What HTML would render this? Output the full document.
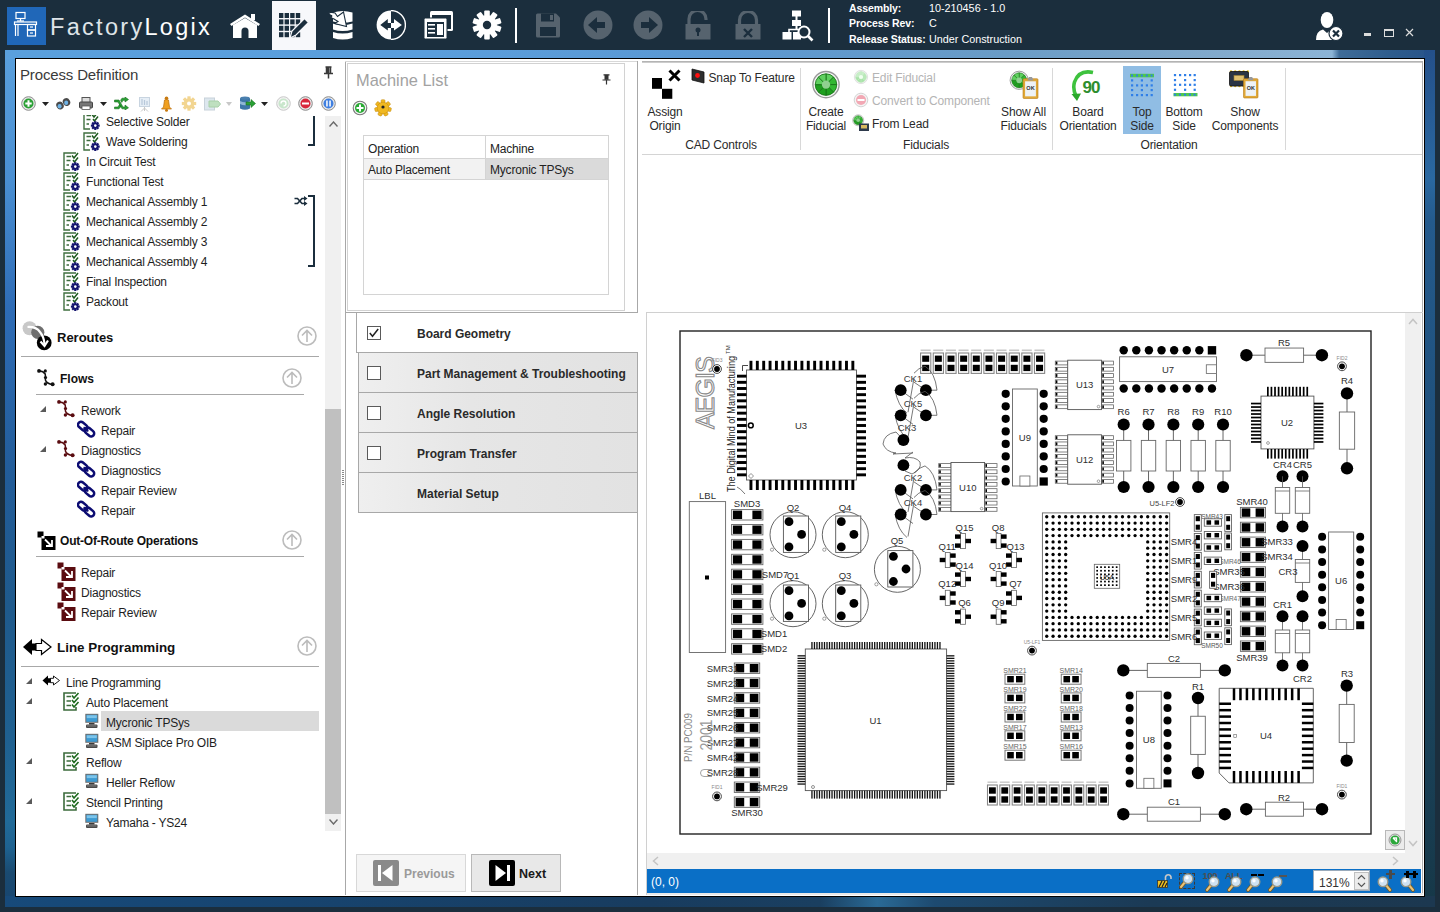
<!DOCTYPE html><html><head><meta charset="utf-8"><style>
*{box-sizing:border-box;margin:0;padding:0}
html,body{width:1440px;height:912px;overflow:hidden;background:#1b2e3d;font-family:"Liberation Sans",sans-serif;color:#1e1e1e}
.a{position:absolute}
.t{position:absolute;white-space:nowrap;font-size:11.5px;line-height:14px}
.b{font-weight:bold}
</style></head><body>
<div class="a" style="left:0;top:0;width:1440px;height:50px;background:#1b2e3d"></div>
<div class="a" style="left:5px;top:50px;width:1430px;height:857px;background:linear-gradient(180deg,#2a5f96 0%,#23558a 40%,#1c4a78 70%,#183f66 100%)"></div>
<div class="a" style="left:5px;top:50px;width:11px;height:857px;background:linear-gradient(180deg,#5aa0dd 0%,#4a8fd2 15%,#2e6cb6 30%,#225c98 50%,#1f5a8c 65%,#1f6090 80%,#216a98 90%,#1e6290 93%,#1a4a70 96%,#174570 100%)"></div>
<div class="a" style="left:5px;top:50px;width:1430px;height:9px;background:linear-gradient(90deg,#5aa0dd 0%,#5a9edc 30%,#5b98d2 50%,#6a9cc6 70%,#82aacc 85%,#8cb4d6 92.8%,#3f6c98 93.3%,#2e5c8c 97%,#27538a 100%)"></div>
<div class="a" style="left:1424px;top:50px;width:11px;height:857px;background:linear-gradient(180deg,#24508a 0%,#2a68a0 15%,#245a8c 20%,#1e4e78 50%,#1b4660 70%,#183c50 90%,#163848 100%)"></div>
<div class="a" style="left:5px;top:896px;width:1430px;height:11px;background:linear-gradient(90deg,#174a7a 0%,#17446f 20%,#183c5f 45%,#1a3f60 57%,#2a6a96 61%,#1d4a70 65%,#1b3a55 80%,#1c3850 100%)"></div>
<div class="a" style="left:15px;top:58px;width:1410px;height:839px;border:1px solid #000;background:#fff"></div>
<div class="a" style="left:7px;top:7px;width:39px;height:38px;background:#2067b8"></div>
<svg class="a" style="left:7px;top:7px" width="39" height="38" viewBox="0 0 39 38" fill="none" stroke="#fff" stroke-width="1.2">
    <rect x="9" y="5.5" width="9" height="6"/><line x1="13.5" y1="11.5" x2="13.5" y2="14"/><line x1="10" y1="14" x2="17" y2="14"/>
    <rect x="7.5" y="15" width="22" height="2.5"/><line x1="8.5" y1="17.5" x2="8.5" y2="29"/><line x1="11" y1="17.5" x2="11" y2="29"/>
    <rect x="20.5" y="17.5" width="8" height="5.5"/><rect x="20.5" y="23" width="8" height="6"/>
    <line x1="23" y1="20" x2="26" y2="20"/><line x1="23" y1="26" x2="26" y2="26"/></svg>
<div class="t" style="left:50px;top:12.5px;font-size:23.5px;line-height:28px;color:#dfe4e8;letter-spacing:2.3px">Factory<span style="color:#fff">Logix</span></div>
<div class="a" style="left:272px;top:1px;width:44px;height:49px;background:#f7f8fb"></div>
<svg class="a" style="left:229px;top:13px" width="32" height="26" viewBox="0 0 32 26">
    <path d="M1 11 L16 1.5 L31 11 L29.5 13 L16 4.5 L2.5 13Z" fill="#ffffff"/><rect x="22" y="1" width="4" height="6" fill="#ffffff"/>
    <path d="M4 12 L16 5 L28 12 V25 H19.5 V18 A3.5 3.5 0 0 0 12.5 18 V25 H4Z" fill="#ffffff"/></svg>
<svg class="a" style="left:278px;top:12px" width="31" height="27" viewBox="0 0 31 27"><rect x="1.0" y="1.0" width="4.4" height="5" fill="#1b2e3d"/><rect x="6.6" y="1.0" width="4.4" height="5" fill="#1b2e3d"/><rect x="12.2" y="1.0" width="4.4" height="5" fill="#1b2e3d"/><rect x="17.799999999999997" y="1.0" width="4.4" height="5" fill="#1b2e3d"/><rect x="1.0" y="7.4" width="4.4" height="5" fill="#1b2e3d"/><rect x="6.6" y="7.4" width="4.4" height="5" fill="#1b2e3d"/><rect x="12.2" y="7.4" width="4.4" height="5" fill="#1b2e3d"/><rect x="17.799999999999997" y="7.4" width="4.4" height="5" fill="#1b2e3d"/><rect x="1.0" y="13.8" width="4.4" height="5" fill="#1b2e3d"/><rect x="6.6" y="13.8" width="4.4" height="5" fill="#1b2e3d"/><rect x="12.2" y="13.8" width="4.4" height="5" fill="#1b2e3d"/><rect x="17.799999999999997" y="13.8" width="4.4" height="5" fill="#1b2e3d"/><rect x="1.0" y="20.200000000000003" width="4.4" height="5" fill="#1b2e3d"/><rect x="6.6" y="20.200000000000003" width="4.4" height="5" fill="#1b2e3d"/><rect x="12.2" y="20.200000000000003" width="4.4" height="5" fill="#1b2e3d"/><rect x="17.799999999999997" y="20.200000000000003" width="4.4" height="5" fill="#1b2e3d"/>
    <path d="M12 26 L14 19 L26.5 6.5 L30.5 10.5 L18 23 Z" fill="#1b2e3d" stroke="#f7f8fb" stroke-width="1.2"/></svg>
<svg class="a" style="left:328px;top:10px" width="26" height="31" viewBox="0 0 26 31">
    <path d="M5 22 Q14.5 25 24.5 22 V28 Q14.5 31 5 28Z" fill="#ffffff"/>
    <path d="M5 13.5 Q14.5 16.5 24.5 13.5 V19.5 Q14.5 22.5 5 19.5Z" fill="#ffffff"/>
    <path d="M5 2.5 Q14.5 -0.5 24.5 2.5 V11.5 Q14.5 14 5 11.5Z" fill="#ffffff"/>
    <path d="M0.8 2.8 Q4 1.8 7 3 L9.5 6.5 L15.5 2 L18.5 16.5 L6.5 13.5 L10 11.5 L6 9 Q3 8 2.5 7 Q4.5 6.5 3.5 5.5 Q1 5 0.8 2.8Z" fill="#ffffff" stroke="#1b2e3d" stroke-width="1.1" stroke-linejoin="miter"/></svg>
<svg class="a" style="left:376px;top:10px" width="30" height="30" viewBox="0 0 30 30">
    <path d="M15 0.6 A14.4 14.4 0 0 0 15 29.4Z" fill="#ffffff"/>
    <path d="M15 0.6 A14.4 14.4 0 0 1 15 29.4" fill="none" stroke="#ffffff" stroke-width="1.4"/>
    <path d="M4.3 15 L11.8 9 V13 H15 V18 H11.8 V20.6Z" fill="#1b2e3d"/>
    <path d="M25.9 15 L18 9 V13 H15 V18 H18 V20.6Z" fill="#ffffff"/></svg>
<svg class="a" style="left:424px;top:10px" width="30" height="30" viewBox="0 0 30 30">
    <rect x="6" y="1" width="23" height="20" rx="1.5" fill="#ffffff"/><rect x="8" y="5" width="19" height="14" fill="#1b2e3d"/>
    <rect x="0" y="8" width="23" height="21" rx="1.5" fill="#ffffff" stroke="#1b2e3d" stroke-width="1"/><rect x="3" y="12" width="17" height="15" fill="#1b2e3d"/>
    <rect x="4" y="14" width="7" height="1.6" fill="#ffffff"/><rect x="4" y="18" width="7" height="1.6" fill="#ffffff"/><rect x="4" y="22" width="7" height="1.6" fill="#ffffff"/><rect x="13" y="14" width="6" height="11" fill="#ffffff"/></svg>
<svg class="a" style="left:472px;top:10px" width="30" height="30" viewBox="-15 -15 30 30">
    <g fill="#ffffff"><rect x="-2.8" y="-14.5" width="5.6" height="6" rx="1" transform="rotate(0)"/><rect x="-2.8" y="-14.5" width="5.6" height="6" rx="1" transform="rotate(36)"/><rect x="-2.8" y="-14.5" width="5.6" height="6" rx="1" transform="rotate(72)"/><rect x="-2.8" y="-14.5" width="5.6" height="6" rx="1" transform="rotate(108)"/><rect x="-2.8" y="-14.5" width="5.6" height="6" rx="1" transform="rotate(144)"/><rect x="-2.8" y="-14.5" width="5.6" height="6" rx="1" transform="rotate(180)"/><rect x="-2.8" y="-14.5" width="5.6" height="6" rx="1" transform="rotate(216)"/><rect x="-2.8" y="-14.5" width="5.6" height="6" rx="1" transform="rotate(252)"/><rect x="-2.8" y="-14.5" width="5.6" height="6" rx="1" transform="rotate(288)"/><rect x="-2.8" y="-14.5" width="5.6" height="6" rx="1" transform="rotate(324)"/>
    <circle r="10"/></g><circle r="4.2" fill="#1b2e3d"/></svg>
<div class="a" style="left:515px;top:8px;width:1.5px;height:35px;background:#fff"></div>
<svg class="a" style="left:535px;top:13px" width="26" height="25" viewBox="0 0 26 25">
    <path d="M1 2 Q1 0.5 2.5 0.5 H21 L25 4.5 V23 Q25 24.5 23.5 24.5 H2.5 Q1 24.5 1 23Z" fill="#56636e"/>
    <rect x="6" y="0.5" width="13" height="8" fill="#1b2e3d"/><rect x="15" y="2" width="3" height="5" fill="#56636e"/>
    <rect x="5" y="14" width="16" height="9" fill="#1b2e3d"/></svg>
<svg class="a" style="left:583px;top:10px" width="30" height="30" viewBox="0 0 30 30">
    <circle cx="15" cy="15" r="14.5" fill="#56636e"/><path d="M5 15 L14 7 V12 H22 V18 H14 V23Z" fill="#1b2e3d"/></svg>
<svg class="a" style="left:633px;top:10px" width="30" height="30" viewBox="0 0 30 30">
    <circle cx="15" cy="15" r="14.5" fill="#56636e"/><path d="M25 15 L16 7 V12 H8 V18 H16 V23Z" fill="#1b2e3d"/></svg>
<svg class="a" style="left:685px;top:11px" width="26" height="29" viewBox="0 0 26 29">
    <path d="M4 13 V8 A8.5 8.5 0 0 1 21 8 V9" fill="none" stroke="#56636e" stroke-width="3.2"/>
    <rect x="0.5" y="13" width="25" height="15.5" fill="#56636e"/><circle cx="13" cy="19" r="2.5" fill="#1b2e3d"/><rect x="12" y="20" width="2" height="5" fill="#1b2e3d"/></svg>
<svg class="a" style="left:735px;top:11px" width="26" height="29" viewBox="0 0 26 29">
    <path d="M4.5 13 V9 A8.5 8.5 0 0 1 21.5 9 V13" fill="none" stroke="#56636e" stroke-width="3.2"/>
    <rect x="0.5" y="13" width="25" height="15.5" fill="#56636e"/><path d="M9 18 L17 26 M17 18 L9 26" stroke="#1b2e3d" stroke-width="2.4"/></svg>
<svg class="a" style="left:782px;top:10px" width="32" height="32" viewBox="0 0 32 32">
    <rect x="10" y="0.5" width="9" height="6" fill="#ffffff"/><rect x="13.5" y="6" width="2" height="4" fill="#ffffff"/>
    <rect x="10" y="10" width="9" height="6" fill="#ffffff"/><rect x="13.5" y="16" width="2" height="3" fill="#ffffff"/>
    <path d="M7 22 V19.5 H20 V22" fill="none" stroke="#ffffff" stroke-width="1.6"/>
    <rect x="0.5" y="22" width="9" height="7.5" fill="#ffffff"/><rect x="11" y="22" width="8" height="7.5" fill="#ffffff"/>
    <circle cx="22" cy="22" r="5.5" fill="#1b2e3d" stroke="#ffffff" stroke-width="2"/><path d="M26 26 L30.5 30.5" stroke="#ffffff" stroke-width="2.6"/></svg>
<div class="a" style="left:828px;top:8px;width:1.5px;height:35px;background:#fff"></div>
<div class="t b" style="left:849px;top:1.0px;font-size:10.5px;color:#fff;line-height:14px;letter-spacing:-0.1px">Assembly:</div>
<div class="t" style="left:929px;top:1.0px;font-size:10.8px;color:#fff;line-height:14px">10-210456 - 1.0</div>
<div class="t b" style="left:849px;top:16.3px;font-size:10.5px;color:#fff;line-height:14px;letter-spacing:-0.1px">Process Rev:</div>
<div class="t" style="left:929px;top:16.3px;font-size:10.8px;color:#fff;line-height:14px">C</div>
<div class="t b" style="left:849px;top:31.6px;font-size:10.5px;color:#fff;line-height:14px;letter-spacing:-0.1px">Release Status:</div>
<div class="t" style="left:929px;top:31.6px;font-size:10.8px;color:#fff;line-height:14px">Under Construction</div>
<svg class="a" style="left:1315px;top:12px" width="30" height="30" viewBox="0 0 30 30">
    <ellipse cx="12" cy="8" rx="6.3" ry="8" fill="#ffffff"/>
    <path d="M1 28 Q1 19 8 17.5 L12 21 L16 17.5 Q22 19 23 24 V28Z" fill="#ffffff"/>
    <circle cx="21" cy="21.5" r="7" fill="#ffffff" stroke="#1b2e3d" stroke-width="1.2"/>
    <path d="M18 18.5 L24 24.5 M24 18.5 L18 24.5" stroke="#1b2e3d" stroke-width="2.2"/></svg>
<div class="a" style="left:1364px;top:33px;width:7px;height:2.5px;background:#dcdcdc"></div>
<div class="a" style="left:1384px;top:29px;width:9.5px;height:7.5px;border:1.2px solid #dcdcdc;border-top-width:2px"></div>
<svg class="a" style="left:1405px;top:28px" width="9" height="9" viewBox="0 0 9 9"><path d="M1 1 L8 8 M8 1 L1 8" stroke="#dcdcdc" stroke-width="1.2"/></svg>
<div class="t" style="left:20px;top:66px;font-size:15px;line-height:18px;color:#3a3a3a;letter-spacing:-0.15px">Process Definition</div>
<svg class="a" style="left:323px;top:66px" width="11" height="13" viewBox="0 0 11 13"><path d="M2.5 1 H8.5 M3.5 1 V7 M7.5 1 V7 M1 7.5 H10 M5.5 7.5 V12.5" stroke="#3a3a3a" stroke-width="1.5" fill="none"/><rect x="3.5" y="1" width="3" height="6" fill="#3a3a3a"/></svg>
<svg class="a" style="left:21px;top:96px" width="15" height="15" viewBox="0 0 15 15"><circle cx="7.5" cy="7.5" r="6.8" fill="#e8e8e8" stroke="#8a8a8a" stroke-width="1"/><circle cx="7.5" cy="7.5" r="5" fill="#2aa035"/><path d="M7.5 4.3 V10.7 M4.3 7.5 H10.7" stroke="#fff" stroke-width="2"/></svg>
<svg class="a" style="left:42px;top:102px" width="7" height="4" viewBox="0 0 7 4"><path d="M0 0 H7 L3.5 4Z" fill="#222"/></svg>
<svg class="a" style="left:56px;top:97px" width="15" height="13" viewBox="0 0 15 13"><g fill="#4a4a4a"><ellipse cx="4" cy="8.5" rx="3.6" ry="4" transform="rotate(-30 4 8.5)"/><ellipse cx="10.5" cy="5" rx="3.6" ry="4" transform="rotate(-30 10.5 5)"/></g><g fill="#6fb3e6"><ellipse cx="3.6" cy="9.3" rx="2" ry="2.2"/><ellipse cx="10.2" cy="5.8" rx="2" ry="2.2"/></g></svg>
<svg class="a" style="left:79px;top:97px" width="14" height="13" viewBox="0 0 14 13"><rect x="3" y="0.5" width="8" height="5" fill="#ddd" stroke="#555"/><rect x="0.5" y="5" width="13" height="6" rx="1" fill="#777" stroke="#444"/><rect x="3" y="9" width="8" height="3.5" fill="#fff" stroke="#555" stroke-width="0.8"/></svg>
<svg class="a" style="left:100px;top:102px" width="7" height="4" viewBox="0 0 7 4"><path d="M0 0 H7 L3.5 4Z" fill="#222"/></svg>
<svg class="a" style="left:114px;top:97px" width="15" height="13" viewBox="0 0 15 13"><path d="M0.5 3 H5 L9 10 H11 V8 L14.5 10.8 L11 13 V11.8 H8 L4 5 H0.5Z M0.5 10 H4 L5.5 7.5 L6.8 9.7 L5 11.8 H0.5Z M8 1.2 H11 V0 L14.5 2.5 L11 5 V3.3 H9 L7.8 5.4 L6.6 3.2Z" fill="#2aa035" stroke="#17701e" stroke-width="0.6"/></svg>
<svg class="a" style="left:139px;top:97px" width="11" height="15" viewBox="0 0 11 15"><rect x="0.5" y="0.5" width="10" height="9" fill="#e6eef6" stroke="#c8d4e0"/><path d="M3 2 V8 M5.5 3 V8 M8 4 V8" stroke="#b8c8da" stroke-width="1.2"/><path d="M5.5 10 V14 M2 14.5 L5.5 11 L9 14.5" stroke="#c8c8c8" fill="none"/></svg>
<svg class="a" style="left:161px;top:96px" width="11" height="16" viewBox="0 0 11 16"><circle cx="5.5" cy="2.2" r="1.8" fill="#c87a10"/><path d="M3.5 4 Q5.5 3 7.5 4 L8.5 11 L10.5 13 H0.5 L2.5 11Z" fill="#f0a020" stroke="#b86c0a" stroke-width="0.7"/><circle cx="5.5" cy="14.3" r="1.5" fill="#c87a10"/></svg>
<svg class="a" style="left:181px;top:96px" width="16" height="15" viewBox="-8 -7.5 16 15"><g fill="#f2d591"><rect x="-1.6" y="-7.2" width="3.2" height="3.5" transform="rotate(0)"/><rect x="-1.6" y="-7.2" width="3.2" height="3.5" transform="rotate(45)"/><rect x="-1.6" y="-7.2" width="3.2" height="3.5" transform="rotate(90)"/><rect x="-1.6" y="-7.2" width="3.2" height="3.5" transform="rotate(135)"/><rect x="-1.6" y="-7.2" width="3.2" height="3.5" transform="rotate(180)"/><rect x="-1.6" y="-7.2" width="3.2" height="3.5" transform="rotate(225)"/><rect x="-1.6" y="-7.2" width="3.2" height="3.5" transform="rotate(270)"/><rect x="-1.6" y="-7.2" width="3.2" height="3.5" transform="rotate(315)"/><circle r="5.3"/></g><circle r="2" fill="#fff"/></svg>
<svg class="a" style="left:204px;top:96px" width="17" height="15" viewBox="0 0 17 15"><rect x="0.5" y="2" width="10" height="12" fill="#dde7ee" stroke="#c8d2da"/><path d="M5 5 H14 L16.5 8 L14 11 H5Z" fill="#bfe0c0" stroke="#a8d0a8"/></svg>
<svg class="a" style="left:226px;top:102px" width="6" height="4" viewBox="0 0 6 4"><path d="M0 0 H6 L3 4Z" fill="#c8c8c8"/></svg>
<svg class="a" style="left:239px;top:96px" width="17" height="15" viewBox="0 0 17 15"><ellipse cx="6" cy="2.5" rx="5" ry="2" fill="#4a7fae"/><path d="M1 2.5 V12.5 Q6 15 11 12.5 V2.5 Q6 5 1 2.5Z" fill="#3d76a8"/><path d="M1 5 Q6 7.5 11 5 V8 Q6 10.5 1 8Z" fill="#8fb6d6"/><path d="M7 6 H12 V3.5 L16.5 7.5 L12 11.5 V9 H7Z" fill="#2aa035" stroke="#17701e" stroke-width="0.6"/></svg>
<svg class="a" style="left:261px;top:102px" width="7" height="4" viewBox="0 0 7 4"><path d="M0 0 H7 L3.5 4Z" fill="#222"/></svg>
<svg class="a" style="left:276px;top:96px" width="15" height="15" viewBox="0 0 15 15"><circle cx="7.5" cy="7.5" r="6.8" fill="#f2f2f2" stroke="#c8c8c8" stroke-width="1"/><circle cx="7.5" cy="7.5" r="5" fill="#c9e6cc"/><path d="M5 7.5 A2.5 2.5 0 1 1 7.5 10" stroke="#fff" stroke-width="1.3" fill="none"/></svg>
<svg class="a" style="left:298px;top:96px" width="15" height="15" viewBox="0 0 15 15"><circle cx="7.5" cy="7.5" r="6.8" fill="#e8e8e8" stroke="#8a8a8a" stroke-width="1"/><circle cx="7.5" cy="7.5" r="5" fill="#d8283c"/><rect x="4" y="6.5" width="7" height="2" fill="#fff"/></svg>
<svg class="a" style="left:321px;top:96px" width="15" height="15" viewBox="0 0 15 15"><circle cx="7.5" cy="7.5" r="6.8" fill="#e8e8e8" stroke="#8a8a8a" stroke-width="1"/><circle cx="7.5" cy="7.5" r="5" fill="#3f7fe0"/><rect x="5.2" y="4.5" width="1.5" height="6" fill="#fff"/><rect x="8.3" y="4.5" width="1.5" height="6" fill="#fff"/></svg>
<div class="a" style="left:83px;top:115px;width:18px;height:15px;overflow:hidden"><div style="position:relative;top:-4px"><svg class="a" style="left:0px;top:0px" width="17" height="19" viewBox="0 0 17 19">
<path d="M13 1 H1 V18 H7" fill="none" stroke="#3f6f3f" stroke-width="1.4"/>
<path d="M3.5 4.5 H8 M3.5 8.5 H7.5 M3.5 13 H6" stroke="#3b6b3b" stroke-width="1.3"/>
<path d="M9 3.5 L11 6 L15 1 M10 8 L11.5 10 L15 5.5" fill="none" stroke="#1e5a1e" stroke-width="1.5"/>
<g transform="translate(12.3 14.6)" fill="#14146e"><rect x="-1.1" y="-4.4" width="2.2" height="2.8" transform="rotate(0)"/><rect x="-1.1" y="-4.4" width="2.2" height="2.8" transform="rotate(45)"/><rect x="-1.1" y="-4.4" width="2.2" height="2.8" transform="rotate(90)"/><rect x="-1.1" y="-4.4" width="2.2" height="2.8" transform="rotate(135)"/><rect x="-1.1" y="-4.4" width="2.2" height="2.8" transform="rotate(180)"/><rect x="-1.1" y="-4.4" width="2.2" height="2.8" transform="rotate(225)"/><rect x="-1.1" y="-4.4" width="2.2" height="2.8" transform="rotate(270)"/><rect x="-1.1" y="-4.4" width="2.2" height="2.8" transform="rotate(315)"/><circle r="3.1"/></g>
<circle cx="12.3" cy="14.6" r="1.3" fill="#fff"/></svg></div></div>
<div class="t" style="left:106px;top:115.4px;font-size:12px;letter-spacing:-0.2px;">Selective Solder</div>
<svg class="a" style="left:83px;top:132px" width="17" height="19" viewBox="0 0 17 19">
<path d="M13 1 H1 V18 H7" fill="none" stroke="#3f6f3f" stroke-width="1.4"/>
<path d="M3.5 4.5 H8 M3.5 8.5 H7.5 M3.5 13 H6" stroke="#3b6b3b" stroke-width="1.3"/>
<path d="M9 3.5 L11 6 L15 1 M10 8 L11.5 10 L15 5.5" fill="none" stroke="#1e5a1e" stroke-width="1.5"/>
<g transform="translate(12.3 14.6)" fill="#14146e"><rect x="-1.1" y="-4.4" width="2.2" height="2.8" transform="rotate(0)"/><rect x="-1.1" y="-4.4" width="2.2" height="2.8" transform="rotate(45)"/><rect x="-1.1" y="-4.4" width="2.2" height="2.8" transform="rotate(90)"/><rect x="-1.1" y="-4.4" width="2.2" height="2.8" transform="rotate(135)"/><rect x="-1.1" y="-4.4" width="2.2" height="2.8" transform="rotate(180)"/><rect x="-1.1" y="-4.4" width="2.2" height="2.8" transform="rotate(225)"/><rect x="-1.1" y="-4.4" width="2.2" height="2.8" transform="rotate(270)"/><rect x="-1.1" y="-4.4" width="2.2" height="2.8" transform="rotate(315)"/><circle r="3.1"/></g>
<circle cx="12.3" cy="14.6" r="1.3" fill="#fff"/></svg>
<div class="t" style="left:106px;top:135.4px;font-size:12px;letter-spacing:-0.2px;">Wave Soldering</div>
<svg class="a" style="left:63px;top:152px" width="17" height="19" viewBox="0 0 17 19">
<path d="M13 1 H1 V18 H7" fill="none" stroke="#3f6f3f" stroke-width="1.4"/>
<path d="M3.5 4.5 H8 M3.5 8.5 H7.5 M3.5 13 H6" stroke="#3b6b3b" stroke-width="1.3"/>
<path d="M9 3.5 L11 6 L15 1 M10 8 L11.5 10 L15 5.5" fill="none" stroke="#1e5a1e" stroke-width="1.5"/>
<g transform="translate(12.3 14.6)" fill="#14146e"><rect x="-1.1" y="-4.4" width="2.2" height="2.8" transform="rotate(0)"/><rect x="-1.1" y="-4.4" width="2.2" height="2.8" transform="rotate(45)"/><rect x="-1.1" y="-4.4" width="2.2" height="2.8" transform="rotate(90)"/><rect x="-1.1" y="-4.4" width="2.2" height="2.8" transform="rotate(135)"/><rect x="-1.1" y="-4.4" width="2.2" height="2.8" transform="rotate(180)"/><rect x="-1.1" y="-4.4" width="2.2" height="2.8" transform="rotate(225)"/><rect x="-1.1" y="-4.4" width="2.2" height="2.8" transform="rotate(270)"/><rect x="-1.1" y="-4.4" width="2.2" height="2.8" transform="rotate(315)"/><circle r="3.1"/></g>
<circle cx="12.3" cy="14.6" r="1.3" fill="#fff"/></svg>
<div class="t" style="left:86px;top:155.4px;font-size:12px;letter-spacing:-0.2px;">In Circuit Test</div>
<svg class="a" style="left:63px;top:172px" width="17" height="19" viewBox="0 0 17 19">
<path d="M13 1 H1 V18 H7" fill="none" stroke="#3f6f3f" stroke-width="1.4"/>
<path d="M3.5 4.5 H8 M3.5 8.5 H7.5 M3.5 13 H6" stroke="#3b6b3b" stroke-width="1.3"/>
<path d="M9 3.5 L11 6 L15 1 M10 8 L11.5 10 L15 5.5" fill="none" stroke="#1e5a1e" stroke-width="1.5"/>
<g transform="translate(12.3 14.6)" fill="#14146e"><rect x="-1.1" y="-4.4" width="2.2" height="2.8" transform="rotate(0)"/><rect x="-1.1" y="-4.4" width="2.2" height="2.8" transform="rotate(45)"/><rect x="-1.1" y="-4.4" width="2.2" height="2.8" transform="rotate(90)"/><rect x="-1.1" y="-4.4" width="2.2" height="2.8" transform="rotate(135)"/><rect x="-1.1" y="-4.4" width="2.2" height="2.8" transform="rotate(180)"/><rect x="-1.1" y="-4.4" width="2.2" height="2.8" transform="rotate(225)"/><rect x="-1.1" y="-4.4" width="2.2" height="2.8" transform="rotate(270)"/><rect x="-1.1" y="-4.4" width="2.2" height="2.8" transform="rotate(315)"/><circle r="3.1"/></g>
<circle cx="12.3" cy="14.6" r="1.3" fill="#fff"/></svg>
<div class="t" style="left:86px;top:175.4px;font-size:12px;letter-spacing:-0.2px;">Functional Test</div>
<svg class="a" style="left:63px;top:192px" width="17" height="19" viewBox="0 0 17 19">
<path d="M13 1 H1 V18 H7" fill="none" stroke="#3f6f3f" stroke-width="1.4"/>
<path d="M3.5 4.5 H8 M3.5 8.5 H7.5 M3.5 13 H6" stroke="#3b6b3b" stroke-width="1.3"/>
<path d="M9 3.5 L11 6 L15 1 M10 8 L11.5 10 L15 5.5" fill="none" stroke="#1e5a1e" stroke-width="1.5"/>
<g transform="translate(12.3 14.6)" fill="#14146e"><rect x="-1.1" y="-4.4" width="2.2" height="2.8" transform="rotate(0)"/><rect x="-1.1" y="-4.4" width="2.2" height="2.8" transform="rotate(45)"/><rect x="-1.1" y="-4.4" width="2.2" height="2.8" transform="rotate(90)"/><rect x="-1.1" y="-4.4" width="2.2" height="2.8" transform="rotate(135)"/><rect x="-1.1" y="-4.4" width="2.2" height="2.8" transform="rotate(180)"/><rect x="-1.1" y="-4.4" width="2.2" height="2.8" transform="rotate(225)"/><rect x="-1.1" y="-4.4" width="2.2" height="2.8" transform="rotate(270)"/><rect x="-1.1" y="-4.4" width="2.2" height="2.8" transform="rotate(315)"/><circle r="3.1"/></g>
<circle cx="12.3" cy="14.6" r="1.3" fill="#fff"/></svg>
<div class="t" style="left:86px;top:195.4px;font-size:12px;letter-spacing:-0.2px;">Mechanical Assembly 1</div>
<svg class="a" style="left:63px;top:212px" width="17" height="19" viewBox="0 0 17 19">
<path d="M13 1 H1 V18 H7" fill="none" stroke="#3f6f3f" stroke-width="1.4"/>
<path d="M3.5 4.5 H8 M3.5 8.5 H7.5 M3.5 13 H6" stroke="#3b6b3b" stroke-width="1.3"/>
<path d="M9 3.5 L11 6 L15 1 M10 8 L11.5 10 L15 5.5" fill="none" stroke="#1e5a1e" stroke-width="1.5"/>
<g transform="translate(12.3 14.6)" fill="#14146e"><rect x="-1.1" y="-4.4" width="2.2" height="2.8" transform="rotate(0)"/><rect x="-1.1" y="-4.4" width="2.2" height="2.8" transform="rotate(45)"/><rect x="-1.1" y="-4.4" width="2.2" height="2.8" transform="rotate(90)"/><rect x="-1.1" y="-4.4" width="2.2" height="2.8" transform="rotate(135)"/><rect x="-1.1" y="-4.4" width="2.2" height="2.8" transform="rotate(180)"/><rect x="-1.1" y="-4.4" width="2.2" height="2.8" transform="rotate(225)"/><rect x="-1.1" y="-4.4" width="2.2" height="2.8" transform="rotate(270)"/><rect x="-1.1" y="-4.4" width="2.2" height="2.8" transform="rotate(315)"/><circle r="3.1"/></g>
<circle cx="12.3" cy="14.6" r="1.3" fill="#fff"/></svg>
<div class="t" style="left:86px;top:215.4px;font-size:12px;letter-spacing:-0.2px;">Mechanical Assembly 2</div>
<svg class="a" style="left:63px;top:232px" width="17" height="19" viewBox="0 0 17 19">
<path d="M13 1 H1 V18 H7" fill="none" stroke="#3f6f3f" stroke-width="1.4"/>
<path d="M3.5 4.5 H8 M3.5 8.5 H7.5 M3.5 13 H6" stroke="#3b6b3b" stroke-width="1.3"/>
<path d="M9 3.5 L11 6 L15 1 M10 8 L11.5 10 L15 5.5" fill="none" stroke="#1e5a1e" stroke-width="1.5"/>
<g transform="translate(12.3 14.6)" fill="#14146e"><rect x="-1.1" y="-4.4" width="2.2" height="2.8" transform="rotate(0)"/><rect x="-1.1" y="-4.4" width="2.2" height="2.8" transform="rotate(45)"/><rect x="-1.1" y="-4.4" width="2.2" height="2.8" transform="rotate(90)"/><rect x="-1.1" y="-4.4" width="2.2" height="2.8" transform="rotate(135)"/><rect x="-1.1" y="-4.4" width="2.2" height="2.8" transform="rotate(180)"/><rect x="-1.1" y="-4.4" width="2.2" height="2.8" transform="rotate(225)"/><rect x="-1.1" y="-4.4" width="2.2" height="2.8" transform="rotate(270)"/><rect x="-1.1" y="-4.4" width="2.2" height="2.8" transform="rotate(315)"/><circle r="3.1"/></g>
<circle cx="12.3" cy="14.6" r="1.3" fill="#fff"/></svg>
<div class="t" style="left:86px;top:235.4px;font-size:12px;letter-spacing:-0.2px;">Mechanical Assembly 3</div>
<svg class="a" style="left:63px;top:252px" width="17" height="19" viewBox="0 0 17 19">
<path d="M13 1 H1 V18 H7" fill="none" stroke="#3f6f3f" stroke-width="1.4"/>
<path d="M3.5 4.5 H8 M3.5 8.5 H7.5 M3.5 13 H6" stroke="#3b6b3b" stroke-width="1.3"/>
<path d="M9 3.5 L11 6 L15 1 M10 8 L11.5 10 L15 5.5" fill="none" stroke="#1e5a1e" stroke-width="1.5"/>
<g transform="translate(12.3 14.6)" fill="#14146e"><rect x="-1.1" y="-4.4" width="2.2" height="2.8" transform="rotate(0)"/><rect x="-1.1" y="-4.4" width="2.2" height="2.8" transform="rotate(45)"/><rect x="-1.1" y="-4.4" width="2.2" height="2.8" transform="rotate(90)"/><rect x="-1.1" y="-4.4" width="2.2" height="2.8" transform="rotate(135)"/><rect x="-1.1" y="-4.4" width="2.2" height="2.8" transform="rotate(180)"/><rect x="-1.1" y="-4.4" width="2.2" height="2.8" transform="rotate(225)"/><rect x="-1.1" y="-4.4" width="2.2" height="2.8" transform="rotate(270)"/><rect x="-1.1" y="-4.4" width="2.2" height="2.8" transform="rotate(315)"/><circle r="3.1"/></g>
<circle cx="12.3" cy="14.6" r="1.3" fill="#fff"/></svg>
<div class="t" style="left:86px;top:255.4px;font-size:12px;letter-spacing:-0.2px;">Mechanical Assembly 4</div>
<svg class="a" style="left:63px;top:272px" width="17" height="19" viewBox="0 0 17 19">
<path d="M13 1 H1 V18 H7" fill="none" stroke="#3f6f3f" stroke-width="1.4"/>
<path d="M3.5 4.5 H8 M3.5 8.5 H7.5 M3.5 13 H6" stroke="#3b6b3b" stroke-width="1.3"/>
<path d="M9 3.5 L11 6 L15 1 M10 8 L11.5 10 L15 5.5" fill="none" stroke="#1e5a1e" stroke-width="1.5"/>
<g transform="translate(12.3 14.6)" fill="#14146e"><rect x="-1.1" y="-4.4" width="2.2" height="2.8" transform="rotate(0)"/><rect x="-1.1" y="-4.4" width="2.2" height="2.8" transform="rotate(45)"/><rect x="-1.1" y="-4.4" width="2.2" height="2.8" transform="rotate(90)"/><rect x="-1.1" y="-4.4" width="2.2" height="2.8" transform="rotate(135)"/><rect x="-1.1" y="-4.4" width="2.2" height="2.8" transform="rotate(180)"/><rect x="-1.1" y="-4.4" width="2.2" height="2.8" transform="rotate(225)"/><rect x="-1.1" y="-4.4" width="2.2" height="2.8" transform="rotate(270)"/><rect x="-1.1" y="-4.4" width="2.2" height="2.8" transform="rotate(315)"/><circle r="3.1"/></g>
<circle cx="12.3" cy="14.6" r="1.3" fill="#fff"/></svg>
<div class="t" style="left:86px;top:275.4px;font-size:12px;letter-spacing:-0.2px;">Final Inspection</div>
<svg class="a" style="left:63px;top:292px" width="17" height="19" viewBox="0 0 17 19">
<path d="M13 1 H1 V18 H7" fill="none" stroke="#3f6f3f" stroke-width="1.4"/>
<path d="M3.5 4.5 H8 M3.5 8.5 H7.5 M3.5 13 H6" stroke="#3b6b3b" stroke-width="1.3"/>
<path d="M9 3.5 L11 6 L15 1 M10 8 L11.5 10 L15 5.5" fill="none" stroke="#1e5a1e" stroke-width="1.5"/>
<g transform="translate(12.3 14.6)" fill="#14146e"><rect x="-1.1" y="-4.4" width="2.2" height="2.8" transform="rotate(0)"/><rect x="-1.1" y="-4.4" width="2.2" height="2.8" transform="rotate(45)"/><rect x="-1.1" y="-4.4" width="2.2" height="2.8" transform="rotate(90)"/><rect x="-1.1" y="-4.4" width="2.2" height="2.8" transform="rotate(135)"/><rect x="-1.1" y="-4.4" width="2.2" height="2.8" transform="rotate(180)"/><rect x="-1.1" y="-4.4" width="2.2" height="2.8" transform="rotate(225)"/><rect x="-1.1" y="-4.4" width="2.2" height="2.8" transform="rotate(270)"/><rect x="-1.1" y="-4.4" width="2.2" height="2.8" transform="rotate(315)"/><circle r="3.1"/></g>
<circle cx="12.3" cy="14.6" r="1.3" fill="#fff"/></svg>
<div class="t" style="left:86px;top:295.4px;font-size:12px;letter-spacing:-0.2px;">Packout</div>
<div class="a" style="left:308px;top:116px;width:7px;height:30px;border-right:2px solid #1b2e3d;border-bottom:2px solid #1b2e3d"></div>
<div class="a" style="left:308px;top:195px;width:7px;height:72px;border:2px solid #1b2e3d;border-left:none"></div>
<svg class="a" style="left:294px;top:196px" width="14" height="10" viewBox="0 0 14 10"><path d="M0.5 2.5 H3.5 L8 7.5 H11 M0.5 7.5 H3.5 L8 2.5 H11" fill="none" stroke="#1b2e3d" stroke-width="1.6"/><path d="M10 0 L13.5 2.5 L10 5Z M10 5 L13.5 7.5 L10 10Z" fill="#1b2e3d"/></svg>
<svg class="a" style="left:21px;top:320px" width="32" height="32" viewBox="0 0 32 32">
<circle cx="8.6" cy="8.3" r="7" fill="#c8c8c8"/><circle cx="16.8" cy="12.3" r="6.6" fill="#6e6e6e"/>
<circle cx="23.2" cy="22.8" r="7.4" fill="#000"/>
<path d="M6.5 7 Q15 6.5 19 12 Q23 17 23.5 24" fill="none" stroke="#fff" stroke-width="2.2"/>
<path d="M19.5 21.5 L23.5 26 L27 20.5" fill="none" stroke="#fff" stroke-width="2.2"/></svg>
<div class="t b" style="left:57px;top:330px;font-size:13px;line-height:16px;color:#111">Reroutes</div>
<svg class="a" style="left:297px;top:326px" width="20" height="20" viewBox="0 0 20 20">
<circle cx="10" cy="10" r="9" fill="none" stroke="#bcbcbc" stroke-width="1.6"/>
<path d="M10 16 V4.5 M5 9.5 L10 4.5 L15 9.5" fill="none" stroke="#bcbcbc" stroke-width="1.6"/></svg>
<div class="a" style="left:21px;top:356px;width:298px;height:1px;background:#a8a8a8"></div>
<svg class="a" style="left:37px;top:369px" width="18" height="18" viewBox="0 0 18 18">
<path d="M2 1.8 Q6.5 2.2 8.2 5 Q8.8 8 8.4 11 Q9.5 14.8 16 15.4" fill="none" stroke="#111" stroke-width="1.5"/>
<g fill="#111"><circle cx="2" cy="1.9" r="1.9"/><circle cx="8.3" cy="1.9" r="1.6"/><circle cx="8.5" cy="8.5" r="1.6"/><circle cx="8.4" cy="15" r="1.7"/><circle cx="15.6" cy="15.3" r="2"/></g></svg>
<div class="t b" style="left:60px;top:372px;font-size:12px;line-height:14px;color:#111">Flows</div>
<svg class="a" style="left:282px;top:368px" width="20" height="20" viewBox="0 0 20 20">
<circle cx="10" cy="10" r="9" fill="none" stroke="#bcbcbc" stroke-width="1.6"/>
<path d="M10 16 V4.5 M5 9.5 L10 4.5 L15 9.5" fill="none" stroke="#bcbcbc" stroke-width="1.6"/></svg>
<div class="a" style="left:36px;top:394px;width:268px;height:1px;background:#a8a8a8"></div>
<svg class="a" style="left:40px;top:406px" width="7" height="6" viewBox="0 0 7 6"><path d="M0 6 L6 0 V6Z" fill="#5a5a5a"/></svg>
<svg class="a" style="left:57px;top:400px" width="18" height="18" viewBox="0 0 18 18">
<path d="M2 1.8 Q6.5 2.2 8.2 5 Q8.8 8 8.4 11 Q9.5 14.8 16 15.4" fill="none" stroke="#5a0c10" stroke-width="1.5"/>
<g fill="#5a0c10"><circle cx="2" cy="1.9" r="1.9"/><circle cx="8.3" cy="1.9" r="1.6"/><circle cx="8.5" cy="8.5" r="1.6"/><circle cx="8.4" cy="15" r="1.7"/><circle cx="15.6" cy="15.3" r="2"/></g></svg>
<div class="t" style="left:81px;top:403.9px;font-size:12px;letter-spacing:-0.2px;">Rework</div>
<svg class="a" style="left:77px;top:420px" width="19" height="18" viewBox="0 0 19 18">
<g fill="none" stroke="#0c0c72" stroke-width="2.5"><rect x="0.5" y="3.2" width="10.5" height="6" rx="3" transform="rotate(40 5.75 6.2)"/>
<rect x="7.2" y="9" width="10.5" height="6" rx="3" transform="rotate(40 12.45 12)"/>
<path d="M6.5 7.5 Q9.5 9 11 11.5" stroke-width="2.2"/></g></svg>
<div class="t" style="left:101px;top:423.9px;font-size:12px;letter-spacing:-0.2px;">Repair</div>
<svg class="a" style="left:40px;top:446px" width="7" height="6" viewBox="0 0 7 6"><path d="M0 6 L6 0 V6Z" fill="#5a5a5a"/></svg>
<svg class="a" style="left:57px;top:440px" width="18" height="18" viewBox="0 0 18 18">
<path d="M2 1.8 Q6.5 2.2 8.2 5 Q8.8 8 8.4 11 Q9.5 14.8 16 15.4" fill="none" stroke="#5a0c10" stroke-width="1.5"/>
<g fill="#5a0c10"><circle cx="2" cy="1.9" r="1.9"/><circle cx="8.3" cy="1.9" r="1.6"/><circle cx="8.5" cy="8.5" r="1.6"/><circle cx="8.4" cy="15" r="1.7"/><circle cx="15.6" cy="15.3" r="2"/></g></svg>
<div class="t" style="left:81px;top:443.9px;font-size:12px;letter-spacing:-0.2px;">Diagnostics</div>
<svg class="a" style="left:77px;top:460px" width="19" height="18" viewBox="0 0 19 18">
<g fill="none" stroke="#0c0c72" stroke-width="2.5"><rect x="0.5" y="3.2" width="10.5" height="6" rx="3" transform="rotate(40 5.75 6.2)"/>
<rect x="7.2" y="9" width="10.5" height="6" rx="3" transform="rotate(40 12.45 12)"/>
<path d="M6.5 7.5 Q9.5 9 11 11.5" stroke-width="2.2"/></g></svg>
<div class="t" style="left:101px;top:463.9px;font-size:12px;letter-spacing:-0.2px;">Diagnostics</div>
<svg class="a" style="left:77px;top:480px" width="19" height="18" viewBox="0 0 19 18">
<g fill="none" stroke="#0c0c72" stroke-width="2.5"><rect x="0.5" y="3.2" width="10.5" height="6" rx="3" transform="rotate(40 5.75 6.2)"/>
<rect x="7.2" y="9" width="10.5" height="6" rx="3" transform="rotate(40 12.45 12)"/>
<path d="M6.5 7.5 Q9.5 9 11 11.5" stroke-width="2.2"/></g></svg>
<div class="t" style="left:101px;top:483.9px;font-size:12px;letter-spacing:-0.2px;">Repair Review</div>
<svg class="a" style="left:77px;top:500px" width="19" height="18" viewBox="0 0 19 18">
<g fill="none" stroke="#0c0c72" stroke-width="2.5"><rect x="0.5" y="3.2" width="10.5" height="6" rx="3" transform="rotate(40 5.75 6.2)"/>
<rect x="7.2" y="9" width="10.5" height="6" rx="3" transform="rotate(40 12.45 12)"/>
<path d="M6.5 7.5 Q9.5 9 11 11.5" stroke-width="2.2"/></g></svg>
<div class="t" style="left:101px;top:503.9px;font-size:12px;letter-spacing:-0.2px;">Repair</div>
<svg class="a" style="left:37px;top:531px" width="19" height="19" viewBox="0 0 19 19">
<rect x="0.5" y="0.5" width="6" height="6" fill="#000"/><rect x="4.5" y="5" width="14" height="14" fill="#000"/>
<rect x="4.5" y="5" width="3" height="2.5" fill="#fff"/>
<path d="M8 8.5 L14 14.5 M15 9 V15 H9" fill="none" stroke="#fff" stroke-width="1.8"/></svg>
<div class="t b" style="left:60px;top:534px;font-size:12px;line-height:14px;color:#111;letter-spacing:-0.2px">Out-Of-Route Operations</div>
<svg class="a" style="left:282px;top:530px" width="20" height="20" viewBox="0 0 20 20">
<circle cx="10" cy="10" r="9" fill="none" stroke="#bcbcbc" stroke-width="1.6"/>
<path d="M10 16 V4.5 M5 9.5 L10 4.5 L15 9.5" fill="none" stroke="#bcbcbc" stroke-width="1.6"/></svg>
<div class="a" style="left:36px;top:556px;width:268px;height:1px;background:#a8a8a8"></div>
<svg class="a" style="left:57px;top:562px" width="19" height="19" viewBox="0 0 19 19">
<rect x="0.5" y="0.5" width="6" height="6" fill="#5a0c10"/><rect x="4.5" y="5" width="14" height="14" fill="#5a0c10"/>
<rect x="4.5" y="5" width="3" height="2.5" fill="#fff"/>
<path d="M8 8.5 L14 14.5 M15 9 V15 H9" fill="none" stroke="#fff" stroke-width="1.8"/></svg>
<div class="t" style="left:81px;top:565.9px;font-size:12px;letter-spacing:-0.2px;">Repair</div>
<svg class="a" style="left:57px;top:582px" width="19" height="19" viewBox="0 0 19 19">
<rect x="0.5" y="0.5" width="6" height="6" fill="#5a0c10"/><rect x="4.5" y="5" width="14" height="14" fill="#5a0c10"/>
<rect x="4.5" y="5" width="3" height="2.5" fill="#fff"/>
<path d="M8 8.5 L14 14.5 M15 9 V15 H9" fill="none" stroke="#fff" stroke-width="1.8"/></svg>
<div class="t" style="left:81px;top:585.9px;font-size:12px;letter-spacing:-0.2px;">Diagnostics</div>
<svg class="a" style="left:57px;top:602px" width="19" height="19" viewBox="0 0 19 19">
<rect x="0.5" y="0.5" width="6" height="6" fill="#5a0c10"/><rect x="4.5" y="5" width="14" height="14" fill="#5a0c10"/>
<rect x="4.5" y="5" width="3" height="2.5" fill="#fff"/>
<path d="M8 8.5 L14 14.5 M15 9 V15 H9" fill="none" stroke="#fff" stroke-width="1.8"/></svg>
<div class="t" style="left:81px;top:605.9px;font-size:12px;letter-spacing:-0.2px;">Repair Review</div>
<svg class="a" style="left:22px;top:638px" width="30" height="18" viewBox="0 0 30 18"><path d="M1 9 L10 1 V5.5 H15 V12.5 H10 V17Z" fill="#000"/><path d="M29 9 L19.5 1.5 V5.5 H14 V12.5 H19.5 V16.5Z" fill="#fff" stroke="#000" stroke-width="1.2"/></svg>
<div class="t b" style="left:57px;top:640px;font-size:13.4px;line-height:16px;color:#111">Line Programming</div>
<svg class="a" style="left:297px;top:636px" width="20" height="20" viewBox="0 0 20 20">
<circle cx="10" cy="10" r="9" fill="none" stroke="#bcbcbc" stroke-width="1.6"/>
<path d="M10 16 V4.5 M5 9.5 L10 4.5 L15 9.5" fill="none" stroke="#bcbcbc" stroke-width="1.6"/></svg>
<div class="a" style="left:21px;top:666px;width:298px;height:1px;background:#a8a8a8"></div>
<svg class="a" style="left:26px;top:678px" width="7" height="6" viewBox="0 0 7 6"><path d="M0 6 L6 0 V6Z" fill="#5a5a5a"/></svg>
<svg class="a" style="left:42px;top:675px" width="18" height="11" viewBox="0 0 18 11"><path d="M0.5 5.5 L6 0.5 V3.3 H9 V7.7 H6 V10.5Z" fill="#000"/><path d="M17.5 5.5 L11.5 1 V3.3 H8.5 V7.7 H11.5 V10Z" fill="#fff" stroke="#000" stroke-width="0.9"/></svg>
<div class="t" style="left:66px;top:675.9px;font-size:12px;letter-spacing:-0.2px;">Line Programming</div>
<svg class="a" style="left:26px;top:698px" width="7" height="6" viewBox="0 0 7 6"><path d="M0 6 L6 0 V6Z" fill="#5a5a5a"/></svg>
<svg class="a" style="left:63px;top:692px" width="17" height="19" viewBox="0 0 17 19">
<path d="M13 1 H1 V18 H13 V15" fill="none" stroke="#3b6b3b" stroke-width="1.6"/>
<path d="M3.5 4.5 H8 M3.5 9 H8 M3.5 13.5 H8" stroke="#3b6b3b" stroke-width="1.3"/>
<path d="M9 3.5 L11 6 L15.5 1 M9 8 L11 10.5 L15.5 5.5 M9 12.5 L11 15 L15.5 10" fill="none" stroke="#1e6a1e" stroke-width="1.6"/></svg>
<div class="t" style="left:86px;top:695.9px;font-size:12px;letter-spacing:-0.2px;">Auto Placement</div>
<div class="a" style="left:101px;top:711px;width:218px;height:20px;background:#dadada"></div>
<svg class="a" style="left:84.5px;top:713px" width="15" height="17" viewBox="0 0 15 17">
<rect x="0.3" y="0.8" width="13" height="9" fill="#6e6e6e"/><rect x="1.3" y="1.8" width="11" height="7" fill="#3c9ad2"/>
<rect x="1.8" y="2.3" width="10" height="2.8" fill="#7cc4ea"/>
<rect x="4" y="10" width="5.5" height="1.6" fill="#3a3a3a"/><rect x="1" y="11.6" width="11.5" height="3.4" rx="1" fill="#4a4a4a"/><rect x="2" y="12.5" width="9.5" height="0.9" fill="#888"/></svg>
<div class="t" style="left:106px;top:715.9px;font-size:12px;letter-spacing:-0.2px;">Mycronic TPSys</div>
<svg class="a" style="left:84.5px;top:733px" width="15" height="17" viewBox="0 0 15 17">
<rect x="0.3" y="0.8" width="13" height="9" fill="#6e6e6e"/><rect x="1.3" y="1.8" width="11" height="7" fill="#3c9ad2"/>
<rect x="1.8" y="2.3" width="10" height="2.8" fill="#7cc4ea"/>
<rect x="4" y="10" width="5.5" height="1.6" fill="#3a3a3a"/><rect x="1" y="11.6" width="11.5" height="3.4" rx="1" fill="#4a4a4a"/><rect x="2" y="12.5" width="9.5" height="0.9" fill="#888"/></svg>
<div class="t" style="left:106px;top:735.9px;font-size:12px;letter-spacing:-0.2px;">ASM Siplace Pro OIB</div>
<svg class="a" style="left:26px;top:758px" width="7" height="6" viewBox="0 0 7 6"><path d="M0 6 L6 0 V6Z" fill="#5a5a5a"/></svg>
<svg class="a" style="left:63px;top:752px" width="17" height="19" viewBox="0 0 17 19">
<path d="M13 1 H1 V18 H13 V15" fill="none" stroke="#3b6b3b" stroke-width="1.6"/>
<path d="M3.5 4.5 H8 M3.5 9 H8 M3.5 13.5 H8" stroke="#3b6b3b" stroke-width="1.3"/>
<path d="M9 3.5 L11 6 L15.5 1 M9 8 L11 10.5 L15.5 5.5 M9 12.5 L11 15 L15.5 10" fill="none" stroke="#1e6a1e" stroke-width="1.6"/></svg>
<div class="t" style="left:86px;top:755.9px;font-size:12px;letter-spacing:-0.2px;">Reflow</div>
<svg class="a" style="left:84.5px;top:773px" width="15" height="17" viewBox="0 0 15 17">
<rect x="0.3" y="0.8" width="13" height="9" fill="#6e6e6e"/><rect x="1.3" y="1.8" width="11" height="7" fill="#3c9ad2"/>
<rect x="1.8" y="2.3" width="10" height="2.8" fill="#7cc4ea"/>
<rect x="4" y="10" width="5.5" height="1.6" fill="#3a3a3a"/><rect x="1" y="11.6" width="11.5" height="3.4" rx="1" fill="#4a4a4a"/><rect x="2" y="12.5" width="9.5" height="0.9" fill="#888"/></svg>
<div class="t" style="left:106px;top:775.9px;font-size:12px;letter-spacing:-0.2px;">Heller Reflow</div>
<svg class="a" style="left:26px;top:798px" width="7" height="6" viewBox="0 0 7 6"><path d="M0 6 L6 0 V6Z" fill="#5a5a5a"/></svg>
<svg class="a" style="left:63px;top:792px" width="17" height="19" viewBox="0 0 17 19">
<path d="M13 1 H1 V18 H13 V15" fill="none" stroke="#3b6b3b" stroke-width="1.6"/>
<path d="M3.5 4.5 H8 M3.5 9 H8 M3.5 13.5 H8" stroke="#3b6b3b" stroke-width="1.3"/>
<path d="M9 3.5 L11 6 L15.5 1 M9 8 L11 10.5 L15.5 5.5 M9 12.5 L11 15 L15.5 10" fill="none" stroke="#1e6a1e" stroke-width="1.6"/></svg>
<div class="t" style="left:86px;top:795.9px;font-size:12px;letter-spacing:-0.2px;">Stencil Printing</div>
<svg class="a" style="left:84.5px;top:813px" width="15" height="17" viewBox="0 0 15 17">
<rect x="0.3" y="0.8" width="13" height="9" fill="#6e6e6e"/><rect x="1.3" y="1.8" width="11" height="7" fill="#3c9ad2"/>
<rect x="1.8" y="2.3" width="10" height="2.8" fill="#7cc4ea"/>
<rect x="4" y="10" width="5.5" height="1.6" fill="#3a3a3a"/><rect x="1" y="11.6" width="11.5" height="3.4" rx="1" fill="#4a4a4a"/><rect x="2" y="12.5" width="9.5" height="0.9" fill="#888"/></svg>
<div class="t" style="left:106px;top:815.9px;font-size:12px;letter-spacing:-0.2px;">Yamaha - YS24</div>
<div class="a" style="left:325px;top:116px;width:16px;height:715px;background:#f0f0f0"></div>
<div class="a" style="left:325px;top:409px;width:16px;height:405px;background:#c0c0c0"></div>
<svg class="a" style="left:329px;top:121px" width="9" height="6" viewBox="0 0 9 6"><path d="M0.5 5.5 L4.5 1 L8.5 5.5" fill="none" stroke="#6a6a6a" stroke-width="1.4"/></svg>
<svg class="a" style="left:329px;top:819px" width="9" height="6" viewBox="0 0 9 6"><path d="M0.5 0.5 L4.5 5 L8.5 0.5" fill="none" stroke="#6a6a6a" stroke-width="1.4"/></svg>
<div class="a" style="left:342px;top:470px;width:2px;height:15px;background:repeating-linear-gradient(180deg,#888 0 1px,transparent 1px 2px)"></div>
<div class="a" style="left:345px;top:61px;width:1px;height:834px;background:#a8a8a8"></div>
<div class="a" style="left:347px;top:63px;width:278px;height:248px;border:1px solid #d2d2d2;background:#fff"></div>
<div class="a" style="left:345px;top:61px;width:293px;height:1px;background:#d8d8d8"></div>
<div class="a" style="left:637px;top:61px;width:1px;height:252px;background:#a8a8a8"></div>
<div class="a" style="left:345px;top:312px;width:293px;height:1px;background:#a8a8a8"></div>
<div class="t" style="left:356px;top:71px;font-size:16.4px;line-height:19px;color:#a2a2a2">Machine List</div>
<svg class="a" style="left:602px;top:74px" width="9" height="11" viewBox="0 0 9 11"><path d="M1.5 0.8 H7.5 M4.5 6 V10.5 M0.5 6 H8.5" stroke="#333" stroke-width="1.2" fill="none"/><rect x="2.5" y="0.8" width="4" height="5" fill="#333"/></svg>
<svg class="a" style="left:352px;top:100px" width="16" height="16" viewBox="0 0 16 16"><circle cx="8" cy="8" r="6.8" fill="#f4f4f4" stroke="#777" stroke-width="1.1"/><circle cx="8" cy="8" r="5" fill="#2aaa35"/><path d="M8 4.5 V11.5 M4.5 8 H11.5" stroke="#fff" stroke-width="2"/></svg>
<svg class="a" style="left:374px;top:99px" width="18" height="18" viewBox="-9 -9 18 18"><g fill="#f0b820" stroke="#c48a10" stroke-width="0.5"><rect x="-2" y="-8.3" width="4" height="4" rx="1" transform="rotate(0.0)"/><rect x="-2" y="-8.3" width="4" height="4" rx="1" transform="rotate(51.4)"/><rect x="-2" y="-8.3" width="4" height="4" rx="1" transform="rotate(102.8)"/><rect x="-2" y="-8.3" width="4" height="4" rx="1" transform="rotate(154.2)"/><rect x="-2" y="-8.3" width="4" height="4" rx="1" transform="rotate(205.6)"/><rect x="-2" y="-8.3" width="4" height="4" rx="1" transform="rotate(257.0)"/><rect x="-2" y="-8.3" width="4" height="4" rx="1" transform="rotate(308.4)"/><circle r="5.8"/></g><circle r="1.6" cx="0" cy="-1" fill="#222"/></svg>
<div class="a" style="left:363px;top:135px;width:246px;height:160px;border:1px solid #d4d4d4;background:#fff"></div>
<div class="a" style="left:364px;top:158px;width:121px;height:21px;background:#f2f2f2"></div>
<div class="a" style="left:486px;top:158px;width:122px;height:21px;background:#dadada"></div>
<div class="a" style="left:364px;top:158px;width:244px;height:1px;background:#d4d4d4"></div>
<div class="a" style="left:364px;top:179px;width:244px;height:1px;background:#d4d4d4"></div>
<div class="a" style="left:485px;top:136px;width:1px;height:43px;background:#d4d4d4"></div>
<div class="t" style="left:368px;top:142px;font-size:12px;letter-spacing:-0.2px;color:#222">Operation</div>
<div class="t" style="left:490px;top:142px;font-size:12px;letter-spacing:-0.2px;color:#222">Machine</div>
<div class="t" style="left:368px;top:162.5px;font-size:12px;letter-spacing:-0.2px;color:#222">Auto Placement</div>
<div class="t" style="left:490px;top:162.5px;font-size:12px;letter-spacing:-0.2px;color:#222">Mycronic TPSys</div>
<div class="a" style="left:356px;top:312px;width:282px;height:41px;border:1px solid #a8a8a8;border-right:none;background:#fff"></div>
<div class="a" style="left:358px;top:352px;width:280px;height:41px;border:1px solid #a8a8a8;background:linear-gradient(90deg,#efefef 0%,#e6e6e6 40%,#e2e2e2 100%)"></div>
<div class="a" style="left:358px;top:392px;width:280px;height:41px;border:1px solid #a8a8a8;background:linear-gradient(90deg,#efefef 0%,#e6e6e6 40%,#e2e2e2 100%)"></div>
<div class="a" style="left:358px;top:432px;width:280px;height:41px;border:1px solid #a8a8a8;background:linear-gradient(90deg,#efefef 0%,#e6e6e6 40%,#e2e2e2 100%)"></div>
<div class="a" style="left:358px;top:472px;width:280px;height:41px;border:1px solid #a8a8a8;background:linear-gradient(90deg,#efefef 0%,#e6e6e6 40%,#e2e2e2 100%)"></div>
<div class="a" style="left:637px;top:352px;width:1px;height:543px;background:#a8a8a8"></div>
<div class="a" style="left:646px;top:312px;width:1px;height:583px;background:#d0d0d0"></div>
<div class="a" style="left:367px;top:326px;width:14px;height:14px;border:1px solid #5a5a5a;background:#fff"></div>
<svg class="a" style="left:369px;top:328px" width="10" height="10" viewBox="0 0 10 10"><path d="M0.8 5 L3.5 8.2 L9.2 1" fill="none" stroke="#222" stroke-width="1.5"/></svg>
<div class="t b" style="left:417px;top:327px;font-size:12px;letter-spacing:-0.02px;color:#2a2a2a">Board Geometry</div>
<div class="a" style="left:367px;top:366px;width:14px;height:14px;border:1px solid #5a5a5a;background:#fff"></div>
<div class="t b" style="left:417px;top:367px;font-size:12px;letter-spacing:-0.02px;color:#2a2a2a">Part Management &amp; Troubleshooting</div>
<div class="a" style="left:367px;top:406px;width:14px;height:14px;border:1px solid #5a5a5a;background:#fff"></div>
<div class="t b" style="left:417px;top:407px;font-size:12px;letter-spacing:-0.02px;color:#2a2a2a">Angle Resolution</div>
<div class="a" style="left:367px;top:446px;width:14px;height:14px;border:1px solid #5a5a5a;background:#fff"></div>
<div class="t b" style="left:417px;top:447px;font-size:12px;letter-spacing:-0.02px;color:#2a2a2a">Program Transfer</div>
<div class="t b" style="left:417px;top:487px;font-size:12px;letter-spacing:-0.02px;color:#2a2a2a">Material Setup</div>
<div class="a" style="left:356px;top:854px;width:110px;height:38px;border:1px solid #d8d8d8;background:#f5f5f5"></div>
<svg class="a" style="left:373px;top:860px" width="26" height="26" viewBox="0 0 26 26"><rect width="26" height="26" rx="2" fill="#8a8a8a"/><rect x="5" y="5" width="3" height="16" fill="#fff"/><path d="M19.5 5 V21 L9 13Z" fill="#fff"/></svg>
<div class="t b" style="left:404px;top:867px;font-size:12px;color:#9a9a9a">Previous</div>
<div class="a" style="left:471px;top:854px;width:90px;height:38px;border:1px solid #b8b8b8;background:#e8e8e8"></div>
<svg class="a" style="left:489px;top:860px" width="26" height="26" viewBox="0 0 26 26"><rect width="26" height="26" rx="2" fill="#000"/><rect x="18" y="5" width="3" height="16" fill="#fff"/><path d="M6.5 5 V21 L17 13Z" fill="#fff"/></svg>
<div class="t b" style="left:519px;top:867px;font-size:12.5px;color:#1a1a1a">Next</div>
<div class="a" style="left:642px;top:61px;width:781px;height:2px;background:linear-gradient(180deg,#a8a8a8,#d8d8d8)"></div>
<div class="a" style="left:642px;top:154px;width:781px;height:1px;background:#d4d4d4"></div>
<div class="a" style="left:1422px;top:61px;width:1px;height:834px;background:#b0b0b0"></div>
<div class="a" style="left:800px;top:68px;width:1px;height:82px;background:#d8d8d8"></div>
<div class="a" style="left:1052px;top:68px;width:1px;height:82px;background:#d8d8d8"></div>
<div class="a" style="left:1285px;top:68px;width:1px;height:82px;background:#d8d8d8"></div>
<svg class="a" style="left:650px;top:68px" width="32" height="32" viewBox="0 0 32 32"><rect x="2" y="10" width="10" height="10.8" fill="#000"/><rect x="12" y="20.8" width="10.3" height="10" fill="#000"/><path d="M19.5 2.5 L29.5 12.5 M29.5 2.5 L19.5 12.5" stroke="#000" stroke-width="3"/></svg>
<div class="t" style="left:605px;top:105px;width:120px;text-align:center;font-size:12px;letter-spacing:-0.15px;color:#2a2a2a">Assign</div>
<div class="t" style="left:605px;top:119px;width:120px;text-align:center;font-size:12px;letter-spacing:-0.15px;color:#2a2a2a">Origin</div>
<svg class="a" style="left:691px;top:68px" width="15" height="16" viewBox="0 0 15 16"><path d="M1 1 L13 4 V15 L1 12Z" fill="#2e2e2e" stroke="#111" stroke-width="0.8"/><circle cx="6.5" cy="7.5" r="2.4" fill="#ff1010"/></svg>
<div class="t" style="left:708.5px;top:71px;font-size:12px;letter-spacing:-0.15px;color:#2a2a2a;">Snap To Feature</div>
<div class="t" style="left:661px;top:138px;width:120px;text-align:center;font-size:12px;letter-spacing:-0.15px;color:#2a2a2a">CAD Controls</div>
<svg class="a" style="left:810px;top:68px" width="32" height="32" viewBox="0 0 32 32"><circle cx="16" cy="16.6" r="13.11" fill="#f4f4f4" stroke="#9a9a9a" stroke-width="1.38"/><path d="M16 16.6 L16.00 5.84 A10.764000000000001 10.764000000000001 0 0 1 23.61 8.99Z" fill="#5fd05f" stroke="#157015" stroke-width="0.83"/><path d="M16 16.6 L23.61 8.99 A10.764000000000001 10.764000000000001 0 0 1 26.76 16.60Z" fill="#33b833" stroke="#157015" stroke-width="0.83"/><path d="M16 16.6 L26.76 16.60 A10.764000000000001 10.764000000000001 0 0 1 23.61 24.21Z" fill="#33b833" stroke="#157015" stroke-width="0.83"/><path d="M16 16.6 L23.61 24.21 A10.764000000000001 10.764000000000001 0 0 1 16.00 27.36Z" fill="#1fa01f" stroke="#157015" stroke-width="0.83"/><path d="M16 16.6 L16.00 27.36 A10.764000000000001 10.764000000000001 0 0 1 8.39 24.21Z" fill="#1fa01f" stroke="#157015" stroke-width="0.83"/><path d="M16 16.6 L8.39 24.21 A10.764000000000001 10.764000000000001 0 0 1 5.24 16.60Z" fill="#1fa01f" stroke="#157015" stroke-width="0.83"/><path d="M16 16.6 L5.24 16.60 A10.764000000000001 10.764000000000001 0 0 1 8.39 8.99Z" fill="#5fd05f" stroke="#157015" stroke-width="0.83"/><path d="M16 16.6 L8.39 8.99 A10.764000000000001 10.764000000000001 0 0 1 16.00 5.84Z" fill="#5fd05f" stroke="#157015" stroke-width="0.83"/><circle cx="16" cy="16.6" r="4.14" fill="#8fd08f"/></svg>
<div class="t" style="left:766px;top:105px;width:120px;text-align:center;font-size:12px;letter-spacing:-0.15px;color:#2a2a2a">Create</div>
<div class="t" style="left:766px;top:119px;width:120px;text-align:center;font-size:12px;letter-spacing:-0.15px;color:#2a2a2a">Fiducial</div>
<svg class="a" style="left:853px;top:69px" width="16" height="16" viewBox="0 0 16 16"><circle cx="8" cy="8" r="6.6499999999999995" fill="#f4f4f4" stroke="#d8d8d8" stroke-width="0.70"/><path d="M8 8 L8.00 2.54 A5.46 5.46 0 0 1 11.86 4.14Z" fill="#c8f0c8" stroke="#c0e8c0" stroke-width="0.42"/><path d="M8 8 L11.86 4.14 A5.46 5.46 0 0 1 13.46 8.00Z" fill="#b8eab8" stroke="#c0e8c0" stroke-width="0.42"/><path d="M8 8 L13.46 8.00 A5.46 5.46 0 0 1 11.86 11.86Z" fill="#b8eab8" stroke="#c0e8c0" stroke-width="0.42"/><path d="M8 8 L11.86 11.86 A5.46 5.46 0 0 1 8.00 13.46Z" fill="#a8e4a8" stroke="#c0e8c0" stroke-width="0.42"/><path d="M8 8 L8.00 13.46 A5.46 5.46 0 0 1 4.14 11.86Z" fill="#a8e4a8" stroke="#c0e8c0" stroke-width="0.42"/><path d="M8 8 L4.14 11.86 A5.46 5.46 0 0 1 2.54 8.00Z" fill="#a8e4a8" stroke="#c0e8c0" stroke-width="0.42"/><path d="M8 8 L2.54 8.00 A5.46 5.46 0 0 1 4.14 4.14Z" fill="#c8f0c8" stroke="#c0e8c0" stroke-width="0.42"/><path d="M8 8 L4.14 4.14 A5.46 5.46 0 0 1 8.00 2.54Z" fill="#c8f0c8" stroke="#c0e8c0" stroke-width="0.42"/><circle cx="8" cy="8" r="2.1" fill="#f0fff0"/></svg>
<div class="t" style="left:872px;top:71px;font-size:12px;letter-spacing:-0.15px;color:#b4b4b4;">Edit Fiducial</div>
<svg class="a" style="left:853px;top:92px" width="16" height="16" viewBox="0 0 16 16"><circle cx="8" cy="8" r="6.8" fill="#f4f4f4" stroke="#d4d4d4" stroke-width="1"/><circle cx="8" cy="8" r="5" fill="#f2a8b4"/><rect x="4.5" y="7" width="7" height="2" fill="#fff"/></svg>
<div class="t" style="left:872px;top:94px;font-size:12px;letter-spacing:-0.15px;color:#b4b4b4;">Convert to Component</div>
<svg class="a" style="left:852px;top:114px" width="18" height="18" viewBox="0 0 18 18"><circle cx="6.2" cy="6.3" r="5.51" fill="#f4f4f4" stroke="#9a9a9a" stroke-width="0.58"/><path d="M6.2 6.3 L6.20 1.78 A4.524 4.524 0 0 1 9.40 3.10Z" fill="#5fd05f" stroke="#157015" stroke-width="0.35"/><path d="M6.2 6.3 L9.40 3.10 A4.524 4.524 0 0 1 10.72 6.30Z" fill="#33b833" stroke="#157015" stroke-width="0.35"/><path d="M6.2 6.3 L10.72 6.30 A4.524 4.524 0 0 1 9.40 9.50Z" fill="#33b833" stroke="#157015" stroke-width="0.35"/><path d="M6.2 6.3 L9.40 9.50 A4.524 4.524 0 0 1 6.20 10.82Z" fill="#1fa01f" stroke="#157015" stroke-width="0.35"/><path d="M6.2 6.3 L6.20 10.82 A4.524 4.524 0 0 1 3.00 9.50Z" fill="#1fa01f" stroke="#157015" stroke-width="0.35"/><path d="M6.2 6.3 L3.00 9.50 A4.524 4.524 0 0 1 1.68 6.30Z" fill="#1fa01f" stroke="#157015" stroke-width="0.35"/><path d="M6.2 6.3 L1.68 6.30 A4.524 4.524 0 0 1 3.00 3.10Z" fill="#5fd05f" stroke="#157015" stroke-width="0.35"/><path d="M6.2 6.3 L3.00 3.10 A4.524 4.524 0 0 1 6.20 1.78Z" fill="#5fd05f" stroke="#157015" stroke-width="0.35"/><circle cx="6.2" cy="6.3" r="1.74" fill="#8fd08f"/><rect x="7" y="9.5" width="10" height="7.5" fill="#2e3a4c"/><rect x="9" y="11" width="6" height="3.5" fill="#d8b860"/></svg>
<div class="t" style="left:872px;top:117px;font-size:12px;letter-spacing:-0.15px;color:#2a2a2a;">From Lead</div>
<div class="t" style="left:866px;top:138px;width:120px;text-align:center;font-size:12px;letter-spacing:-0.15px;color:#2a2a2a">Fiducials</div>
<svg class="a" style="left:1008px;top:69px" width="32" height="31" viewBox="0 0 32 31"><circle cx="11.2" cy="11.3" r="9.12" fill="#f4f4f4" stroke="#9a9a9a" stroke-width="0.96"/><path d="M11.2 11.3 L11.20 3.81 A7.4879999999999995 7.4879999999999995 0 0 1 16.49 6.01Z" fill="#5fd05f" stroke="#157015" stroke-width="0.58"/><path d="M11.2 11.3 L16.49 6.01 A7.4879999999999995 7.4879999999999995 0 0 1 18.69 11.30Z" fill="#33b833" stroke="#157015" stroke-width="0.58"/><path d="M11.2 11.3 L18.69 11.30 A7.4879999999999995 7.4879999999999995 0 0 1 16.49 16.59Z" fill="#33b833" stroke="#157015" stroke-width="0.58"/><path d="M11.2 11.3 L16.49 16.59 A7.4879999999999995 7.4879999999999995 0 0 1 11.20 18.79Z" fill="#1fa01f" stroke="#157015" stroke-width="0.58"/><path d="M11.2 11.3 L11.20 18.79 A7.4879999999999995 7.4879999999999995 0 0 1 5.91 16.59Z" fill="#1fa01f" stroke="#157015" stroke-width="0.58"/><path d="M11.2 11.3 L5.91 16.59 A7.4879999999999995 7.4879999999999995 0 0 1 3.71 11.30Z" fill="#1fa01f" stroke="#157015" stroke-width="0.58"/><path d="M11.2 11.3 L3.71 11.30 A7.4879999999999995 7.4879999999999995 0 0 1 5.91 6.01Z" fill="#5fd05f" stroke="#157015" stroke-width="0.58"/><path d="M11.2 11.3 L5.91 6.01 A7.4879999999999995 7.4879999999999995 0 0 1 11.20 3.81Z" fill="#5fd05f" stroke="#157015" stroke-width="0.58"/><circle cx="11.2" cy="11.3" r="2.88" fill="#8fd08f"/><rect x="15" y="9.72" width="15" height="19.78" rx="1" fill="#e0a838" stroke="#b87c18" stroke-width="0.6"/>
<rect x="17.1" y="12.3" width="10.799999999999999" height="15.049999999999999" fill="#eef2f6"/>
<path d="M19.5 11.44 H25.5 L24.0 8 H21.0Z" fill="#999"/>
<text x="22.5" y="21.33" font-size="5.59" font-family="Liberation Sans" font-weight="bold" text-anchor="middle" fill="#333">OK</text></svg>
<div class="t" style="left:963.5px;top:105px;width:120px;text-align:center;font-size:12px;letter-spacing:-0.15px;color:#2a2a2a">Show All</div>
<div class="t" style="left:963.5px;top:119px;width:120px;text-align:center;font-size:12px;letter-spacing:-0.15px;color:#2a2a2a">Fiducials</div>
<svg class="a" style="left:1070px;top:69px" width="34" height="33" viewBox="0 0 34 33"><path d="M23 3.5 Q9 0.5 4.5 13 Q2.5 20 6 27" fill="none" stroke="#3ec23e" stroke-width="3.6"/><path d="M1.5 25 L7 32 L11 24.5Z" fill="#2aa82a"/><text x="21" y="24" font-family="Liberation Sans" font-weight="bold" font-size="17" text-anchor="middle" fill="#2e8e2e" letter-spacing="-1">90</text></svg>
<div class="t" style="left:1028px;top:105px;width:120px;text-align:center;font-size:12px;letter-spacing:-0.15px;color:#2a2a2a">Board</div>
<div class="t" style="left:1028px;top:119px;width:120px;text-align:center;font-size:12px;letter-spacing:-0.15px;color:#2a2a2a">Orientation</div>
<div class="a" style="left:1123px;top:66px;width:38px;height:68px;background:#90bde4"></div>
<svg class="a" style="left:1123px;top:66px" width="38" height="40" viewBox="0 0 38 40"><rect x="7" y="7.8" width="24" height="3.5" fill="#4ec84e"/><rect x="8" y="8.5" width="2" height="2" fill="#2f7fe8"/><rect x="13" y="8.5" width="2" height="2" fill="#2f7fe8"/><rect x="17.799999999999955" y="8.5" width="2" height="2" fill="#2f7fe8"/><rect x="22.799999999999955" y="8.5" width="2" height="2" fill="#2f7fe8"/><rect x="27.59999999999991" y="8.5" width="2" height="2" fill="#2f7fe8"/><rect x="8" y="13.299999999999997" width="2.2" height="2.2" fill="#2f7fe8"/><rect x="17.799999999999955" y="13.299999999999997" width="2.2" height="2.2" fill="#2f7fe8"/><rect x="27.59999999999991" y="13.299999999999997" width="2.2" height="2.2" fill="#2f7fe8"/><rect x="8" y="18.299999999999997" width="2.2" height="2.2" fill="#2f7fe8"/><rect x="13" y="18.299999999999997" width="2.2" height="2.2" fill="#2f7fe8"/><rect x="17.799999999999955" y="18.299999999999997" width="2.2" height="2.2" fill="#2f7fe8"/><rect x="22.799999999999955" y="18.299999999999997" width="2.2" height="2.2" fill="#2f7fe8"/><rect x="27.59999999999991" y="18.299999999999997" width="2.2" height="2.2" fill="#2f7fe8"/><rect x="8" y="23" width="2.2" height="2.2" fill="#2f7fe8"/><rect x="17.799999999999955" y="23" width="2.2" height="2.2" fill="#2f7fe8"/><rect x="27.59999999999991" y="23" width="2.2" height="2.2" fill="#2f7fe8"/><rect x="8" y="28" width="2.2" height="2.2" fill="#2f7fe8"/><rect x="13" y="28" width="2.2" height="2.2" fill="#2f7fe8"/><rect x="17.799999999999955" y="28" width="2.2" height="2.2" fill="#2f7fe8"/><rect x="22.799999999999955" y="28" width="2.2" height="2.2" fill="#2f7fe8"/><rect x="27.59999999999991" y="28" width="2.2" height="2.2" fill="#2f7fe8"/></svg>
<div class="t" style="left:1082px;top:105px;width:120px;text-align:center;font-size:12px;letter-spacing:-0.15px;color:#2a2a2a">Top</div>
<div class="t" style="left:1082px;top:119px;width:120px;text-align:center;font-size:12px;letter-spacing:-0.15px;color:#2a2a2a">Side</div>
<svg class="a" style="left:1165px;top:66px" width="38" height="40" viewBox="0 0 38 40"><rect x="8.5" y="27" width="24" height="3.3" fill="#4ec84e"/><rect x="8.900000000000091" y="8" width="2.2" height="2.2" fill="#2f7fe8"/><rect x="14" y="8" width="2.2" height="2.2" fill="#2f7fe8"/><rect x="19" y="8" width="2.2" height="2.2" fill="#2f7fe8"/><rect x="24" y="8" width="2.2" height="2.2" fill="#2f7fe8"/><rect x="28.59999999999991" y="8" width="2.2" height="2.2" fill="#2f7fe8"/><rect x="8.900000000000091" y="13" width="2.2" height="2.2" fill="#2f7fe8"/><rect x="19" y="13" width="2.2" height="2.2" fill="#2f7fe8"/><rect x="28.59999999999991" y="13" width="2.2" height="2.2" fill="#2f7fe8"/><rect x="8.900000000000091" y="17.700000000000003" width="2.2" height="2.2" fill="#2f7fe8"/><rect x="14" y="17.700000000000003" width="2.2" height="2.2" fill="#2f7fe8"/><rect x="19" y="17.700000000000003" width="2.2" height="2.2" fill="#2f7fe8"/><rect x="24" y="17.700000000000003" width="2.2" height="2.2" fill="#2f7fe8"/><rect x="28.59999999999991" y="17.700000000000003" width="2.2" height="2.2" fill="#2f7fe8"/><rect x="8.900000000000091" y="22.700000000000003" width="2.2" height="2.2" fill="#2f7fe8"/><rect x="19" y="22.700000000000003" width="2.2" height="2.2" fill="#2f7fe8"/><rect x="28.59999999999991" y="22.700000000000003" width="2.2" height="2.2" fill="#2f7fe8"/><rect x="8.900000000000091" y="27.7" width="2" height="2" fill="#2f7fe8"/><rect x="14" y="27.7" width="2" height="2" fill="#2f7fe8"/><rect x="19" y="27.7" width="2" height="2" fill="#2f7fe8"/><rect x="24" y="27.7" width="2" height="2" fill="#2f7fe8"/><rect x="28.59999999999991" y="27.7" width="2" height="2" fill="#2f7fe8"/></svg>
<div class="t" style="left:1124px;top:105px;width:120px;text-align:center;font-size:12px;letter-spacing:-0.15px;color:#2a2a2a">Bottom</div>
<div class="t" style="left:1124px;top:119px;width:120px;text-align:center;font-size:12px;letter-spacing:-0.15px;color:#2a2a2a">Side</div>
<svg class="a" style="left:1228px;top:69px" width="32" height="31" viewBox="0 0 32 31">
<g fill="#e8c020"><circle cx="3.0" cy="2.5" r="1.2"/><circle cx="3.0" cy="17" r="1.2"/><circle cx="7.2" cy="2.5" r="1.2"/><circle cx="7.2" cy="17" r="1.2"/><circle cx="11.4" cy="2.5" r="1.2"/><circle cx="11.4" cy="17" r="1.2"/><circle cx="15.600000000000001" cy="2.5" r="1.2"/><circle cx="15.600000000000001" cy="17" r="1.2"/><circle cx="19.8" cy="2.5" r="1.2"/><circle cx="19.8" cy="17" r="1.2"/></g>
<rect x="1.5" y="2.5" width="19" height="14.5" rx="1.5" fill="#2a3444" stroke="#111" stroke-width="0.8"/><rect x="6" y="6.5" width="10" height="5" fill="#e0c070" stroke="#a08030" stroke-width="0.6"/>
<rect x="15.5" y="9.68" width="14.5" height="19.32" rx="1" fill="#e0a838" stroke="#b87c18" stroke-width="0.6"/>
<rect x="17.53" y="12.2" width="10.44" height="14.7" fill="#eef2f6"/>
<path d="M19.85 11.36 H25.65 L24.2 8 H21.3Z" fill="#999"/>
<text x="22.75" y="21.02" font-size="5.46" font-family="Liberation Sans" font-weight="bold" text-anchor="middle" fill="#333">OK</text></svg>
<div class="t" style="left:1185px;top:105px;width:120px;text-align:center;font-size:12px;letter-spacing:-0.15px;color:#2a2a2a">Show</div>
<div class="t" style="left:1185px;top:119px;width:120px;text-align:center;font-size:12px;letter-spacing:-0.15px;color:#2a2a2a">Components</div>
<div class="t" style="left:1109px;top:138px;width:120px;text-align:center;font-size:12px;letter-spacing:-0.15px;color:#2a2a2a">Orientation</div>
<svg class="a" style="left:647px;top:313px" width="758" height="540" viewBox="647 313 758 540"><g font-family="Liberation Sans">
<rect x="680" y="331" width="691" height="503" fill="#fff" stroke="#222" stroke-width="1.4"/>
<text transform="translate(714 429) rotate(-90)" font-size="25" fill="#fff" stroke="#8a8a8a" stroke-width="1.1" letter-spacing="-0.8" font-family="Liberation Sans" textLength="72" lengthAdjust="spacingAndGlyphs">AEGIS</text>
<text transform="translate(734.5 492) rotate(-90)" font-size="10.2" fill="#2a2a2a" font-family="Liberation Sans" textLength="136" lengthAdjust="spacingAndGlyphs">The Digital Mind of Manufacturing</text>
<text transform="translate(730 354) rotate(-90)" font-size="6" fill="#333">TM</text>
<circle cx="717.00" cy="369.00" r="4.40" fill="#fff" stroke="#333" stroke-width="0.9"/>
<circle cx="717.00" cy="369.00" r="2.90" fill="#000" stroke="none" stroke-width="0"/>
<text x="717" y="361.5" font-size="5" text-anchor="middle" fill="#8a8a8a" >FID3</text>
<rect x="746.50" y="370.00" width="110.00" height="110.00" fill="#fff" stroke="#555" stroke-width="0.9"/>
<rect x="749.50" y="360.80" width="2.90" height="9.20" fill="#000"/>
<rect x="749.50" y="480.00" width="2.90" height="10.00" fill="#000"/>
<rect x="737.00" y="374.70" width="9.50" height="2.90" fill="#000"/>
<rect x="856.40" y="374.70" width="9.60" height="2.90" fill="#000"/>
<rect x="755.87" y="360.80" width="2.90" height="9.20" fill="#000"/>
<rect x="755.87" y="480.00" width="2.90" height="10.00" fill="#000"/>
<rect x="737.00" y="380.87" width="9.50" height="2.90" fill="#000"/>
<rect x="856.40" y="380.87" width="9.60" height="2.90" fill="#000"/>
<rect x="762.24" y="360.80" width="2.90" height="9.20" fill="#000"/>
<rect x="762.24" y="480.00" width="2.90" height="10.00" fill="#000"/>
<rect x="737.00" y="387.04" width="9.50" height="2.90" fill="#000"/>
<rect x="856.40" y="387.04" width="9.60" height="2.90" fill="#000"/>
<rect x="768.61" y="360.80" width="2.90" height="9.20" fill="#000"/>
<rect x="768.61" y="480.00" width="2.90" height="10.00" fill="#000"/>
<rect x="737.00" y="393.21" width="9.50" height="2.90" fill="#000"/>
<rect x="856.40" y="393.21" width="9.60" height="2.90" fill="#000"/>
<rect x="774.98" y="360.80" width="2.90" height="9.20" fill="#000"/>
<rect x="774.98" y="480.00" width="2.90" height="10.00" fill="#000"/>
<rect x="737.00" y="399.38" width="9.50" height="2.90" fill="#000"/>
<rect x="856.40" y="399.38" width="9.60" height="2.90" fill="#000"/>
<rect x="781.34" y="360.80" width="2.90" height="9.20" fill="#000"/>
<rect x="781.34" y="480.00" width="2.90" height="10.00" fill="#000"/>
<rect x="737.00" y="405.54" width="9.50" height="2.90" fill="#000"/>
<rect x="856.40" y="405.54" width="9.60" height="2.90" fill="#000"/>
<rect x="787.71" y="360.80" width="2.90" height="9.20" fill="#000"/>
<rect x="787.71" y="480.00" width="2.90" height="10.00" fill="#000"/>
<rect x="737.00" y="411.71" width="9.50" height="2.90" fill="#000"/>
<rect x="856.40" y="411.71" width="9.60" height="2.90" fill="#000"/>
<rect x="794.08" y="360.80" width="2.90" height="9.20" fill="#000"/>
<rect x="794.08" y="480.00" width="2.90" height="10.00" fill="#000"/>
<rect x="737.00" y="417.88" width="9.50" height="2.90" fill="#000"/>
<rect x="856.40" y="417.88" width="9.60" height="2.90" fill="#000"/>
<rect x="800.45" y="360.80" width="2.90" height="9.20" fill="#000"/>
<rect x="800.45" y="480.00" width="2.90" height="10.00" fill="#000"/>
<rect x="737.00" y="424.05" width="9.50" height="2.90" fill="#000"/>
<rect x="856.40" y="424.05" width="9.60" height="2.90" fill="#000"/>
<rect x="806.82" y="360.80" width="2.90" height="9.20" fill="#000"/>
<rect x="806.82" y="480.00" width="2.90" height="10.00" fill="#000"/>
<rect x="737.00" y="430.22" width="9.50" height="2.90" fill="#000"/>
<rect x="856.40" y="430.22" width="9.60" height="2.90" fill="#000"/>
<rect x="813.19" y="360.80" width="2.90" height="9.20" fill="#000"/>
<rect x="813.19" y="480.00" width="2.90" height="10.00" fill="#000"/>
<rect x="737.00" y="436.39" width="9.50" height="2.90" fill="#000"/>
<rect x="856.40" y="436.39" width="9.60" height="2.90" fill="#000"/>
<rect x="819.56" y="360.80" width="2.90" height="9.20" fill="#000"/>
<rect x="819.56" y="480.00" width="2.90" height="10.00" fill="#000"/>
<rect x="737.00" y="442.56" width="9.50" height="2.90" fill="#000"/>
<rect x="856.40" y="442.56" width="9.60" height="2.90" fill="#000"/>
<rect x="825.93" y="360.80" width="2.90" height="9.20" fill="#000"/>
<rect x="825.93" y="480.00" width="2.90" height="10.00" fill="#000"/>
<rect x="737.00" y="448.73" width="9.50" height="2.90" fill="#000"/>
<rect x="856.40" y="448.73" width="9.60" height="2.90" fill="#000"/>
<rect x="832.29" y="360.80" width="2.90" height="9.20" fill="#000"/>
<rect x="832.29" y="480.00" width="2.90" height="10.00" fill="#000"/>
<rect x="737.00" y="454.89" width="9.50" height="2.90" fill="#000"/>
<rect x="856.40" y="454.89" width="9.60" height="2.90" fill="#000"/>
<rect x="838.66" y="360.80" width="2.90" height="9.20" fill="#000"/>
<rect x="838.66" y="480.00" width="2.90" height="10.00" fill="#000"/>
<rect x="737.00" y="461.06" width="9.50" height="2.90" fill="#000"/>
<rect x="856.40" y="461.06" width="9.60" height="2.90" fill="#000"/>
<rect x="845.03" y="360.80" width="2.90" height="9.20" fill="#000"/>
<rect x="845.03" y="480.00" width="2.90" height="10.00" fill="#000"/>
<rect x="737.00" y="467.23" width="9.50" height="2.90" fill="#000"/>
<rect x="856.40" y="467.23" width="9.60" height="2.90" fill="#000"/>
<rect x="851.40" y="360.80" width="2.90" height="9.20" fill="#000"/>
<rect x="851.40" y="480.00" width="2.90" height="10.00" fill="#000"/>
<rect x="737.00" y="473.40" width="9.50" height="2.90" fill="#000"/>
<rect x="856.40" y="473.40" width="9.60" height="2.90" fill="#000"/>
<text x="801" y="428.5" font-size="9.5" text-anchor="middle" fill="#2e2e2e" >U3</text>
<circle cx="750.80" cy="425.40" r="2.40" fill="#fff" stroke="#000" stroke-width="1.5"/>
<path d="M751 473.5 L753.5 476 L751 478.5 L748.5 476Z" fill="none" stroke="#666" stroke-width="0.7"/>
<path d="M742.5 371 V365.5 H748" fill="none" stroke="#333" stroke-width="0.9"/>
<path d="M745 494 Q740 488 737 487" fill="none" stroke="#555" stroke-width="0.8"/>
<rect x="920.60" y="353.00" width="10.20" height="20.40" fill="#fff" stroke="#888" stroke-width="1.1"/>
<rect x="922.20" y="355.60" width="7.00" height="6.20" fill="#000"/>
<rect x="922.20" y="364.80" width="7.00" height="6.30" fill="#000"/>
<rect x="920.6" y="349.5" width="10" height="1.6" fill="#c8c8c8"/>
<rect x="933.25" y="353.00" width="10.20" height="20.40" fill="#fff" stroke="#888" stroke-width="1.1"/>
<rect x="934.85" y="355.60" width="7.00" height="6.20" fill="#000"/>
<rect x="934.85" y="364.80" width="7.00" height="6.30" fill="#000"/>
<rect x="933.25" y="349.5" width="10" height="1.6" fill="#c8c8c8"/>
<rect x="945.90" y="353.00" width="10.20" height="20.40" fill="#fff" stroke="#888" stroke-width="1.1"/>
<rect x="947.50" y="355.60" width="7.00" height="6.20" fill="#000"/>
<rect x="947.50" y="364.80" width="7.00" height="6.30" fill="#000"/>
<rect x="945.9" y="349.5" width="10" height="1.6" fill="#c8c8c8"/>
<rect x="958.55" y="353.00" width="10.20" height="20.40" fill="#fff" stroke="#888" stroke-width="1.1"/>
<rect x="960.15" y="355.60" width="7.00" height="6.20" fill="#000"/>
<rect x="960.15" y="364.80" width="7.00" height="6.30" fill="#000"/>
<rect x="958.5500000000001" y="349.5" width="10" height="1.6" fill="#c8c8c8"/>
<rect x="971.20" y="353.00" width="10.20" height="20.40" fill="#fff" stroke="#888" stroke-width="1.1"/>
<rect x="972.80" y="355.60" width="7.00" height="6.20" fill="#000"/>
<rect x="972.80" y="364.80" width="7.00" height="6.30" fill="#000"/>
<rect x="971.2" y="349.5" width="10" height="1.6" fill="#c8c8c8"/>
<rect x="983.85" y="353.00" width="10.20" height="20.40" fill="#fff" stroke="#888" stroke-width="1.1"/>
<rect x="985.45" y="355.60" width="7.00" height="6.20" fill="#000"/>
<rect x="985.45" y="364.80" width="7.00" height="6.30" fill="#000"/>
<rect x="983.85" y="349.5" width="10" height="1.6" fill="#c8c8c8"/>
<rect x="996.50" y="353.00" width="10.20" height="20.40" fill="#fff" stroke="#888" stroke-width="1.1"/>
<rect x="998.10" y="355.60" width="7.00" height="6.20" fill="#000"/>
<rect x="998.10" y="364.80" width="7.00" height="6.30" fill="#000"/>
<rect x="996.5" y="349.5" width="10" height="1.6" fill="#c8c8c8"/>
<rect x="1009.15" y="353.00" width="10.20" height="20.40" fill="#fff" stroke="#888" stroke-width="1.1"/>
<rect x="1010.75" y="355.60" width="7.00" height="6.20" fill="#000"/>
<rect x="1010.75" y="364.80" width="7.00" height="6.30" fill="#000"/>
<rect x="1009.15" y="349.5" width="10" height="1.6" fill="#c8c8c8"/>
<rect x="1021.80" y="353.00" width="10.20" height="20.40" fill="#fff" stroke="#888" stroke-width="1.1"/>
<rect x="1023.40" y="355.60" width="7.00" height="6.20" fill="#000"/>
<rect x="1023.40" y="364.80" width="7.00" height="6.30" fill="#000"/>
<rect x="1021.8000000000001" y="349.5" width="10" height="1.6" fill="#c8c8c8"/>
<rect x="1034.45" y="353.00" width="10.20" height="20.40" fill="#fff" stroke="#888" stroke-width="1.1"/>
<rect x="1036.05" y="355.60" width="7.00" height="6.20" fill="#000"/>
<rect x="1036.05" y="364.80" width="7.00" height="6.30" fill="#000"/>
<rect x="1034.45" y="349.5" width="10" height="1.6" fill="#c8c8c8"/>
<path d="M900.7 390.2 L895 389.9 Q898 406.2 907 413.2" fill="none" stroke="#555" stroke-width="0.8"/>
<path d="M925.9 390.2 L937 390.2 Q935 372.2 925 366.2 Q918 368.2 914 373.2" fill="none" stroke="#555" stroke-width="0.8"/>
<path d="M914 378.2 L908 412.2 M900.7 390.2 L913 399.2 M925.9 390.2 L914 382.2" fill="none" stroke="#555" stroke-width="0.8"/>
<circle cx="900.70" cy="390.20" r="5.90" fill="#000" stroke="none" stroke-width="0"/>
<circle cx="925.90" cy="390.20" r="5.90" fill="#000" stroke="none" stroke-width="0"/>
<text x="913" y="381.7" font-size="9.5" text-anchor="middle" fill="#3a3a3a" >CK1</text>
<path d="M900.7 415.3 L895 415.0 Q898 431.3 907 438.3" fill="none" stroke="#555" stroke-width="0.8"/>
<path d="M925.9 415.3 L937 415.3 Q935 397.3 925 391.3 Q918 393.3 914 398.3" fill="none" stroke="#555" stroke-width="0.8"/>
<path d="M914 403.3 L908 437.3 M900.7 415.3 L913 424.3 M925.9 415.3 L914 407.3" fill="none" stroke="#555" stroke-width="0.8"/>
<circle cx="900.70" cy="415.30" r="5.90" fill="#000" stroke="none" stroke-width="0"/>
<circle cx="925.90" cy="415.30" r="5.90" fill="#000" stroke="none" stroke-width="0"/>
<text x="913" y="406.8" font-size="9.5" text-anchor="middle" fill="#3a3a3a" >CK5</text>
<path d="M903.4 440 L896 432 Q884 434 883 444 Q886 452 896 453 L893 454 L913 453 M913 452 L905 458 Q915 456 920 462 Q922 470 912 474 L905 471" fill="none" stroke="#555" stroke-width="0.8"/>
<circle cx="903.40" cy="440.00" r="5.90" fill="#000" stroke="none" stroke-width="0"/>
<text x="907" y="431" font-size="9.5" text-anchor="middle" fill="#3a3a3a" >CK3</text>
<circle cx="903.40" cy="465.20" r="5.90" fill="#000" stroke="none" stroke-width="0"/>
<path d="M900.7 489.9 L895 489.59999999999997 Q898 505.9 907 512.9" fill="none" stroke="#555" stroke-width="0.8"/>
<path d="M925.9 489.9 L937 489.9 Q935 471.9 925 465.9 Q918 467.9 914 472.9" fill="none" stroke="#555" stroke-width="0.8"/>
<path d="M914 477.9 L908 511.9 M900.7 489.9 L913 498.9 M925.9 489.9 L914 481.9" fill="none" stroke="#555" stroke-width="0.8"/>
<circle cx="900.70" cy="489.90" r="5.90" fill="#000" stroke="none" stroke-width="0"/>
<circle cx="925.90" cy="489.90" r="5.90" fill="#000" stroke="none" stroke-width="0"/>
<text x="913" y="481.4" font-size="9.5" text-anchor="middle" fill="#3a3a3a" >CK2</text>
<path d="M900.7 514.5 L895 514.2 Q898 530.5 907 537.5" fill="none" stroke="#555" stroke-width="0.8"/>
<path d="M925.9 514.5 L937 514.5 Q935 496.5 925 490.5 Q918 492.5 914 497.5" fill="none" stroke="#555" stroke-width="0.8"/>
<path d="M914 502.5 L908 536.5 M900.7 514.5 L913 523.5 M925.9 514.5 L914 506.5" fill="none" stroke="#555" stroke-width="0.8"/>
<circle cx="900.70" cy="514.50" r="5.90" fill="#000" stroke="none" stroke-width="0"/>
<circle cx="925.90" cy="514.50" r="5.90" fill="#000" stroke="none" stroke-width="0"/>
<text x="913" y="506.0" font-size="9.5" text-anchor="middle" fill="#3a3a3a" >CK4</text>
<rect x="1012.50" y="389.00" width="24.80" height="97.00" fill="#fff" stroke="#666" stroke-width="0.9"/>
<circle cx="1005.70" cy="393.80" r="4.10" fill="#000" stroke="none" stroke-width="0"/>
<circle cx="1043.70" cy="393.80" r="4.10" fill="#000" stroke="none" stroke-width="0"/>
<circle cx="1005.70" cy="406.33" r="4.10" fill="#000" stroke="none" stroke-width="0"/>
<circle cx="1043.70" cy="406.33" r="4.10" fill="#000" stroke="none" stroke-width="0"/>
<circle cx="1005.70" cy="418.86" r="4.10" fill="#000" stroke="none" stroke-width="0"/>
<circle cx="1043.70" cy="418.86" r="4.10" fill="#000" stroke="none" stroke-width="0"/>
<circle cx="1005.70" cy="431.39" r="4.10" fill="#000" stroke="none" stroke-width="0"/>
<circle cx="1043.70" cy="431.39" r="4.10" fill="#000" stroke="none" stroke-width="0"/>
<circle cx="1005.70" cy="443.92" r="4.10" fill="#000" stroke="none" stroke-width="0"/>
<circle cx="1043.70" cy="443.92" r="4.10" fill="#000" stroke="none" stroke-width="0"/>
<circle cx="1005.70" cy="456.45" r="4.10" fill="#000" stroke="none" stroke-width="0"/>
<circle cx="1043.70" cy="456.45" r="4.10" fill="#000" stroke="none" stroke-width="0"/>
<circle cx="1005.70" cy="468.98" r="4.10" fill="#000" stroke="none" stroke-width="0"/>
<circle cx="1043.70" cy="468.98" r="4.10" fill="#000" stroke="none" stroke-width="0"/>
<circle cx="1005.70" cy="481.51" r="4.10" fill="#000" stroke="none" stroke-width="0"/>
<rect x="1039.60" y="477.41" width="8.20" height="8.20" fill="#000"/>
<rect x="1019.90" y="476.00" width="10.00" height="10.00" fill="#fff" stroke="#666" stroke-width="0.8"/>
<text x="1024.9" y="441.0" font-size="9.5" text-anchor="middle" fill="#2e2e2e" >U9</text>
<rect x="938.70" y="463.60" width="12.30" height="3.80" fill="#fff" stroke="#666" stroke-width="0.8"/>
<rect x="939.20" y="464.10" width="1.60" height="2.80" fill="#000"/>
<rect x="984.60" y="463.60" width="12.40" height="3.80" fill="#fff" stroke="#666" stroke-width="0.8"/>
<rect x="985.40" y="464.10" width="1.60" height="2.80" fill="#000"/>
<rect x="938.70" y="469.87" width="12.30" height="3.80" fill="#fff" stroke="#666" stroke-width="0.8"/>
<rect x="939.20" y="470.37" width="1.60" height="2.80" fill="#000"/>
<rect x="984.60" y="469.87" width="12.40" height="3.80" fill="#fff" stroke="#666" stroke-width="0.8"/>
<rect x="985.40" y="470.37" width="1.60" height="2.80" fill="#000"/>
<rect x="938.70" y="476.14" width="12.30" height="3.80" fill="#fff" stroke="#666" stroke-width="0.8"/>
<rect x="939.20" y="476.64" width="1.60" height="2.80" fill="#000"/>
<rect x="984.60" y="476.14" width="12.40" height="3.80" fill="#fff" stroke="#666" stroke-width="0.8"/>
<rect x="985.40" y="476.64" width="1.60" height="2.80" fill="#000"/>
<rect x="938.70" y="482.41" width="12.30" height="3.80" fill="#fff" stroke="#666" stroke-width="0.8"/>
<rect x="939.20" y="482.91" width="1.60" height="2.80" fill="#000"/>
<rect x="984.60" y="482.41" width="12.40" height="3.80" fill="#fff" stroke="#666" stroke-width="0.8"/>
<rect x="985.40" y="482.91" width="1.60" height="2.80" fill="#000"/>
<rect x="938.70" y="488.68" width="12.30" height="3.80" fill="#fff" stroke="#666" stroke-width="0.8"/>
<rect x="939.20" y="489.18" width="1.60" height="2.80" fill="#000"/>
<rect x="984.60" y="488.68" width="12.40" height="3.80" fill="#fff" stroke="#666" stroke-width="0.8"/>
<rect x="985.40" y="489.18" width="1.60" height="2.80" fill="#000"/>
<rect x="938.70" y="494.95" width="12.30" height="3.80" fill="#fff" stroke="#666" stroke-width="0.8"/>
<rect x="939.20" y="495.45" width="1.60" height="2.80" fill="#000"/>
<rect x="984.60" y="494.95" width="12.40" height="3.80" fill="#fff" stroke="#666" stroke-width="0.8"/>
<rect x="985.40" y="495.45" width="1.60" height="2.80" fill="#000"/>
<rect x="938.70" y="501.22" width="12.30" height="3.80" fill="#fff" stroke="#666" stroke-width="0.8"/>
<rect x="939.20" y="501.72" width="1.60" height="2.80" fill="#000"/>
<rect x="984.60" y="501.22" width="12.40" height="3.80" fill="#fff" stroke="#666" stroke-width="0.8"/>
<rect x="985.40" y="501.72" width="1.60" height="2.80" fill="#000"/>
<rect x="938.70" y="507.49" width="12.30" height="3.80" fill="#fff" stroke="#666" stroke-width="0.8"/>
<rect x="939.20" y="507.99" width="1.60" height="2.80" fill="#000"/>
<rect x="984.60" y="507.49" width="12.40" height="3.80" fill="#fff" stroke="#666" stroke-width="0.8"/>
<rect x="985.40" y="507.99" width="1.60" height="2.80" fill="#000"/>
<rect x="951.00" y="462.50" width="33.60" height="49.10" fill="#fff" stroke="#555" stroke-width="0.9"/>
<circle cx="981.60" cy="508.60" r="1.30" fill="#fff" stroke="#666" stroke-width="0.6"/>
<text x="967.8" y="490.55" font-size="9.5" text-anchor="middle" fill="#2e2e2e" >U10</text>
<rect x="1055.30" y="361.10" width="12.40" height="3.80" fill="#fff" stroke="#666" stroke-width="0.8"/>
<rect x="1055.80" y="361.60" width="1.60" height="2.80" fill="#000"/>
<rect x="1101.50" y="361.10" width="12.10" height="3.80" fill="#fff" stroke="#666" stroke-width="0.8"/>
<rect x="1102.30" y="361.60" width="1.60" height="2.80" fill="#000"/>
<rect x="1055.30" y="367.35" width="12.40" height="3.80" fill="#fff" stroke="#666" stroke-width="0.8"/>
<rect x="1055.80" y="367.85" width="1.60" height="2.80" fill="#000"/>
<rect x="1101.50" y="367.35" width="12.10" height="3.80" fill="#fff" stroke="#666" stroke-width="0.8"/>
<rect x="1102.30" y="367.85" width="1.60" height="2.80" fill="#000"/>
<rect x="1055.30" y="373.60" width="12.40" height="3.80" fill="#fff" stroke="#666" stroke-width="0.8"/>
<rect x="1055.80" y="374.10" width="1.60" height="2.80" fill="#000"/>
<rect x="1101.50" y="373.60" width="12.10" height="3.80" fill="#fff" stroke="#666" stroke-width="0.8"/>
<rect x="1102.30" y="374.10" width="1.60" height="2.80" fill="#000"/>
<rect x="1055.30" y="379.85" width="12.40" height="3.80" fill="#fff" stroke="#666" stroke-width="0.8"/>
<rect x="1055.80" y="380.35" width="1.60" height="2.80" fill="#000"/>
<rect x="1101.50" y="379.85" width="12.10" height="3.80" fill="#fff" stroke="#666" stroke-width="0.8"/>
<rect x="1102.30" y="380.35" width="1.60" height="2.80" fill="#000"/>
<rect x="1055.30" y="386.10" width="12.40" height="3.80" fill="#fff" stroke="#666" stroke-width="0.8"/>
<rect x="1055.80" y="386.60" width="1.60" height="2.80" fill="#000"/>
<rect x="1101.50" y="386.10" width="12.10" height="3.80" fill="#fff" stroke="#666" stroke-width="0.8"/>
<rect x="1102.30" y="386.60" width="1.60" height="2.80" fill="#000"/>
<rect x="1055.30" y="392.35" width="12.40" height="3.80" fill="#fff" stroke="#666" stroke-width="0.8"/>
<rect x="1055.80" y="392.85" width="1.60" height="2.80" fill="#000"/>
<rect x="1101.50" y="392.35" width="12.10" height="3.80" fill="#fff" stroke="#666" stroke-width="0.8"/>
<rect x="1102.30" y="392.85" width="1.60" height="2.80" fill="#000"/>
<rect x="1055.30" y="398.60" width="12.40" height="3.80" fill="#fff" stroke="#666" stroke-width="0.8"/>
<rect x="1055.80" y="399.10" width="1.60" height="2.80" fill="#000"/>
<rect x="1101.50" y="398.60" width="12.10" height="3.80" fill="#fff" stroke="#666" stroke-width="0.8"/>
<rect x="1102.30" y="399.10" width="1.60" height="2.80" fill="#000"/>
<rect x="1055.30" y="404.85" width="12.40" height="3.80" fill="#fff" stroke="#666" stroke-width="0.8"/>
<rect x="1055.80" y="405.35" width="1.60" height="2.80" fill="#000"/>
<rect x="1101.50" y="404.85" width="12.10" height="3.80" fill="#fff" stroke="#666" stroke-width="0.8"/>
<rect x="1102.30" y="405.35" width="1.60" height="2.80" fill="#000"/>
<rect x="1067.70" y="360.20" width="33.80" height="49.40" fill="#fff" stroke="#555" stroke-width="0.9"/>
<circle cx="1098.50" cy="406.60" r="1.30" fill="#fff" stroke="#666" stroke-width="0.6"/>
<text x="1084.6" y="388.4" font-size="9.5" text-anchor="middle" fill="#2e2e2e" >U13</text>
<rect x="1055.30" y="435.70" width="12.40" height="3.80" fill="#fff" stroke="#666" stroke-width="0.8"/>
<rect x="1055.80" y="436.20" width="1.60" height="2.80" fill="#000"/>
<rect x="1101.50" y="435.70" width="12.10" height="3.80" fill="#fff" stroke="#666" stroke-width="0.8"/>
<rect x="1102.30" y="436.20" width="1.60" height="2.80" fill="#000"/>
<rect x="1055.30" y="441.95" width="12.40" height="3.80" fill="#fff" stroke="#666" stroke-width="0.8"/>
<rect x="1055.80" y="442.45" width="1.60" height="2.80" fill="#000"/>
<rect x="1101.50" y="441.95" width="12.10" height="3.80" fill="#fff" stroke="#666" stroke-width="0.8"/>
<rect x="1102.30" y="442.45" width="1.60" height="2.80" fill="#000"/>
<rect x="1055.30" y="448.20" width="12.40" height="3.80" fill="#fff" stroke="#666" stroke-width="0.8"/>
<rect x="1055.80" y="448.70" width="1.60" height="2.80" fill="#000"/>
<rect x="1101.50" y="448.20" width="12.10" height="3.80" fill="#fff" stroke="#666" stroke-width="0.8"/>
<rect x="1102.30" y="448.70" width="1.60" height="2.80" fill="#000"/>
<rect x="1055.30" y="454.45" width="12.40" height="3.80" fill="#fff" stroke="#666" stroke-width="0.8"/>
<rect x="1055.80" y="454.95" width="1.60" height="2.80" fill="#000"/>
<rect x="1101.50" y="454.45" width="12.10" height="3.80" fill="#fff" stroke="#666" stroke-width="0.8"/>
<rect x="1102.30" y="454.95" width="1.60" height="2.80" fill="#000"/>
<rect x="1055.30" y="460.70" width="12.40" height="3.80" fill="#fff" stroke="#666" stroke-width="0.8"/>
<rect x="1055.80" y="461.20" width="1.60" height="2.80" fill="#000"/>
<rect x="1101.50" y="460.70" width="12.10" height="3.80" fill="#fff" stroke="#666" stroke-width="0.8"/>
<rect x="1102.30" y="461.20" width="1.60" height="2.80" fill="#000"/>
<rect x="1055.30" y="466.95" width="12.40" height="3.80" fill="#fff" stroke="#666" stroke-width="0.8"/>
<rect x="1055.80" y="467.45" width="1.60" height="2.80" fill="#000"/>
<rect x="1101.50" y="466.95" width="12.10" height="3.80" fill="#fff" stroke="#666" stroke-width="0.8"/>
<rect x="1102.30" y="467.45" width="1.60" height="2.80" fill="#000"/>
<rect x="1055.30" y="473.20" width="12.40" height="3.80" fill="#fff" stroke="#666" stroke-width="0.8"/>
<rect x="1055.80" y="473.70" width="1.60" height="2.80" fill="#000"/>
<rect x="1101.50" y="473.20" width="12.10" height="3.80" fill="#fff" stroke="#666" stroke-width="0.8"/>
<rect x="1102.30" y="473.70" width="1.60" height="2.80" fill="#000"/>
<rect x="1055.30" y="479.45" width="12.40" height="3.80" fill="#fff" stroke="#666" stroke-width="0.8"/>
<rect x="1055.80" y="479.95" width="1.60" height="2.80" fill="#000"/>
<rect x="1101.50" y="479.45" width="12.10" height="3.80" fill="#fff" stroke="#666" stroke-width="0.8"/>
<rect x="1102.30" y="479.95" width="1.60" height="2.80" fill="#000"/>
<rect x="1067.70" y="434.80" width="33.80" height="49.40" fill="#fff" stroke="#555" stroke-width="0.9"/>
<circle cx="1098.50" cy="481.20" r="1.30" fill="#fff" stroke="#666" stroke-width="0.6"/>
<text x="1084.6" y="463.0" font-size="9.5" text-anchor="middle" fill="#2e2e2e" >U12</text>
<rect x="1119.60" y="356.80" width="96.90" height="24.80" fill="#fff" stroke="#666" stroke-width="0.9"/>
<rect x="1206.30" y="364.80" width="10.20" height="8.80" fill="#fff" stroke="#666" stroke-width="0.8"/>
<circle cx="1123.70" cy="350.30" r="4.20" fill="#000" stroke="none" stroke-width="0"/>
<circle cx="1123.70" cy="388.50" r="4.20" fill="#000" stroke="none" stroke-width="0"/>
<circle cx="1136.31" cy="350.30" r="4.20" fill="#000" stroke="none" stroke-width="0"/>
<circle cx="1136.31" cy="388.50" r="4.20" fill="#000" stroke="none" stroke-width="0"/>
<circle cx="1148.92" cy="350.30" r="4.20" fill="#000" stroke="none" stroke-width="0"/>
<circle cx="1148.92" cy="388.50" r="4.20" fill="#000" stroke="none" stroke-width="0"/>
<circle cx="1161.53" cy="350.30" r="4.20" fill="#000" stroke="none" stroke-width="0"/>
<circle cx="1161.53" cy="388.50" r="4.20" fill="#000" stroke="none" stroke-width="0"/>
<circle cx="1174.14" cy="350.30" r="4.20" fill="#000" stroke="none" stroke-width="0"/>
<circle cx="1174.14" cy="388.50" r="4.20" fill="#000" stroke="none" stroke-width="0"/>
<circle cx="1186.75" cy="350.30" r="4.20" fill="#000" stroke="none" stroke-width="0"/>
<circle cx="1186.75" cy="388.50" r="4.20" fill="#000" stroke="none" stroke-width="0"/>
<circle cx="1199.36" cy="350.30" r="4.20" fill="#000" stroke="none" stroke-width="0"/>
<circle cx="1199.36" cy="388.50" r="4.20" fill="#000" stroke="none" stroke-width="0"/>
<rect x="1207.77" y="346.10" width="8.40" height="8.40" fill="#000"/>
<circle cx="1211.97" cy="388.50" r="4.20" fill="#000" stroke="none" stroke-width="0"/>
<text x="1168" y="372.5" font-size="9.5" text-anchor="middle" fill="#2e2e2e" >U7</text>
<line x1="1123.70" y1="424.50" x2="1123.70" y2="487.00" stroke="#555" stroke-width="0.9"/>
<rect x="1116.50" y="440.40" width="14.40" height="30.60" fill="#fff" stroke="#666" stroke-width="0.9"/>
<circle cx="1123.70" cy="424.50" r="6.10" fill="#000" stroke="none" stroke-width="0"/>
<circle cx="1123.70" cy="487.00" r="6.10" fill="#000" stroke="none" stroke-width="0"/>
<text x="1123.7" y="415" font-size="9.5" text-anchor="middle" fill="#2e2e2e" >R6</text>
<line x1="1148.53" y1="424.50" x2="1148.53" y2="487.00" stroke="#555" stroke-width="0.9"/>
<rect x="1141.33" y="440.40" width="14.40" height="30.60" fill="#fff" stroke="#666" stroke-width="0.9"/>
<circle cx="1148.53" cy="424.50" r="6.10" fill="#000" stroke="none" stroke-width="0"/>
<circle cx="1148.53" cy="487.00" r="6.10" fill="#000" stroke="none" stroke-width="0"/>
<text x="1148.53" y="415" font-size="9.5" text-anchor="middle" fill="#2e2e2e" >R7</text>
<line x1="1173.36" y1="424.50" x2="1173.36" y2="487.00" stroke="#555" stroke-width="0.9"/>
<rect x="1166.16" y="440.40" width="14.40" height="30.60" fill="#fff" stroke="#666" stroke-width="0.9"/>
<circle cx="1173.36" cy="424.50" r="6.10" fill="#000" stroke="none" stroke-width="0"/>
<circle cx="1173.36" cy="487.00" r="6.10" fill="#000" stroke="none" stroke-width="0"/>
<text x="1173.3600000000001" y="415" font-size="9.5" text-anchor="middle" fill="#2e2e2e" >R8</text>
<line x1="1198.19" y1="424.50" x2="1198.19" y2="487.00" stroke="#555" stroke-width="0.9"/>
<rect x="1190.99" y="440.40" width="14.40" height="30.60" fill="#fff" stroke="#666" stroke-width="0.9"/>
<circle cx="1198.19" cy="424.50" r="6.10" fill="#000" stroke="none" stroke-width="0"/>
<circle cx="1198.19" cy="487.00" r="6.10" fill="#000" stroke="none" stroke-width="0"/>
<text x="1198.19" y="415" font-size="9.5" text-anchor="middle" fill="#2e2e2e" >R9</text>
<line x1="1223.02" y1="424.50" x2="1223.02" y2="487.00" stroke="#555" stroke-width="0.9"/>
<rect x="1215.82" y="440.40" width="14.40" height="30.60" fill="#fff" stroke="#666" stroke-width="0.9"/>
<circle cx="1223.02" cy="424.50" r="6.10" fill="#000" stroke="none" stroke-width="0"/>
<circle cx="1223.02" cy="487.00" r="6.10" fill="#000" stroke="none" stroke-width="0"/>
<text x="1223.02" y="415" font-size="9.5" text-anchor="middle" fill="#2e2e2e" >R10</text>
<text x="1162" y="505.5" font-size="7.5" text-anchor="middle" fill="#444" >U5-LF2</text>
<circle cx="1180.00" cy="502.00" r="4.40" fill="#fff" stroke="#333" stroke-width="0.9"/>
<circle cx="1180.00" cy="502.00" r="2.90" fill="#000" stroke="none" stroke-width="0"/>
<line x1="1246.40" y1="355.20" x2="1321.90" y2="355.20" stroke="#555" stroke-width="0.9"/>
<rect x="1265.00" y="348.05" width="38.60" height="14.30" fill="#fff" stroke="#666" stroke-width="0.9"/>
<circle cx="1246.40" cy="355.20" r="6.20" fill="#000" stroke="none" stroke-width="0"/>
<circle cx="1321.90" cy="355.20" r="6.20" fill="#000" stroke="none" stroke-width="0"/>
<text x="1284" y="346" font-size="9.5" text-anchor="middle" fill="#2e2e2e" >R5</text>
<circle cx="1342.00" cy="366.30" r="4.40" fill="#fff" stroke="#333" stroke-width="0.9"/>
<circle cx="1342.00" cy="366.30" r="2.90" fill="#000" stroke="none" stroke-width="0"/>
<text x="1342" y="360" font-size="5" text-anchor="middle" fill="#8a8a8a" >FID2</text>
<line x1="1347.00" y1="393.40" x2="1347.00" y2="468.30" stroke="#555" stroke-width="0.9"/>
<rect x="1339.35" y="412.00" width="15.30" height="37.20" fill="#fff" stroke="#666" stroke-width="0.9"/>
<circle cx="1347.00" cy="393.40" r="6.20" fill="#000" stroke="none" stroke-width="0"/>
<circle cx="1347.00" cy="468.30" r="6.20" fill="#000" stroke="none" stroke-width="0"/>
<text x="1347" y="384" font-size="9.5" text-anchor="middle" fill="#2e2e2e" >R4</text>
<rect x="1261.00" y="396.10" width="52.90" height="52.80" fill="#fff" stroke="#555" stroke-width="0.9"/>
<rect x="1267.00" y="386.80" width="1.70" height="9.30" fill="#000"/>
<rect x="1267.00" y="449.00" width="1.70" height="9.60" fill="#000"/>
<rect x="1251.00" y="402.70" width="10.00" height="1.70" fill="#000"/>
<rect x="1313.90" y="402.70" width="9.50" height="1.70" fill="#000"/>
<rect x="1270.58" y="386.80" width="1.70" height="9.30" fill="#000"/>
<rect x="1270.58" y="449.00" width="1.70" height="9.60" fill="#000"/>
<rect x="1251.00" y="406.19" width="10.00" height="1.70" fill="#000"/>
<rect x="1313.90" y="406.19" width="9.50" height="1.70" fill="#000"/>
<rect x="1274.16" y="386.80" width="1.70" height="9.30" fill="#000"/>
<rect x="1274.16" y="449.00" width="1.70" height="9.60" fill="#000"/>
<rect x="1251.00" y="409.68" width="10.00" height="1.70" fill="#000"/>
<rect x="1313.90" y="409.68" width="9.50" height="1.70" fill="#000"/>
<rect x="1277.75" y="386.80" width="1.70" height="9.30" fill="#000"/>
<rect x="1277.75" y="449.00" width="1.70" height="9.60" fill="#000"/>
<rect x="1251.00" y="413.17" width="10.00" height="1.70" fill="#000"/>
<rect x="1313.90" y="413.17" width="9.50" height="1.70" fill="#000"/>
<rect x="1281.33" y="386.80" width="1.70" height="9.30" fill="#000"/>
<rect x="1281.33" y="449.00" width="1.70" height="9.60" fill="#000"/>
<rect x="1251.00" y="416.66" width="10.00" height="1.70" fill="#000"/>
<rect x="1313.90" y="416.66" width="9.50" height="1.70" fill="#000"/>
<rect x="1284.91" y="386.80" width="1.70" height="9.30" fill="#000"/>
<rect x="1284.91" y="449.00" width="1.70" height="9.60" fill="#000"/>
<rect x="1251.00" y="420.15" width="10.00" height="1.70" fill="#000"/>
<rect x="1313.90" y="420.15" width="9.50" height="1.70" fill="#000"/>
<rect x="1288.49" y="386.80" width="1.70" height="9.30" fill="#000"/>
<rect x="1288.49" y="449.00" width="1.70" height="9.60" fill="#000"/>
<rect x="1251.00" y="423.65" width="10.00" height="1.70" fill="#000"/>
<rect x="1313.90" y="423.65" width="9.50" height="1.70" fill="#000"/>
<rect x="1292.07" y="386.80" width="1.70" height="9.30" fill="#000"/>
<rect x="1292.07" y="449.00" width="1.70" height="9.60" fill="#000"/>
<rect x="1251.00" y="427.14" width="10.00" height="1.70" fill="#000"/>
<rect x="1313.90" y="427.14" width="9.50" height="1.70" fill="#000"/>
<rect x="1295.65" y="386.80" width="1.70" height="9.30" fill="#000"/>
<rect x="1295.65" y="449.00" width="1.70" height="9.60" fill="#000"/>
<rect x="1251.00" y="430.63" width="10.00" height="1.70" fill="#000"/>
<rect x="1313.90" y="430.63" width="9.50" height="1.70" fill="#000"/>
<rect x="1299.24" y="386.80" width="1.70" height="9.30" fill="#000"/>
<rect x="1299.24" y="449.00" width="1.70" height="9.60" fill="#000"/>
<rect x="1251.00" y="434.12" width="10.00" height="1.70" fill="#000"/>
<rect x="1313.90" y="434.12" width="9.50" height="1.70" fill="#000"/>
<rect x="1302.82" y="386.80" width="1.70" height="9.30" fill="#000"/>
<rect x="1302.82" y="449.00" width="1.70" height="9.60" fill="#000"/>
<rect x="1251.00" y="437.61" width="10.00" height="1.70" fill="#000"/>
<rect x="1313.90" y="437.61" width="9.50" height="1.70" fill="#000"/>
<rect x="1306.40" y="386.80" width="1.70" height="9.30" fill="#000"/>
<rect x="1306.40" y="449.00" width="1.70" height="9.60" fill="#000"/>
<rect x="1251.00" y="441.10" width="10.00" height="1.70" fill="#000"/>
<rect x="1313.90" y="441.10" width="9.50" height="1.70" fill="#000"/>
<text x="1287" y="425.5" font-size="9.5" text-anchor="middle" fill="#2e2e2e" >U2</text>
<circle cx="1268.00" cy="443.00" r="1.40" fill="#fff" stroke="#666" stroke-width="0.6"/>
<circle cx="1282.50" cy="476.30" r="6.00" fill="#000" stroke="none" stroke-width="0"/>
<line x1="1282.50" y1="476.30" x2="1282.50" y2="490.00" stroke="#5a5a5a" stroke-width="0.8"/>
<rect x="1275.30" y="487.50" width="14.40" height="25.80" fill="#fff" stroke="#666" stroke-width="0.9"/>
<line x1="1275.30" y1="491.00" x2="1289.70" y2="491.00" stroke="#666" stroke-width="0.8"/>
<line x1="1282.50" y1="513.30" x2="1282.50" y2="526.50" stroke="#5a5a5a" stroke-width="0.8"/>
<circle cx="1282.50" cy="526.50" r="6.00" fill="#000" stroke="none" stroke-width="0"/>
<circle cx="1302.50" cy="476.30" r="6.00" fill="#000" stroke="none" stroke-width="0"/>
<line x1="1302.50" y1="476.30" x2="1302.50" y2="490.00" stroke="#5a5a5a" stroke-width="0.8"/>
<rect x="1295.30" y="487.50" width="14.40" height="25.80" fill="#fff" stroke="#666" stroke-width="0.9"/>
<line x1="1295.30" y1="491.00" x2="1309.70" y2="491.00" stroke="#666" stroke-width="0.8"/>
<line x1="1302.50" y1="513.30" x2="1302.50" y2="526.50" stroke="#5a5a5a" stroke-width="0.8"/>
<circle cx="1302.50" cy="526.50" r="6.00" fill="#000" stroke="none" stroke-width="0"/>
<text x="1282.5" y="467.5" font-size="9.5" text-anchor="middle" fill="#2e2e2e" >CR4</text>
<text x="1302.5" y="467.5" font-size="9.5" text-anchor="middle" fill="#2e2e2e" >CR5</text>
<line x1="1302.50" y1="546.00" x2="1302.50" y2="596.00" stroke="#5a5a5a" stroke-width="0.8"/>
<rect x="1295.30" y="559.50" width="14.40" height="22.90" fill="#fff" stroke="#666" stroke-width="0.9"/>
<line x1="1295.30" y1="563.00" x2="1309.70" y2="563.00" stroke="#666" stroke-width="0.8"/>
<circle cx="1302.50" cy="545.90" r="6.00" fill="#000" stroke="none" stroke-width="0"/>
<circle cx="1302.50" cy="596.20" r="6.00" fill="#000" stroke="none" stroke-width="0"/>
<text x="1288" y="574.5" font-size="9.5" text-anchor="middle" fill="#2e2e2e" >CR3</text>
<line x1="1282.50" y1="616.30" x2="1282.50" y2="665.60" stroke="#5a5a5a" stroke-width="0.8"/>
<rect x="1275.30" y="630.00" width="14.40" height="22.80" fill="#fff" stroke="#666" stroke-width="0.9"/>
<line x1="1275.30" y1="633.50" x2="1289.70" y2="633.50" stroke="#666" stroke-width="0.8"/>
<circle cx="1282.50" cy="616.30" r="6.00" fill="#000" stroke="none" stroke-width="0"/>
<circle cx="1282.50" cy="665.60" r="6.00" fill="#000" stroke="none" stroke-width="0"/>
<line x1="1302.50" y1="616.30" x2="1302.50" y2="665.60" stroke="#5a5a5a" stroke-width="0.8"/>
<rect x="1295.30" y="630.00" width="14.40" height="22.80" fill="#fff" stroke="#666" stroke-width="0.9"/>
<line x1="1295.30" y1="633.50" x2="1309.70" y2="633.50" stroke="#666" stroke-width="0.8"/>
<circle cx="1302.50" cy="616.30" r="6.00" fill="#000" stroke="none" stroke-width="0"/>
<circle cx="1302.50" cy="665.60" r="6.00" fill="#000" stroke="none" stroke-width="0"/>
<text x="1282.5" y="607.5" font-size="9.5" text-anchor="middle" fill="#2e2e2e" >CR1</text>
<text x="1302.5" y="681.5" font-size="9.5" text-anchor="middle" fill="#2e2e2e" >CR2</text>
<rect x="1328.60" y="532.00" width="25.10" height="97.50" fill="#fff" stroke="#666" stroke-width="0.9"/>
<circle cx="1322.10" cy="536.80" r="4.00" fill="#000" stroke="none" stroke-width="0"/>
<circle cx="1360.20" cy="536.80" r="4.00" fill="#000" stroke="none" stroke-width="0"/>
<circle cx="1322.10" cy="549.43" r="4.00" fill="#000" stroke="none" stroke-width="0"/>
<circle cx="1360.20" cy="549.43" r="4.00" fill="#000" stroke="none" stroke-width="0"/>
<circle cx="1322.10" cy="562.06" r="4.00" fill="#000" stroke="none" stroke-width="0"/>
<circle cx="1360.20" cy="562.06" r="4.00" fill="#000" stroke="none" stroke-width="0"/>
<circle cx="1322.10" cy="574.69" r="4.00" fill="#000" stroke="none" stroke-width="0"/>
<circle cx="1360.20" cy="574.69" r="4.00" fill="#000" stroke="none" stroke-width="0"/>
<circle cx="1322.10" cy="587.32" r="4.00" fill="#000" stroke="none" stroke-width="0"/>
<circle cx="1360.20" cy="587.32" r="4.00" fill="#000" stroke="none" stroke-width="0"/>
<circle cx="1322.10" cy="599.95" r="4.00" fill="#000" stroke="none" stroke-width="0"/>
<circle cx="1360.20" cy="599.95" r="4.00" fill="#000" stroke="none" stroke-width="0"/>
<circle cx="1322.10" cy="612.58" r="4.00" fill="#000" stroke="none" stroke-width="0"/>
<circle cx="1360.20" cy="612.58" r="4.00" fill="#000" stroke="none" stroke-width="0"/>
<circle cx="1322.10" cy="625.21" r="4.00" fill="#000" stroke="none" stroke-width="0"/>
<rect x="1356.20" y="621.21" width="8.00" height="8.00" fill="#000"/>
<rect x="1336.15" y="619.50" width="10.00" height="10.00" fill="#fff" stroke="#666" stroke-width="0.8"/>
<text x="1341.15" y="584.25" font-size="9.5" text-anchor="middle" fill="#2e2e2e" >U6</text>
<rect x="1240.40" y="507.40" width="25.10" height="10.40" fill="#fff" stroke="#666" stroke-width="0.9"/>
<rect x="1241.70" y="508.40" width="8.60" height="8.40" fill="#000"/>
<rect x="1255.60" y="508.40" width="8.60" height="8.40" fill="#000"/>
<rect x="1240.40" y="522.24" width="25.10" height="10.40" fill="#fff" stroke="#666" stroke-width="0.9"/>
<rect x="1241.70" y="523.24" width="8.60" height="8.40" fill="#000"/>
<rect x="1255.60" y="523.24" width="8.60" height="8.40" fill="#000"/>
<rect x="1240.40" y="537.08" width="25.10" height="10.40" fill="#fff" stroke="#666" stroke-width="0.9"/>
<rect x="1241.70" y="538.08" width="8.60" height="8.40" fill="#000"/>
<rect x="1255.60" y="538.08" width="8.60" height="8.40" fill="#000"/>
<rect x="1240.40" y="551.92" width="25.10" height="10.40" fill="#fff" stroke="#666" stroke-width="0.9"/>
<rect x="1241.70" y="552.92" width="8.60" height="8.40" fill="#000"/>
<rect x="1255.60" y="552.92" width="8.60" height="8.40" fill="#000"/>
<rect x="1240.40" y="566.76" width="25.10" height="10.40" fill="#fff" stroke="#666" stroke-width="0.9"/>
<rect x="1241.70" y="567.76" width="8.60" height="8.40" fill="#000"/>
<rect x="1255.60" y="567.76" width="8.60" height="8.40" fill="#000"/>
<rect x="1240.40" y="581.60" width="25.10" height="10.40" fill="#fff" stroke="#666" stroke-width="0.9"/>
<rect x="1241.70" y="582.60" width="8.60" height="8.40" fill="#000"/>
<rect x="1255.60" y="582.60" width="8.60" height="8.40" fill="#000"/>
<rect x="1240.40" y="596.44" width="25.10" height="10.40" fill="#fff" stroke="#666" stroke-width="0.9"/>
<rect x="1241.70" y="597.44" width="8.60" height="8.40" fill="#000"/>
<rect x="1255.60" y="597.44" width="8.60" height="8.40" fill="#000"/>
<rect x="1240.40" y="611.28" width="25.10" height="10.40" fill="#fff" stroke="#666" stroke-width="0.9"/>
<rect x="1241.70" y="612.28" width="8.60" height="8.40" fill="#000"/>
<rect x="1255.60" y="612.28" width="8.60" height="8.40" fill="#000"/>
<rect x="1240.40" y="626.12" width="25.10" height="10.40" fill="#fff" stroke="#666" stroke-width="0.9"/>
<rect x="1241.70" y="627.12" width="8.60" height="8.40" fill="#000"/>
<rect x="1255.60" y="627.12" width="8.60" height="8.40" fill="#000"/>
<rect x="1240.40" y="640.96" width="25.10" height="10.40" fill="#fff" stroke="#666" stroke-width="0.9"/>
<rect x="1241.70" y="641.96" width="8.60" height="8.40" fill="#000"/>
<rect x="1255.60" y="641.96" width="8.60" height="8.40" fill="#000"/>
<text x="1252" y="504.5" font-size="9.5" text-anchor="middle" fill="#2e2e2e" >SMR40</text>
<text x="1277" y="544.5" font-size="9.5" text-anchor="middle" fill="#2e2e2e" >SMR33</text>
<text x="1277" y="559.5" font-size="9.5" text-anchor="middle" fill="#2e2e2e" >SMR34</text>
<text x="1252" y="660.5" font-size="9.5" text-anchor="middle" fill="#2e2e2e" >SMR39</text>
<rect x="1042.40" y="512.90" width="127.30" height="127.50" fill="#fff" stroke="#666" stroke-width="0.9"/>
<circle cx="1046.75" cy="516.75" r="1.65" fill="#000" stroke="none" stroke-width="0"/>
<circle cx="1053.06" cy="516.75" r="1.65" fill="#000" stroke="none" stroke-width="0"/>
<circle cx="1059.37" cy="516.75" r="1.65" fill="#000" stroke="none" stroke-width="0"/>
<circle cx="1065.68" cy="516.75" r="1.65" fill="#000" stroke="none" stroke-width="0"/>
<circle cx="1071.99" cy="516.75" r="1.65" fill="#000" stroke="none" stroke-width="0"/>
<circle cx="1078.30" cy="516.75" r="1.65" fill="#000" stroke="none" stroke-width="0"/>
<circle cx="1084.61" cy="516.75" r="1.65" fill="#000" stroke="none" stroke-width="0"/>
<circle cx="1090.92" cy="516.75" r="1.65" fill="#000" stroke="none" stroke-width="0"/>
<circle cx="1097.23" cy="516.75" r="1.65" fill="#000" stroke="none" stroke-width="0"/>
<circle cx="1103.54" cy="516.75" r="1.65" fill="#000" stroke="none" stroke-width="0"/>
<circle cx="1109.85" cy="516.75" r="1.65" fill="#000" stroke="none" stroke-width="0"/>
<circle cx="1116.16" cy="516.75" r="1.65" fill="#000" stroke="none" stroke-width="0"/>
<circle cx="1122.47" cy="516.75" r="1.65" fill="#000" stroke="none" stroke-width="0"/>
<circle cx="1128.78" cy="516.75" r="1.65" fill="#000" stroke="none" stroke-width="0"/>
<circle cx="1135.09" cy="516.75" r="1.65" fill="#000" stroke="none" stroke-width="0"/>
<circle cx="1141.40" cy="516.75" r="1.65" fill="#000" stroke="none" stroke-width="0"/>
<circle cx="1147.71" cy="516.75" r="1.65" fill="#000" stroke="none" stroke-width="0"/>
<circle cx="1154.02" cy="516.75" r="1.65" fill="#000" stroke="none" stroke-width="0"/>
<circle cx="1160.33" cy="516.75" r="1.65" fill="#000" stroke="none" stroke-width="0"/>
<circle cx="1166.64" cy="516.75" r="1.65" fill="#000" stroke="none" stroke-width="0"/>
<circle cx="1046.75" cy="523.04" r="1.65" fill="#000" stroke="none" stroke-width="0"/>
<circle cx="1053.06" cy="523.04" r="1.65" fill="#000" stroke="none" stroke-width="0"/>
<circle cx="1059.37" cy="523.04" r="1.65" fill="#000" stroke="none" stroke-width="0"/>
<circle cx="1065.68" cy="523.04" r="1.65" fill="#000" stroke="none" stroke-width="0"/>
<circle cx="1071.99" cy="523.04" r="1.65" fill="#000" stroke="none" stroke-width="0"/>
<circle cx="1078.30" cy="523.04" r="1.65" fill="#000" stroke="none" stroke-width="0"/>
<circle cx="1084.61" cy="523.04" r="1.65" fill="#000" stroke="none" stroke-width="0"/>
<circle cx="1090.92" cy="523.04" r="1.65" fill="#000" stroke="none" stroke-width="0"/>
<circle cx="1097.23" cy="523.04" r="1.65" fill="#000" stroke="none" stroke-width="0"/>
<circle cx="1103.54" cy="523.04" r="1.65" fill="#000" stroke="none" stroke-width="0"/>
<circle cx="1109.85" cy="523.04" r="1.65" fill="#000" stroke="none" stroke-width="0"/>
<circle cx="1116.16" cy="523.04" r="1.65" fill="#000" stroke="none" stroke-width="0"/>
<circle cx="1122.47" cy="523.04" r="1.65" fill="#000" stroke="none" stroke-width="0"/>
<circle cx="1128.78" cy="523.04" r="1.65" fill="#000" stroke="none" stroke-width="0"/>
<circle cx="1135.09" cy="523.04" r="1.65" fill="#000" stroke="none" stroke-width="0"/>
<circle cx="1141.40" cy="523.04" r="1.65" fill="#000" stroke="none" stroke-width="0"/>
<circle cx="1147.71" cy="523.04" r="1.65" fill="#000" stroke="none" stroke-width="0"/>
<circle cx="1154.02" cy="523.04" r="1.65" fill="#000" stroke="none" stroke-width="0"/>
<circle cx="1160.33" cy="523.04" r="1.65" fill="#000" stroke="none" stroke-width="0"/>
<circle cx="1166.64" cy="523.04" r="1.65" fill="#000" stroke="none" stroke-width="0"/>
<circle cx="1046.75" cy="529.33" r="1.65" fill="#000" stroke="none" stroke-width="0"/>
<circle cx="1053.06" cy="529.33" r="1.65" fill="#000" stroke="none" stroke-width="0"/>
<circle cx="1059.37" cy="529.33" r="1.65" fill="#000" stroke="none" stroke-width="0"/>
<circle cx="1065.68" cy="529.33" r="1.65" fill="#000" stroke="none" stroke-width="0"/>
<circle cx="1071.99" cy="529.33" r="1.65" fill="#000" stroke="none" stroke-width="0"/>
<circle cx="1078.30" cy="529.33" r="1.65" fill="#000" stroke="none" stroke-width="0"/>
<circle cx="1084.61" cy="529.33" r="1.65" fill="#000" stroke="none" stroke-width="0"/>
<circle cx="1090.92" cy="529.33" r="1.65" fill="#000" stroke="none" stroke-width="0"/>
<circle cx="1097.23" cy="529.33" r="1.65" fill="#000" stroke="none" stroke-width="0"/>
<circle cx="1103.54" cy="529.33" r="1.65" fill="#000" stroke="none" stroke-width="0"/>
<circle cx="1109.85" cy="529.33" r="1.65" fill="#000" stroke="none" stroke-width="0"/>
<circle cx="1116.16" cy="529.33" r="1.65" fill="#000" stroke="none" stroke-width="0"/>
<circle cx="1122.47" cy="529.33" r="1.65" fill="#000" stroke="none" stroke-width="0"/>
<circle cx="1128.78" cy="529.33" r="1.65" fill="#000" stroke="none" stroke-width="0"/>
<circle cx="1135.09" cy="529.33" r="1.65" fill="#000" stroke="none" stroke-width="0"/>
<circle cx="1141.40" cy="529.33" r="1.65" fill="#000" stroke="none" stroke-width="0"/>
<circle cx="1147.71" cy="529.33" r="1.65" fill="#000" stroke="none" stroke-width="0"/>
<circle cx="1154.02" cy="529.33" r="1.65" fill="#000" stroke="none" stroke-width="0"/>
<circle cx="1160.33" cy="529.33" r="1.65" fill="#000" stroke="none" stroke-width="0"/>
<circle cx="1166.64" cy="529.33" r="1.65" fill="#000" stroke="none" stroke-width="0"/>
<circle cx="1046.75" cy="535.62" r="1.65" fill="#000" stroke="none" stroke-width="0"/>
<circle cx="1053.06" cy="535.62" r="1.65" fill="#000" stroke="none" stroke-width="0"/>
<circle cx="1059.37" cy="535.62" r="1.65" fill="#000" stroke="none" stroke-width="0"/>
<circle cx="1065.68" cy="535.62" r="1.65" fill="#000" stroke="none" stroke-width="0"/>
<circle cx="1071.99" cy="535.62" r="1.65" fill="#000" stroke="none" stroke-width="0"/>
<circle cx="1078.30" cy="535.62" r="1.65" fill="#000" stroke="none" stroke-width="0"/>
<circle cx="1084.61" cy="535.62" r="1.65" fill="#000" stroke="none" stroke-width="0"/>
<circle cx="1090.92" cy="535.62" r="1.65" fill="#000" stroke="none" stroke-width="0"/>
<circle cx="1097.23" cy="535.62" r="1.65" fill="#000" stroke="none" stroke-width="0"/>
<circle cx="1103.54" cy="535.62" r="1.65" fill="#000" stroke="none" stroke-width="0"/>
<circle cx="1109.85" cy="535.62" r="1.65" fill="#000" stroke="none" stroke-width="0"/>
<circle cx="1116.16" cy="535.62" r="1.65" fill="#000" stroke="none" stroke-width="0"/>
<circle cx="1122.47" cy="535.62" r="1.65" fill="#000" stroke="none" stroke-width="0"/>
<circle cx="1128.78" cy="535.62" r="1.65" fill="#000" stroke="none" stroke-width="0"/>
<circle cx="1135.09" cy="535.62" r="1.65" fill="#000" stroke="none" stroke-width="0"/>
<circle cx="1141.40" cy="535.62" r="1.65" fill="#000" stroke="none" stroke-width="0"/>
<circle cx="1147.71" cy="535.62" r="1.65" fill="#000" stroke="none" stroke-width="0"/>
<circle cx="1154.02" cy="535.62" r="1.65" fill="#000" stroke="none" stroke-width="0"/>
<circle cx="1160.33" cy="535.62" r="1.65" fill="#000" stroke="none" stroke-width="0"/>
<circle cx="1166.64" cy="535.62" r="1.65" fill="#000" stroke="none" stroke-width="0"/>
<circle cx="1046.75" cy="541.91" r="1.65" fill="#000" stroke="none" stroke-width="0"/>
<circle cx="1053.06" cy="541.91" r="1.65" fill="#000" stroke="none" stroke-width="0"/>
<circle cx="1059.37" cy="541.91" r="1.65" fill="#000" stroke="none" stroke-width="0"/>
<circle cx="1065.68" cy="541.91" r="1.65" fill="#000" stroke="none" stroke-width="0"/>
<circle cx="1147.71" cy="541.91" r="1.65" fill="#000" stroke="none" stroke-width="0"/>
<circle cx="1154.02" cy="541.91" r="1.65" fill="#000" stroke="none" stroke-width="0"/>
<circle cx="1160.33" cy="541.91" r="1.65" fill="#000" stroke="none" stroke-width="0"/>
<circle cx="1166.64" cy="541.91" r="1.65" fill="#000" stroke="none" stroke-width="0"/>
<circle cx="1046.75" cy="548.20" r="1.65" fill="#000" stroke="none" stroke-width="0"/>
<circle cx="1053.06" cy="548.20" r="1.65" fill="#000" stroke="none" stroke-width="0"/>
<circle cx="1059.37" cy="548.20" r="1.65" fill="#000" stroke="none" stroke-width="0"/>
<circle cx="1065.68" cy="548.20" r="1.65" fill="#000" stroke="none" stroke-width="0"/>
<circle cx="1147.71" cy="548.20" r="1.65" fill="#000" stroke="none" stroke-width="0"/>
<circle cx="1154.02" cy="548.20" r="1.65" fill="#000" stroke="none" stroke-width="0"/>
<circle cx="1160.33" cy="548.20" r="1.65" fill="#000" stroke="none" stroke-width="0"/>
<circle cx="1166.64" cy="548.20" r="1.65" fill="#000" stroke="none" stroke-width="0"/>
<circle cx="1046.75" cy="554.49" r="1.65" fill="#000" stroke="none" stroke-width="0"/>
<circle cx="1053.06" cy="554.49" r="1.65" fill="#000" stroke="none" stroke-width="0"/>
<circle cx="1059.37" cy="554.49" r="1.65" fill="#000" stroke="none" stroke-width="0"/>
<circle cx="1065.68" cy="554.49" r="1.65" fill="#000" stroke="none" stroke-width="0"/>
<circle cx="1147.71" cy="554.49" r="1.65" fill="#000" stroke="none" stroke-width="0"/>
<circle cx="1154.02" cy="554.49" r="1.65" fill="#000" stroke="none" stroke-width="0"/>
<circle cx="1160.33" cy="554.49" r="1.65" fill="#000" stroke="none" stroke-width="0"/>
<circle cx="1166.64" cy="554.49" r="1.65" fill="#000" stroke="none" stroke-width="0"/>
<circle cx="1046.75" cy="560.78" r="1.65" fill="#000" stroke="none" stroke-width="0"/>
<circle cx="1053.06" cy="560.78" r="1.65" fill="#000" stroke="none" stroke-width="0"/>
<circle cx="1059.37" cy="560.78" r="1.65" fill="#000" stroke="none" stroke-width="0"/>
<circle cx="1065.68" cy="560.78" r="1.65" fill="#000" stroke="none" stroke-width="0"/>
<circle cx="1147.71" cy="560.78" r="1.65" fill="#000" stroke="none" stroke-width="0"/>
<circle cx="1154.02" cy="560.78" r="1.65" fill="#000" stroke="none" stroke-width="0"/>
<circle cx="1160.33" cy="560.78" r="1.65" fill="#000" stroke="none" stroke-width="0"/>
<circle cx="1166.64" cy="560.78" r="1.65" fill="#000" stroke="none" stroke-width="0"/>
<circle cx="1046.75" cy="567.07" r="1.65" fill="#000" stroke="none" stroke-width="0"/>
<circle cx="1053.06" cy="567.07" r="1.65" fill="#000" stroke="none" stroke-width="0"/>
<circle cx="1059.37" cy="567.07" r="1.65" fill="#000" stroke="none" stroke-width="0"/>
<circle cx="1065.68" cy="567.07" r="1.65" fill="#000" stroke="none" stroke-width="0"/>
<circle cx="1147.71" cy="567.07" r="1.65" fill="#000" stroke="none" stroke-width="0"/>
<circle cx="1154.02" cy="567.07" r="1.65" fill="#000" stroke="none" stroke-width="0"/>
<circle cx="1160.33" cy="567.07" r="1.65" fill="#000" stroke="none" stroke-width="0"/>
<circle cx="1166.64" cy="567.07" r="1.65" fill="#000" stroke="none" stroke-width="0"/>
<circle cx="1046.75" cy="573.36" r="1.65" fill="#000" stroke="none" stroke-width="0"/>
<circle cx="1053.06" cy="573.36" r="1.65" fill="#000" stroke="none" stroke-width="0"/>
<circle cx="1059.37" cy="573.36" r="1.65" fill="#000" stroke="none" stroke-width="0"/>
<circle cx="1065.68" cy="573.36" r="1.65" fill="#000" stroke="none" stroke-width="0"/>
<circle cx="1147.71" cy="573.36" r="1.65" fill="#000" stroke="none" stroke-width="0"/>
<circle cx="1154.02" cy="573.36" r="1.65" fill="#000" stroke="none" stroke-width="0"/>
<circle cx="1160.33" cy="573.36" r="1.65" fill="#000" stroke="none" stroke-width="0"/>
<circle cx="1166.64" cy="573.36" r="1.65" fill="#000" stroke="none" stroke-width="0"/>
<circle cx="1046.75" cy="579.65" r="1.65" fill="#000" stroke="none" stroke-width="0"/>
<circle cx="1053.06" cy="579.65" r="1.65" fill="#000" stroke="none" stroke-width="0"/>
<circle cx="1059.37" cy="579.65" r="1.65" fill="#000" stroke="none" stroke-width="0"/>
<circle cx="1065.68" cy="579.65" r="1.65" fill="#000" stroke="none" stroke-width="0"/>
<circle cx="1147.71" cy="579.65" r="1.65" fill="#000" stroke="none" stroke-width="0"/>
<circle cx="1154.02" cy="579.65" r="1.65" fill="#000" stroke="none" stroke-width="0"/>
<circle cx="1160.33" cy="579.65" r="1.65" fill="#000" stroke="none" stroke-width="0"/>
<circle cx="1166.64" cy="579.65" r="1.65" fill="#000" stroke="none" stroke-width="0"/>
<circle cx="1046.75" cy="585.94" r="1.65" fill="#000" stroke="none" stroke-width="0"/>
<circle cx="1053.06" cy="585.94" r="1.65" fill="#000" stroke="none" stroke-width="0"/>
<circle cx="1059.37" cy="585.94" r="1.65" fill="#000" stroke="none" stroke-width="0"/>
<circle cx="1065.68" cy="585.94" r="1.65" fill="#000" stroke="none" stroke-width="0"/>
<circle cx="1147.71" cy="585.94" r="1.65" fill="#000" stroke="none" stroke-width="0"/>
<circle cx="1154.02" cy="585.94" r="1.65" fill="#000" stroke="none" stroke-width="0"/>
<circle cx="1160.33" cy="585.94" r="1.65" fill="#000" stroke="none" stroke-width="0"/>
<circle cx="1166.64" cy="585.94" r="1.65" fill="#000" stroke="none" stroke-width="0"/>
<circle cx="1046.75" cy="592.23" r="1.65" fill="#000" stroke="none" stroke-width="0"/>
<circle cx="1053.06" cy="592.23" r="1.65" fill="#000" stroke="none" stroke-width="0"/>
<circle cx="1059.37" cy="592.23" r="1.65" fill="#000" stroke="none" stroke-width="0"/>
<circle cx="1065.68" cy="592.23" r="1.65" fill="#000" stroke="none" stroke-width="0"/>
<circle cx="1147.71" cy="592.23" r="1.65" fill="#000" stroke="none" stroke-width="0"/>
<circle cx="1154.02" cy="592.23" r="1.65" fill="#000" stroke="none" stroke-width="0"/>
<circle cx="1160.33" cy="592.23" r="1.65" fill="#000" stroke="none" stroke-width="0"/>
<circle cx="1166.64" cy="592.23" r="1.65" fill="#000" stroke="none" stroke-width="0"/>
<circle cx="1046.75" cy="598.52" r="1.65" fill="#000" stroke="none" stroke-width="0"/>
<circle cx="1053.06" cy="598.52" r="1.65" fill="#000" stroke="none" stroke-width="0"/>
<circle cx="1059.37" cy="598.52" r="1.65" fill="#000" stroke="none" stroke-width="0"/>
<circle cx="1065.68" cy="598.52" r="1.65" fill="#000" stroke="none" stroke-width="0"/>
<circle cx="1147.71" cy="598.52" r="1.65" fill="#000" stroke="none" stroke-width="0"/>
<circle cx="1154.02" cy="598.52" r="1.65" fill="#000" stroke="none" stroke-width="0"/>
<circle cx="1160.33" cy="598.52" r="1.65" fill="#000" stroke="none" stroke-width="0"/>
<circle cx="1166.64" cy="598.52" r="1.65" fill="#000" stroke="none" stroke-width="0"/>
<circle cx="1046.75" cy="604.81" r="1.65" fill="#000" stroke="none" stroke-width="0"/>
<circle cx="1053.06" cy="604.81" r="1.65" fill="#000" stroke="none" stroke-width="0"/>
<circle cx="1059.37" cy="604.81" r="1.65" fill="#000" stroke="none" stroke-width="0"/>
<circle cx="1065.68" cy="604.81" r="1.65" fill="#000" stroke="none" stroke-width="0"/>
<circle cx="1147.71" cy="604.81" r="1.65" fill="#000" stroke="none" stroke-width="0"/>
<circle cx="1154.02" cy="604.81" r="1.65" fill="#000" stroke="none" stroke-width="0"/>
<circle cx="1160.33" cy="604.81" r="1.65" fill="#000" stroke="none" stroke-width="0"/>
<circle cx="1166.64" cy="604.81" r="1.65" fill="#000" stroke="none" stroke-width="0"/>
<circle cx="1046.75" cy="611.10" r="1.65" fill="#000" stroke="none" stroke-width="0"/>
<circle cx="1053.06" cy="611.10" r="1.65" fill="#000" stroke="none" stroke-width="0"/>
<circle cx="1059.37" cy="611.10" r="1.65" fill="#000" stroke="none" stroke-width="0"/>
<circle cx="1065.68" cy="611.10" r="1.65" fill="#000" stroke="none" stroke-width="0"/>
<circle cx="1147.71" cy="611.10" r="1.65" fill="#000" stroke="none" stroke-width="0"/>
<circle cx="1154.02" cy="611.10" r="1.65" fill="#000" stroke="none" stroke-width="0"/>
<circle cx="1160.33" cy="611.10" r="1.65" fill="#000" stroke="none" stroke-width="0"/>
<circle cx="1166.64" cy="611.10" r="1.65" fill="#000" stroke="none" stroke-width="0"/>
<circle cx="1046.75" cy="617.39" r="1.65" fill="#000" stroke="none" stroke-width="0"/>
<circle cx="1053.06" cy="617.39" r="1.65" fill="#000" stroke="none" stroke-width="0"/>
<circle cx="1059.37" cy="617.39" r="1.65" fill="#000" stroke="none" stroke-width="0"/>
<circle cx="1065.68" cy="617.39" r="1.65" fill="#000" stroke="none" stroke-width="0"/>
<circle cx="1071.99" cy="617.39" r="1.65" fill="#000" stroke="none" stroke-width="0"/>
<circle cx="1078.30" cy="617.39" r="1.65" fill="#000" stroke="none" stroke-width="0"/>
<circle cx="1084.61" cy="617.39" r="1.65" fill="#000" stroke="none" stroke-width="0"/>
<circle cx="1090.92" cy="617.39" r="1.65" fill="#000" stroke="none" stroke-width="0"/>
<circle cx="1097.23" cy="617.39" r="1.65" fill="#000" stroke="none" stroke-width="0"/>
<circle cx="1103.54" cy="617.39" r="1.65" fill="#000" stroke="none" stroke-width="0"/>
<circle cx="1109.85" cy="617.39" r="1.65" fill="#000" stroke="none" stroke-width="0"/>
<circle cx="1116.16" cy="617.39" r="1.65" fill="#000" stroke="none" stroke-width="0"/>
<circle cx="1122.47" cy="617.39" r="1.65" fill="#000" stroke="none" stroke-width="0"/>
<circle cx="1128.78" cy="617.39" r="1.65" fill="#000" stroke="none" stroke-width="0"/>
<circle cx="1135.09" cy="617.39" r="1.65" fill="#000" stroke="none" stroke-width="0"/>
<circle cx="1141.40" cy="617.39" r="1.65" fill="#000" stroke="none" stroke-width="0"/>
<circle cx="1147.71" cy="617.39" r="1.65" fill="#000" stroke="none" stroke-width="0"/>
<circle cx="1154.02" cy="617.39" r="1.65" fill="#000" stroke="none" stroke-width="0"/>
<circle cx="1160.33" cy="617.39" r="1.65" fill="#000" stroke="none" stroke-width="0"/>
<circle cx="1166.64" cy="617.39" r="1.65" fill="#000" stroke="none" stroke-width="0"/>
<circle cx="1046.75" cy="623.68" r="1.65" fill="#000" stroke="none" stroke-width="0"/>
<circle cx="1053.06" cy="623.68" r="1.65" fill="#000" stroke="none" stroke-width="0"/>
<circle cx="1059.37" cy="623.68" r="1.65" fill="#000" stroke="none" stroke-width="0"/>
<circle cx="1065.68" cy="623.68" r="1.65" fill="#000" stroke="none" stroke-width="0"/>
<circle cx="1071.99" cy="623.68" r="1.65" fill="#000" stroke="none" stroke-width="0"/>
<circle cx="1078.30" cy="623.68" r="1.65" fill="#000" stroke="none" stroke-width="0"/>
<circle cx="1084.61" cy="623.68" r="1.65" fill="#000" stroke="none" stroke-width="0"/>
<circle cx="1090.92" cy="623.68" r="1.65" fill="#000" stroke="none" stroke-width="0"/>
<circle cx="1097.23" cy="623.68" r="1.65" fill="#000" stroke="none" stroke-width="0"/>
<circle cx="1103.54" cy="623.68" r="1.65" fill="#000" stroke="none" stroke-width="0"/>
<circle cx="1109.85" cy="623.68" r="1.65" fill="#000" stroke="none" stroke-width="0"/>
<circle cx="1116.16" cy="623.68" r="1.65" fill="#000" stroke="none" stroke-width="0"/>
<circle cx="1122.47" cy="623.68" r="1.65" fill="#000" stroke="none" stroke-width="0"/>
<circle cx="1128.78" cy="623.68" r="1.65" fill="#000" stroke="none" stroke-width="0"/>
<circle cx="1135.09" cy="623.68" r="1.65" fill="#000" stroke="none" stroke-width="0"/>
<circle cx="1141.40" cy="623.68" r="1.65" fill="#000" stroke="none" stroke-width="0"/>
<circle cx="1147.71" cy="623.68" r="1.65" fill="#000" stroke="none" stroke-width="0"/>
<circle cx="1154.02" cy="623.68" r="1.65" fill="#000" stroke="none" stroke-width="0"/>
<circle cx="1160.33" cy="623.68" r="1.65" fill="#000" stroke="none" stroke-width="0"/>
<circle cx="1166.64" cy="623.68" r="1.65" fill="#000" stroke="none" stroke-width="0"/>
<circle cx="1046.75" cy="629.97" r="1.65" fill="#000" stroke="none" stroke-width="0"/>
<circle cx="1053.06" cy="629.97" r="1.65" fill="#000" stroke="none" stroke-width="0"/>
<circle cx="1059.37" cy="629.97" r="1.65" fill="#000" stroke="none" stroke-width="0"/>
<circle cx="1065.68" cy="629.97" r="1.65" fill="#000" stroke="none" stroke-width="0"/>
<circle cx="1071.99" cy="629.97" r="1.65" fill="#000" stroke="none" stroke-width="0"/>
<circle cx="1078.30" cy="629.97" r="1.65" fill="#000" stroke="none" stroke-width="0"/>
<circle cx="1084.61" cy="629.97" r="1.65" fill="#000" stroke="none" stroke-width="0"/>
<circle cx="1090.92" cy="629.97" r="1.65" fill="#000" stroke="none" stroke-width="0"/>
<circle cx="1097.23" cy="629.97" r="1.65" fill="#000" stroke="none" stroke-width="0"/>
<circle cx="1103.54" cy="629.97" r="1.65" fill="#000" stroke="none" stroke-width="0"/>
<circle cx="1109.85" cy="629.97" r="1.65" fill="#000" stroke="none" stroke-width="0"/>
<circle cx="1116.16" cy="629.97" r="1.65" fill="#000" stroke="none" stroke-width="0"/>
<circle cx="1122.47" cy="629.97" r="1.65" fill="#000" stroke="none" stroke-width="0"/>
<circle cx="1128.78" cy="629.97" r="1.65" fill="#000" stroke="none" stroke-width="0"/>
<circle cx="1135.09" cy="629.97" r="1.65" fill="#000" stroke="none" stroke-width="0"/>
<circle cx="1141.40" cy="629.97" r="1.65" fill="#000" stroke="none" stroke-width="0"/>
<circle cx="1147.71" cy="629.97" r="1.65" fill="#000" stroke="none" stroke-width="0"/>
<circle cx="1154.02" cy="629.97" r="1.65" fill="#000" stroke="none" stroke-width="0"/>
<circle cx="1160.33" cy="629.97" r="1.65" fill="#000" stroke="none" stroke-width="0"/>
<circle cx="1166.64" cy="629.97" r="1.65" fill="#000" stroke="none" stroke-width="0"/>
<circle cx="1046.75" cy="636.26" r="1.65" fill="#000" stroke="none" stroke-width="0"/>
<circle cx="1053.06" cy="636.26" r="1.65" fill="#000" stroke="none" stroke-width="0"/>
<circle cx="1059.37" cy="636.26" r="1.65" fill="#000" stroke="none" stroke-width="0"/>
<circle cx="1065.68" cy="636.26" r="1.65" fill="#000" stroke="none" stroke-width="0"/>
<circle cx="1071.99" cy="636.26" r="1.65" fill="#000" stroke="none" stroke-width="0"/>
<circle cx="1078.30" cy="636.26" r="1.65" fill="#000" stroke="none" stroke-width="0"/>
<circle cx="1084.61" cy="636.26" r="1.65" fill="#000" stroke="none" stroke-width="0"/>
<circle cx="1090.92" cy="636.26" r="1.65" fill="#000" stroke="none" stroke-width="0"/>
<circle cx="1097.23" cy="636.26" r="1.65" fill="#000" stroke="none" stroke-width="0"/>
<circle cx="1103.54" cy="636.26" r="1.65" fill="#000" stroke="none" stroke-width="0"/>
<circle cx="1109.85" cy="636.26" r="1.65" fill="#000" stroke="none" stroke-width="0"/>
<circle cx="1116.16" cy="636.26" r="1.65" fill="#000" stroke="none" stroke-width="0"/>
<circle cx="1122.47" cy="636.26" r="1.65" fill="#000" stroke="none" stroke-width="0"/>
<circle cx="1128.78" cy="636.26" r="1.65" fill="#000" stroke="none" stroke-width="0"/>
<circle cx="1135.09" cy="636.26" r="1.65" fill="#000" stroke="none" stroke-width="0"/>
<circle cx="1141.40" cy="636.26" r="1.65" fill="#000" stroke="none" stroke-width="0"/>
<circle cx="1147.71" cy="636.26" r="1.65" fill="#000" stroke="none" stroke-width="0"/>
<circle cx="1154.02" cy="636.26" r="1.65" fill="#000" stroke="none" stroke-width="0"/>
<circle cx="1160.33" cy="636.26" r="1.65" fill="#000" stroke="none" stroke-width="0"/>
<circle cx="1166.64" cy="636.26" r="1.65" fill="#000" stroke="none" stroke-width="0"/>
<rect x="1094.30" y="564.30" width="25.40" height="24.00" fill="#fff" stroke="#666" stroke-width="0.8"/>
<rect x="1096.30" y="566.30" width="1.70" height="1.70" fill="#000"/>
<rect x="1100.20" y="566.30" width="1.70" height="1.70" fill="#000"/>
<rect x="1104.10" y="566.30" width="1.70" height="1.70" fill="#000"/>
<rect x="1108.00" y="566.30" width="1.70" height="1.70" fill="#000"/>
<rect x="1111.90" y="566.30" width="1.70" height="1.70" fill="#000"/>
<rect x="1115.80" y="566.30" width="1.70" height="1.70" fill="#000"/>
<rect x="1096.30" y="569.90" width="1.70" height="1.70" fill="#000"/>
<rect x="1100.20" y="569.90" width="1.70" height="1.70" fill="#000"/>
<rect x="1104.10" y="569.90" width="1.70" height="1.70" fill="#000"/>
<rect x="1108.00" y="569.90" width="1.70" height="1.70" fill="#000"/>
<rect x="1111.90" y="569.90" width="1.70" height="1.70" fill="#000"/>
<rect x="1115.80" y="569.90" width="1.70" height="1.70" fill="#000"/>
<rect x="1096.30" y="573.50" width="1.70" height="1.70" fill="#000"/>
<rect x="1100.20" y="573.50" width="1.70" height="1.70" fill="#000"/>
<rect x="1104.10" y="573.50" width="1.70" height="1.70" fill="#000"/>
<rect x="1108.00" y="573.50" width="1.70" height="1.70" fill="#000"/>
<rect x="1111.90" y="573.50" width="1.70" height="1.70" fill="#000"/>
<rect x="1115.80" y="573.50" width="1.70" height="1.70" fill="#000"/>
<rect x="1096.30" y="577.10" width="1.70" height="1.70" fill="#000"/>
<rect x="1100.20" y="577.10" width="1.70" height="1.70" fill="#000"/>
<rect x="1104.10" y="577.10" width="1.70" height="1.70" fill="#000"/>
<rect x="1108.00" y="577.10" width="1.70" height="1.70" fill="#000"/>
<rect x="1111.90" y="577.10" width="1.70" height="1.70" fill="#000"/>
<rect x="1115.80" y="577.10" width="1.70" height="1.70" fill="#000"/>
<rect x="1096.30" y="580.70" width="1.70" height="1.70" fill="#000"/>
<rect x="1100.20" y="580.70" width="1.70" height="1.70" fill="#000"/>
<rect x="1104.10" y="580.70" width="1.70" height="1.70" fill="#000"/>
<rect x="1108.00" y="580.70" width="1.70" height="1.70" fill="#000"/>
<rect x="1111.90" y="580.70" width="1.70" height="1.70" fill="#000"/>
<rect x="1115.80" y="580.70" width="1.70" height="1.70" fill="#000"/>
<rect x="1096.30" y="584.30" width="1.70" height="1.70" fill="#000"/>
<rect x="1100.20" y="584.30" width="1.70" height="1.70" fill="#000"/>
<rect x="1104.10" y="584.30" width="1.70" height="1.70" fill="#000"/>
<rect x="1108.00" y="584.30" width="1.70" height="1.70" fill="#000"/>
<rect x="1111.90" y="584.30" width="1.70" height="1.70" fill="#000"/>
<rect x="1115.80" y="584.30" width="1.70" height="1.70" fill="#000"/>
<text x="1107" y="579.5" font-size="7.5" text-anchor="middle" fill="#333" >U5A</text>
<rect x="1194.30" y="514.60" width="7.00" height="16.70" fill="#fff" stroke="#666" stroke-width="0.9"/>
<rect x="1195.70" y="516.20" width="4.20" height="5.00" fill="#000"/>
<rect x="1195.70" y="524.70" width="4.20" height="5.00" fill="#000"/>
<rect x="1194.30" y="533.50" width="7.00" height="16.70" fill="#fff" stroke="#666" stroke-width="0.9"/>
<rect x="1195.70" y="535.10" width="4.20" height="5.00" fill="#000"/>
<rect x="1195.70" y="543.60" width="4.20" height="5.00" fill="#000"/>
<rect x="1194.30" y="552.40" width="7.00" height="16.70" fill="#fff" stroke="#666" stroke-width="0.9"/>
<rect x="1195.70" y="554.00" width="4.20" height="5.00" fill="#000"/>
<rect x="1195.70" y="562.50" width="4.20" height="5.00" fill="#000"/>
<rect x="1194.30" y="571.30" width="7.00" height="16.70" fill="#fff" stroke="#666" stroke-width="0.9"/>
<rect x="1195.70" y="572.90" width="4.20" height="5.00" fill="#000"/>
<rect x="1195.70" y="581.40" width="4.20" height="5.00" fill="#000"/>
<rect x="1194.30" y="590.20" width="7.00" height="16.70" fill="#fff" stroke="#666" stroke-width="0.9"/>
<rect x="1195.70" y="591.80" width="4.20" height="5.00" fill="#000"/>
<rect x="1195.70" y="600.30" width="4.20" height="5.00" fill="#000"/>
<rect x="1194.30" y="609.10" width="7.00" height="16.70" fill="#fff" stroke="#666" stroke-width="0.9"/>
<rect x="1195.70" y="610.70" width="4.20" height="5.00" fill="#000"/>
<rect x="1195.70" y="619.20" width="4.20" height="5.00" fill="#000"/>
<rect x="1194.30" y="628.00" width="7.00" height="16.70" fill="#fff" stroke="#666" stroke-width="0.9"/>
<rect x="1195.70" y="629.60" width="4.20" height="5.00" fill="#000"/>
<rect x="1195.70" y="638.10" width="4.20" height="5.00" fill="#000"/>
<text x="1184" y="545" font-size="9.5" text-anchor="middle" fill="#2e2e2e" >SMR4</text>
<text x="1184" y="564" font-size="9.5" text-anchor="middle" fill="#2e2e2e" >SMR1</text>
<text x="1184" y="583" font-size="9.5" text-anchor="middle" fill="#2e2e2e" >SMR9</text>
<text x="1184" y="602" font-size="9.5" text-anchor="middle" fill="#2e2e2e" >SMR2</text>
<text x="1184" y="621" font-size="9.5" text-anchor="middle" fill="#2e2e2e" >SMR5</text>
<text x="1184" y="640" font-size="9.5" text-anchor="middle" fill="#2e2e2e" >SMR6</text>
<text x="1229" y="575" font-size="9.5" text-anchor="middle" fill="#2e2e2e" >SMR35</text>
<text x="1229" y="589.5" font-size="9.5" text-anchor="middle" fill="#2e2e2e" >SMR36</text>
<text x="1230" y="563.5" font-size="6.5" text-anchor="middle" fill="#666" >SMR46</text>
<text x="1230" y="601" font-size="6.5" text-anchor="middle" fill="#666" >SMR47</text>
<rect x="1204.30" y="518.80" width="17.20" height="7.40" fill="#fff" stroke="#666" stroke-width="0.9"/>
<rect x="1206.50" y="520.30" width="4.60" height="4.40" fill="#000"/>
<rect x="1214.50" y="520.30" width="4.60" height="4.40" fill="#000"/>
<rect x="1204.30" y="531.50" width="17.20" height="7.40" fill="#fff" stroke="#666" stroke-width="0.9"/>
<rect x="1206.50" y="533.00" width="4.60" height="4.40" fill="#000"/>
<rect x="1214.50" y="533.00" width="4.60" height="4.40" fill="#000"/>
<rect x="1204.30" y="543.80" width="17.20" height="7.40" fill="#fff" stroke="#666" stroke-width="0.9"/>
<rect x="1206.50" y="545.30" width="4.60" height="4.40" fill="#000"/>
<rect x="1214.50" y="545.30" width="4.60" height="4.40" fill="#000"/>
<rect x="1204.30" y="557.10" width="17.20" height="7.40" fill="#fff" stroke="#666" stroke-width="0.9"/>
<rect x="1206.50" y="558.60" width="4.60" height="4.40" fill="#000"/>
<rect x="1214.50" y="558.60" width="4.60" height="4.40" fill="#000"/>
<rect x="1204.30" y="594.30" width="17.20" height="7.40" fill="#fff" stroke="#666" stroke-width="0.9"/>
<rect x="1206.50" y="595.80" width="4.60" height="4.40" fill="#000"/>
<rect x="1214.50" y="595.80" width="4.60" height="4.40" fill="#000"/>
<rect x="1204.30" y="606.90" width="17.20" height="7.40" fill="#fff" stroke="#666" stroke-width="0.9"/>
<rect x="1206.50" y="608.40" width="4.60" height="4.40" fill="#000"/>
<rect x="1214.50" y="608.40" width="4.60" height="4.40" fill="#000"/>
<rect x="1204.30" y="619.20" width="17.20" height="7.40" fill="#fff" stroke="#666" stroke-width="0.9"/>
<rect x="1206.50" y="620.70" width="4.60" height="4.40" fill="#000"/>
<rect x="1214.50" y="620.70" width="4.60" height="4.40" fill="#000"/>
<rect x="1204.30" y="632.00" width="17.20" height="7.40" fill="#fff" stroke="#666" stroke-width="0.9"/>
<rect x="1206.50" y="633.50" width="4.60" height="4.40" fill="#000"/>
<rect x="1214.50" y="633.50" width="4.60" height="4.40" fill="#000"/>
<rect x="1224.80" y="514.60" width="6.70" height="16.80" fill="#fff" stroke="#666" stroke-width="0.9"/>
<rect x="1226.20" y="516.20" width="3.90" height="5.00" fill="#000"/>
<rect x="1226.20" y="524.80" width="3.90" height="5.00" fill="#000"/>
<rect x="1224.80" y="533.00" width="6.70" height="16.80" fill="#fff" stroke="#666" stroke-width="0.9"/>
<rect x="1226.20" y="534.60" width="3.90" height="5.00" fill="#000"/>
<rect x="1226.20" y="543.20" width="3.90" height="5.00" fill="#000"/>
<rect x="1224.80" y="608.90" width="6.70" height="16.80" fill="#fff" stroke="#666" stroke-width="0.9"/>
<rect x="1226.20" y="610.50" width="3.90" height="5.00" fill="#000"/>
<rect x="1226.20" y="619.10" width="3.90" height="5.00" fill="#000"/>
<rect x="1224.80" y="627.80" width="6.70" height="16.80" fill="#fff" stroke="#666" stroke-width="0.9"/>
<rect x="1226.20" y="629.40" width="3.90" height="5.00" fill="#000"/>
<rect x="1226.20" y="638.00" width="3.90" height="5.00" fill="#000"/>
<rect x="1209.60" y="571.30" width="7.00" height="17.00" fill="#fff" stroke="#666" stroke-width="0.9"/>
<rect x="1211.00" y="572.90" width="4.20" height="5.00" fill="#000"/>
<rect x="1211.00" y="581.70" width="4.20" height="5.00" fill="#000"/>
<text x="1212" y="518.5" font-size="6.5" text-anchor="middle" fill="#555" >SMR43</text>
<text x="1212" y="647.5" font-size="6.5" text-anchor="middle" fill="#555" >SMR50</text>
<rect x="689.30" y="501.60" width="36.30" height="150.90" fill="#fff" stroke="#666" stroke-width="0.9"/>
<rect x="705.00" y="575.50" width="4.00" height="4.00" fill="#000"/>
<text x="707.5" y="499" font-size="9.5" text-anchor="middle" fill="#2e2e2e" >LBL</text>
<rect x="731.60" y="509.60" width="31.30" height="10.40" fill="#fff" stroke="#666" stroke-width="0.9"/>
<rect x="732.90" y="510.60" width="9.20" height="8.40" fill="#000"/>
<rect x="752.40" y="510.60" width="9.20" height="8.40" fill="#000"/>
<rect x="731.60" y="524.50" width="31.30" height="10.40" fill="#fff" stroke="#666" stroke-width="0.9"/>
<rect x="732.90" y="525.50" width="9.20" height="8.40" fill="#000"/>
<rect x="752.40" y="525.50" width="9.20" height="8.40" fill="#000"/>
<rect x="731.60" y="539.40" width="31.30" height="10.40" fill="#fff" stroke="#666" stroke-width="0.9"/>
<rect x="732.90" y="540.40" width="9.20" height="8.40" fill="#000"/>
<rect x="752.40" y="540.40" width="9.20" height="8.40" fill="#000"/>
<rect x="731.60" y="554.30" width="31.30" height="10.40" fill="#fff" stroke="#666" stroke-width="0.9"/>
<rect x="732.90" y="555.30" width="9.20" height="8.40" fill="#000"/>
<rect x="752.40" y="555.30" width="9.20" height="8.40" fill="#000"/>
<rect x="731.60" y="569.20" width="31.30" height="10.40" fill="#fff" stroke="#666" stroke-width="0.9"/>
<rect x="732.90" y="570.20" width="9.20" height="8.40" fill="#000"/>
<rect x="752.40" y="570.20" width="9.20" height="8.40" fill="#000"/>
<rect x="731.60" y="584.10" width="31.30" height="10.40" fill="#fff" stroke="#666" stroke-width="0.9"/>
<rect x="732.90" y="585.10" width="9.20" height="8.40" fill="#000"/>
<rect x="752.40" y="585.10" width="9.20" height="8.40" fill="#000"/>
<rect x="731.60" y="599.00" width="31.30" height="10.40" fill="#fff" stroke="#666" stroke-width="0.9"/>
<rect x="732.90" y="600.00" width="9.20" height="8.40" fill="#000"/>
<rect x="752.40" y="600.00" width="9.20" height="8.40" fill="#000"/>
<rect x="731.60" y="613.90" width="31.30" height="10.40" fill="#fff" stroke="#666" stroke-width="0.9"/>
<rect x="732.90" y="614.90" width="9.20" height="8.40" fill="#000"/>
<rect x="752.40" y="614.90" width="9.20" height="8.40" fill="#000"/>
<rect x="731.60" y="628.80" width="31.30" height="10.40" fill="#fff" stroke="#666" stroke-width="0.9"/>
<rect x="732.90" y="629.80" width="9.20" height="8.40" fill="#000"/>
<rect x="752.40" y="629.80" width="9.20" height="8.40" fill="#000"/>
<rect x="731.60" y="643.70" width="31.30" height="10.40" fill="#fff" stroke="#666" stroke-width="0.9"/>
<rect x="732.90" y="644.70" width="9.20" height="8.40" fill="#000"/>
<rect x="752.40" y="644.70" width="9.20" height="8.40" fill="#000"/>
<text x="747" y="507" font-size="9.5" text-anchor="middle" fill="#2e2e2e" >SMD3</text>
<text x="775" y="578" font-size="9.5" text-anchor="middle" fill="#2e2e2e" >SMD7</text>
<text x="774" y="637" font-size="9.5" text-anchor="middle" fill="#2e2e2e" >SMD1</text>
<text x="774" y="652" font-size="9.5" text-anchor="middle" fill="#2e2e2e" >SMD2</text>
<circle cx="793.00" cy="534.70" r="23.00" fill="none" stroke="#555" stroke-width="0.9"/>
<rect x="783.40" y="516.00" width="25.10" height="36.40" fill="#fff" stroke="#555" stroke-width="0.9"/>
<circle cx="789.00" cy="521.70" r="4.40" fill="#000" stroke="none" stroke-width="0"/>
<circle cx="801.60" cy="534.40" r="4.40" fill="#000" stroke="none" stroke-width="0"/>
<circle cx="789.00" cy="546.90" r="4.40" fill="#000" stroke="none" stroke-width="0"/>
<circle cx="772.00" cy="549.70" r="1.60" fill="#fff" stroke="#777" stroke-width="0.7"/>
<circle cx="845.30" cy="534.70" r="23.00" fill="none" stroke="#555" stroke-width="0.9"/>
<rect x="835.70" y="516.00" width="25.10" height="36.40" fill="#fff" stroke="#555" stroke-width="0.9"/>
<circle cx="841.30" cy="521.70" r="4.40" fill="#000" stroke="none" stroke-width="0"/>
<circle cx="853.90" cy="534.40" r="4.40" fill="#000" stroke="none" stroke-width="0"/>
<circle cx="841.30" cy="546.90" r="4.40" fill="#000" stroke="none" stroke-width="0"/>
<circle cx="824.30" cy="549.70" r="1.60" fill="#fff" stroke="#777" stroke-width="0.7"/>
<circle cx="793.00" cy="603.70" r="23.00" fill="none" stroke="#555" stroke-width="0.9"/>
<rect x="783.40" y="585.00" width="25.10" height="36.40" fill="#fff" stroke="#555" stroke-width="0.9"/>
<circle cx="789.00" cy="590.70" r="4.40" fill="#000" stroke="none" stroke-width="0"/>
<circle cx="801.60" cy="603.40" r="4.40" fill="#000" stroke="none" stroke-width="0"/>
<circle cx="789.00" cy="615.90" r="4.40" fill="#000" stroke="none" stroke-width="0"/>
<circle cx="772.00" cy="618.70" r="1.60" fill="#fff" stroke="#777" stroke-width="0.7"/>
<circle cx="845.30" cy="603.70" r="23.00" fill="none" stroke="#555" stroke-width="0.9"/>
<rect x="835.70" y="585.00" width="25.10" height="36.40" fill="#fff" stroke="#555" stroke-width="0.9"/>
<circle cx="841.30" cy="590.70" r="4.40" fill="#000" stroke="none" stroke-width="0"/>
<circle cx="853.90" cy="603.40" r="4.40" fill="#000" stroke="none" stroke-width="0"/>
<circle cx="841.30" cy="615.90" r="4.40" fill="#000" stroke="none" stroke-width="0"/>
<circle cx="824.30" cy="618.70" r="1.60" fill="#fff" stroke="#777" stroke-width="0.7"/>
<circle cx="897.40" cy="569.30" r="23.00" fill="none" stroke="#555" stroke-width="0.9"/>
<rect x="887.80" y="550.60" width="25.10" height="36.40" fill="#fff" stroke="#555" stroke-width="0.9"/>
<circle cx="893.40" cy="556.30" r="4.40" fill="#000" stroke="none" stroke-width="0"/>
<circle cx="906.00" cy="569.00" r="4.40" fill="#000" stroke="none" stroke-width="0"/>
<circle cx="893.40" cy="581.50" r="4.40" fill="#000" stroke="none" stroke-width="0"/>
<circle cx="876.40" cy="584.30" r="1.60" fill="#fff" stroke="#777" stroke-width="0.7"/>
<text x="793" y="510.5" font-size="9.5" text-anchor="middle" fill="#2e2e2e" >Q2</text>
<text x="845" y="510.5" font-size="9.5" text-anchor="middle" fill="#2e2e2e" >Q4</text>
<text x="793" y="578.5" font-size="9.5" text-anchor="middle" fill="#2e2e2e" >Q1</text>
<text x="845" y="578.5" font-size="9.5" text-anchor="middle" fill="#2e2e2e" >Q3</text>
<text x="897" y="543.5" font-size="9.5" text-anchor="middle" fill="#2e2e2e" >Q5</text>
<rect x="960.60" y="533.40" width="4.80" height="15.20" fill="#fff" stroke="#666" stroke-width="0.8"/>
<rect x="955.00" y="534.40" width="5.60" height="4.40" fill="#000"/>
<rect x="955.00" y="543.40" width="5.60" height="4.40" fill="#000"/>
<rect x="965.40" y="538.80" width="5.60" height="4.40" fill="#000"/>
<text x="964.5" y="530.5" font-size="9.5" text-anchor="middle" fill="#2e2e2e" >Q15</text>
<rect x="996.20" y="533.40" width="4.80" height="15.20" fill="#fff" stroke="#666" stroke-width="0.8"/>
<rect x="1001.00" y="534.40" width="5.60" height="4.40" fill="#000"/>
<rect x="1001.00" y="543.40" width="5.60" height="4.40" fill="#000"/>
<rect x="990.60" y="538.80" width="5.60" height="4.40" fill="#000"/>
<text x="998.1" y="530.5" font-size="9.5" text-anchor="middle" fill="#2e2e2e" >Q8</text>
<rect x="945.30" y="552.40" width="4.80" height="15.20" fill="#fff" stroke="#666" stroke-width="0.8"/>
<rect x="950.10" y="553.40" width="5.60" height="4.40" fill="#000"/>
<rect x="950.10" y="562.40" width="5.60" height="4.40" fill="#000"/>
<rect x="939.70" y="557.80" width="5.60" height="4.40" fill="#000"/>
<text x="947.2" y="549.5" font-size="9.5" text-anchor="middle" fill="#2e2e2e" >Q11</text>
<rect x="1011.60" y="552.40" width="4.80" height="15.20" fill="#fff" stroke="#666" stroke-width="0.8"/>
<rect x="1006.00" y="553.40" width="5.60" height="4.40" fill="#000"/>
<rect x="1006.00" y="562.40" width="5.60" height="4.40" fill="#000"/>
<rect x="1016.40" y="557.80" width="5.60" height="4.40" fill="#000"/>
<text x="1015.5" y="549.5" font-size="9.5" text-anchor="middle" fill="#2e2e2e" >Q13</text>
<rect x="960.60" y="571.40" width="4.80" height="15.20" fill="#fff" stroke="#666" stroke-width="0.8"/>
<rect x="955.00" y="572.40" width="5.60" height="4.40" fill="#000"/>
<rect x="955.00" y="581.40" width="5.60" height="4.40" fill="#000"/>
<rect x="965.40" y="576.80" width="5.60" height="4.40" fill="#000"/>
<text x="964.5" y="568.5" font-size="9.5" text-anchor="middle" fill="#2e2e2e" >Q14</text>
<rect x="996.20" y="571.40" width="4.80" height="15.20" fill="#fff" stroke="#666" stroke-width="0.8"/>
<rect x="1001.00" y="572.40" width="5.60" height="4.40" fill="#000"/>
<rect x="1001.00" y="581.40" width="5.60" height="4.40" fill="#000"/>
<rect x="990.60" y="576.80" width="5.60" height="4.40" fill="#000"/>
<text x="998.1" y="568.5" font-size="9.5" text-anchor="middle" fill="#2e2e2e" >Q10</text>
<rect x="945.30" y="590.30" width="4.80" height="15.20" fill="#fff" stroke="#666" stroke-width="0.8"/>
<rect x="950.10" y="591.30" width="5.60" height="4.40" fill="#000"/>
<rect x="950.10" y="600.30" width="5.60" height="4.40" fill="#000"/>
<rect x="939.70" y="595.70" width="5.60" height="4.40" fill="#000"/>
<text x="947.2" y="587.4" font-size="9.5" text-anchor="middle" fill="#2e2e2e" >Q12</text>
<rect x="1011.60" y="590.30" width="4.80" height="15.20" fill="#fff" stroke="#666" stroke-width="0.8"/>
<rect x="1006.00" y="591.30" width="5.60" height="4.40" fill="#000"/>
<rect x="1006.00" y="600.30" width="5.60" height="4.40" fill="#000"/>
<rect x="1016.40" y="595.70" width="5.60" height="4.40" fill="#000"/>
<text x="1015.5" y="587.4" font-size="9.5" text-anchor="middle" fill="#2e2e2e" >Q7</text>
<rect x="960.60" y="609.10" width="4.80" height="15.20" fill="#fff" stroke="#666" stroke-width="0.8"/>
<rect x="955.00" y="610.10" width="5.60" height="4.40" fill="#000"/>
<rect x="955.00" y="619.10" width="5.60" height="4.40" fill="#000"/>
<rect x="965.40" y="614.50" width="5.60" height="4.40" fill="#000"/>
<text x="964.5" y="606.2" font-size="9.5" text-anchor="middle" fill="#2e2e2e" >Q6</text>
<rect x="996.20" y="609.10" width="4.80" height="15.20" fill="#fff" stroke="#666" stroke-width="0.8"/>
<rect x="1001.00" y="610.10" width="5.60" height="4.40" fill="#000"/>
<rect x="1001.00" y="619.10" width="5.60" height="4.40" fill="#000"/>
<rect x="990.60" y="614.50" width="5.60" height="4.40" fill="#000"/>
<text x="998.1" y="606.2" font-size="9.5" text-anchor="middle" fill="#2e2e2e" >Q9</text>
<circle cx="1032.00" cy="650.60" r="4.40" fill="#fff" stroke="#333" stroke-width="0.9"/>
<circle cx="1032.00" cy="650.60" r="2.90" fill="#000" stroke="none" stroke-width="0"/>
<text x="1032" y="644" font-size="5" text-anchor="middle" fill="#8a8a8a" >U5-LF1</text>
<rect x="734.30" y="663.00" width="25.40" height="10.40" fill="#fff" stroke="#666" stroke-width="0.9"/>
<rect x="735.60" y="664.00" width="8.60" height="8.40" fill="#000"/>
<rect x="749.80" y="664.00" width="8.60" height="8.40" fill="#000"/>
<rect x="734.30" y="677.88" width="25.40" height="10.40" fill="#fff" stroke="#666" stroke-width="0.9"/>
<rect x="735.60" y="678.88" width="8.60" height="8.40" fill="#000"/>
<rect x="749.80" y="678.88" width="8.60" height="8.40" fill="#000"/>
<rect x="734.30" y="692.76" width="25.40" height="10.40" fill="#fff" stroke="#666" stroke-width="0.9"/>
<rect x="735.60" y="693.76" width="8.60" height="8.40" fill="#000"/>
<rect x="749.80" y="693.76" width="8.60" height="8.40" fill="#000"/>
<rect x="734.30" y="707.64" width="25.40" height="10.40" fill="#fff" stroke="#666" stroke-width="0.9"/>
<rect x="735.60" y="708.64" width="8.60" height="8.40" fill="#000"/>
<rect x="749.80" y="708.64" width="8.60" height="8.40" fill="#000"/>
<rect x="734.30" y="722.52" width="25.40" height="10.40" fill="#fff" stroke="#666" stroke-width="0.9"/>
<rect x="735.60" y="723.52" width="8.60" height="8.40" fill="#000"/>
<rect x="749.80" y="723.52" width="8.60" height="8.40" fill="#000"/>
<rect x="734.30" y="737.40" width="25.40" height="10.40" fill="#fff" stroke="#666" stroke-width="0.9"/>
<rect x="735.60" y="738.40" width="8.60" height="8.40" fill="#000"/>
<rect x="749.80" y="738.40" width="8.60" height="8.40" fill="#000"/>
<rect x="734.30" y="752.28" width="25.40" height="10.40" fill="#fff" stroke="#666" stroke-width="0.9"/>
<rect x="735.60" y="753.28" width="8.60" height="8.40" fill="#000"/>
<rect x="749.80" y="753.28" width="8.60" height="8.40" fill="#000"/>
<rect x="734.30" y="767.16" width="25.40" height="10.40" fill="#fff" stroke="#666" stroke-width="0.9"/>
<rect x="735.60" y="768.16" width="8.60" height="8.40" fill="#000"/>
<rect x="749.80" y="768.16" width="8.60" height="8.40" fill="#000"/>
<rect x="734.30" y="782.04" width="25.40" height="10.40" fill="#fff" stroke="#666" stroke-width="0.9"/>
<rect x="735.60" y="783.04" width="8.60" height="8.40" fill="#000"/>
<rect x="749.80" y="783.04" width="8.60" height="8.40" fill="#000"/>
<rect x="734.30" y="796.92" width="25.40" height="10.40" fill="#fff" stroke="#666" stroke-width="0.9"/>
<rect x="735.60" y="797.92" width="8.60" height="8.40" fill="#000"/>
<rect x="749.80" y="797.92" width="8.60" height="8.40" fill="#000"/>
<text x="722.5" y="671.5" font-size="9.5" text-anchor="middle" fill="#2e2e2e" >SMR31</text>
<text x="722.5" y="686.5" font-size="9.5" text-anchor="middle" fill="#2e2e2e" >SMR23</text>
<text x="722.5" y="701.5" font-size="9.5" text-anchor="middle" fill="#2e2e2e" >SMR24</text>
<text x="722.5" y="716" font-size="9.5" text-anchor="middle" fill="#2e2e2e" >SMR25</text>
<text x="722.5" y="731" font-size="9.5" text-anchor="middle" fill="#2e2e2e" >SMR26</text>
<text x="722.5" y="746" font-size="9.5" text-anchor="middle" fill="#2e2e2e" >SMR27</text>
<text x="722.5" y="761" font-size="9.5" text-anchor="middle" fill="#2e2e2e" >SMR42</text>
<text x="722.5" y="776" font-size="9.5" text-anchor="middle" fill="#2e2e2e" >SMR28</text>
<text x="772" y="790.5" font-size="9.5" text-anchor="middle" fill="#2e2e2e" >SMR29</text>
<text x="747" y="815.5" font-size="9.5" text-anchor="middle" fill="#2e2e2e" >SMR30</text>
<text transform="translate(691.5 762) rotate(-90)" font-size="10" fill="#8a8a8a" font-family="Liberation Sans" textLength="49" lengthAdjust="spacingAndGlyphs">P/N PC009</text>
<text transform="translate(711.5 750.5) rotate(-90)" font-size="16" fill="#9a9a9a" font-family="Liberation Sans" textLength="31" lengthAdjust="spacingAndGlyphs" style="font-weight:normal">2001</text>
<path d="M712 769.5 H704 Q700.5 769.5 700.5 773 Q700.5 776.5 704 776.5 H712" fill="none" stroke="#8a8a8a" stroke-width="0.8"/>
<circle cx="717.00" cy="796.40" r="4.40" fill="#fff" stroke="#333" stroke-width="0.9"/>
<circle cx="717.00" cy="796.40" r="2.90" fill="#000" stroke="none" stroke-width="0"/>
<text x="717" y="789" font-size="5" text-anchor="middle" fill="#8a8a8a" >FID1</text>
<rect x="805.30" y="649.00" width="141.30" height="141.60" fill="#fff" stroke="#555" stroke-width="0.9"/>
<g fill="#111">
<rect x="811.30" y="642" width="1.3" height="7"/><rect x="811.30" y="790.6" width="1.3" height="8"/>
<rect x="797.5" y="655.20" width="7.8" height="1.3"/><rect x="946.6" y="655.20" width="7.8" height="1.3"/>
<rect x="813.81" y="642" width="1.3" height="7"/><rect x="813.81" y="790.6" width="1.3" height="8"/>
<rect x="797.5" y="657.71" width="7.8" height="1.3"/><rect x="946.6" y="657.71" width="7.8" height="1.3"/>
<rect x="816.32" y="642" width="1.3" height="7"/><rect x="816.32" y="790.6" width="1.3" height="8"/>
<rect x="797.5" y="660.23" width="7.8" height="1.3"/><rect x="946.6" y="660.23" width="7.8" height="1.3"/>
<rect x="818.83" y="642" width="1.3" height="7"/><rect x="818.83" y="790.6" width="1.3" height="8"/>
<rect x="797.5" y="662.74" width="7.8" height="1.3"/><rect x="946.6" y="662.74" width="7.8" height="1.3"/>
<rect x="821.34" y="642" width="1.3" height="7"/><rect x="821.34" y="790.6" width="1.3" height="8"/>
<rect x="797.5" y="665.25" width="7.8" height="1.3"/><rect x="946.6" y="665.25" width="7.8" height="1.3"/>
<rect x="823.85" y="642" width="1.3" height="7"/><rect x="823.85" y="790.6" width="1.3" height="8"/>
<rect x="797.5" y="667.77" width="7.8" height="1.3"/><rect x="946.6" y="667.77" width="7.8" height="1.3"/>
<rect x="826.36" y="642" width="1.3" height="7"/><rect x="826.36" y="790.6" width="1.3" height="8"/>
<rect x="797.5" y="670.28" width="7.8" height="1.3"/><rect x="946.6" y="670.28" width="7.8" height="1.3"/>
<rect x="828.87" y="642" width="1.3" height="7"/><rect x="828.87" y="790.6" width="1.3" height="8"/>
<rect x="797.5" y="672.80" width="7.8" height="1.3"/><rect x="946.6" y="672.80" width="7.8" height="1.3"/>
<rect x="831.38" y="642" width="1.3" height="7"/><rect x="831.38" y="790.6" width="1.3" height="8"/>
<rect x="797.5" y="675.31" width="7.8" height="1.3"/><rect x="946.6" y="675.31" width="7.8" height="1.3"/>
<rect x="833.89" y="642" width="1.3" height="7"/><rect x="833.89" y="790.6" width="1.3" height="8"/>
<rect x="797.5" y="677.82" width="7.8" height="1.3"/><rect x="946.6" y="677.82" width="7.8" height="1.3"/>
<rect x="836.40" y="642" width="1.3" height="7"/><rect x="836.40" y="790.6" width="1.3" height="8"/>
<rect x="797.5" y="680.34" width="7.8" height="1.3"/><rect x="946.6" y="680.34" width="7.8" height="1.3"/>
<rect x="838.91" y="642" width="1.3" height="7"/><rect x="838.91" y="790.6" width="1.3" height="8"/>
<rect x="797.5" y="682.85" width="7.8" height="1.3"/><rect x="946.6" y="682.85" width="7.8" height="1.3"/>
<rect x="841.42" y="642" width="1.3" height="7"/><rect x="841.42" y="790.6" width="1.3" height="8"/>
<rect x="797.5" y="685.36" width="7.8" height="1.3"/><rect x="946.6" y="685.36" width="7.8" height="1.3"/>
<rect x="843.93" y="642" width="1.3" height="7"/><rect x="843.93" y="790.6" width="1.3" height="8"/>
<rect x="797.5" y="687.88" width="7.8" height="1.3"/><rect x="946.6" y="687.88" width="7.8" height="1.3"/>
<rect x="846.44" y="642" width="1.3" height="7"/><rect x="846.44" y="790.6" width="1.3" height="8"/>
<rect x="797.5" y="690.39" width="7.8" height="1.3"/><rect x="946.6" y="690.39" width="7.8" height="1.3"/>
<rect x="848.95" y="642" width="1.3" height="7"/><rect x="848.95" y="790.6" width="1.3" height="8"/>
<rect x="797.5" y="692.91" width="7.8" height="1.3"/><rect x="946.6" y="692.91" width="7.8" height="1.3"/>
<rect x="851.46" y="642" width="1.3" height="7"/><rect x="851.46" y="790.6" width="1.3" height="8"/>
<rect x="797.5" y="695.42" width="7.8" height="1.3"/><rect x="946.6" y="695.42" width="7.8" height="1.3"/>
<rect x="853.97" y="642" width="1.3" height="7"/><rect x="853.97" y="790.6" width="1.3" height="8"/>
<rect x="797.5" y="697.93" width="7.8" height="1.3"/><rect x="946.6" y="697.93" width="7.8" height="1.3"/>
<rect x="856.48" y="642" width="1.3" height="7"/><rect x="856.48" y="790.6" width="1.3" height="8"/>
<rect x="797.5" y="700.45" width="7.8" height="1.3"/><rect x="946.6" y="700.45" width="7.8" height="1.3"/>
<rect x="858.99" y="642" width="1.3" height="7"/><rect x="858.99" y="790.6" width="1.3" height="8"/>
<rect x="797.5" y="702.96" width="7.8" height="1.3"/><rect x="946.6" y="702.96" width="7.8" height="1.3"/>
<rect x="861.50" y="642" width="1.3" height="7"/><rect x="861.50" y="790.6" width="1.3" height="8"/>
<rect x="797.5" y="705.47" width="7.8" height="1.3"/><rect x="946.6" y="705.47" width="7.8" height="1.3"/>
<rect x="864.01" y="642" width="1.3" height="7"/><rect x="864.01" y="790.6" width="1.3" height="8"/>
<rect x="797.5" y="707.99" width="7.8" height="1.3"/><rect x="946.6" y="707.99" width="7.8" height="1.3"/>
<rect x="866.52" y="642" width="1.3" height="7"/><rect x="866.52" y="790.6" width="1.3" height="8"/>
<rect x="797.5" y="710.50" width="7.8" height="1.3"/><rect x="946.6" y="710.50" width="7.8" height="1.3"/>
<rect x="869.03" y="642" width="1.3" height="7"/><rect x="869.03" y="790.6" width="1.3" height="8"/>
<rect x="797.5" y="713.02" width="7.8" height="1.3"/><rect x="946.6" y="713.02" width="7.8" height="1.3"/>
<rect x="871.54" y="642" width="1.3" height="7"/><rect x="871.54" y="790.6" width="1.3" height="8"/>
<rect x="797.5" y="715.53" width="7.8" height="1.3"/><rect x="946.6" y="715.53" width="7.8" height="1.3"/>
<rect x="874.05" y="642" width="1.3" height="7"/><rect x="874.05" y="790.6" width="1.3" height="8"/>
<rect x="797.5" y="718.04" width="7.8" height="1.3"/><rect x="946.6" y="718.04" width="7.8" height="1.3"/>
<rect x="876.55" y="642" width="1.3" height="7"/><rect x="876.55" y="790.6" width="1.3" height="8"/>
<rect x="797.5" y="720.56" width="7.8" height="1.3"/><rect x="946.6" y="720.56" width="7.8" height="1.3"/>
<rect x="879.06" y="642" width="1.3" height="7"/><rect x="879.06" y="790.6" width="1.3" height="8"/>
<rect x="797.5" y="723.07" width="7.8" height="1.3"/><rect x="946.6" y="723.07" width="7.8" height="1.3"/>
<rect x="881.57" y="642" width="1.3" height="7"/><rect x="881.57" y="790.6" width="1.3" height="8"/>
<rect x="797.5" y="725.58" width="7.8" height="1.3"/><rect x="946.6" y="725.58" width="7.8" height="1.3"/>
<rect x="884.08" y="642" width="1.3" height="7"/><rect x="884.08" y="790.6" width="1.3" height="8"/>
<rect x="797.5" y="728.10" width="7.8" height="1.3"/><rect x="946.6" y="728.10" width="7.8" height="1.3"/>
<rect x="886.59" y="642" width="1.3" height="7"/><rect x="886.59" y="790.6" width="1.3" height="8"/>
<rect x="797.5" y="730.61" width="7.8" height="1.3"/><rect x="946.6" y="730.61" width="7.8" height="1.3"/>
<rect x="889.10" y="642" width="1.3" height="7"/><rect x="889.10" y="790.6" width="1.3" height="8"/>
<rect x="797.5" y="733.13" width="7.8" height="1.3"/><rect x="946.6" y="733.13" width="7.8" height="1.3"/>
<rect x="891.61" y="642" width="1.3" height="7"/><rect x="891.61" y="790.6" width="1.3" height="8"/>
<rect x="797.5" y="735.64" width="7.8" height="1.3"/><rect x="946.6" y="735.64" width="7.8" height="1.3"/>
<rect x="894.12" y="642" width="1.3" height="7"/><rect x="894.12" y="790.6" width="1.3" height="8"/>
<rect x="797.5" y="738.15" width="7.8" height="1.3"/><rect x="946.6" y="738.15" width="7.8" height="1.3"/>
<rect x="896.63" y="642" width="1.3" height="7"/><rect x="896.63" y="790.6" width="1.3" height="8"/>
<rect x="797.5" y="740.67" width="7.8" height="1.3"/><rect x="946.6" y="740.67" width="7.8" height="1.3"/>
<rect x="899.14" y="642" width="1.3" height="7"/><rect x="899.14" y="790.6" width="1.3" height="8"/>
<rect x="797.5" y="743.18" width="7.8" height="1.3"/><rect x="946.6" y="743.18" width="7.8" height="1.3"/>
<rect x="901.65" y="642" width="1.3" height="7"/><rect x="901.65" y="790.6" width="1.3" height="8"/>
<rect x="797.5" y="745.69" width="7.8" height="1.3"/><rect x="946.6" y="745.69" width="7.8" height="1.3"/>
<rect x="904.16" y="642" width="1.3" height="7"/><rect x="904.16" y="790.6" width="1.3" height="8"/>
<rect x="797.5" y="748.21" width="7.8" height="1.3"/><rect x="946.6" y="748.21" width="7.8" height="1.3"/>
<rect x="906.67" y="642" width="1.3" height="7"/><rect x="906.67" y="790.6" width="1.3" height="8"/>
<rect x="797.5" y="750.72" width="7.8" height="1.3"/><rect x="946.6" y="750.72" width="7.8" height="1.3"/>
<rect x="909.18" y="642" width="1.3" height="7"/><rect x="909.18" y="790.6" width="1.3" height="8"/>
<rect x="797.5" y="753.24" width="7.8" height="1.3"/><rect x="946.6" y="753.24" width="7.8" height="1.3"/>
<rect x="911.69" y="642" width="1.3" height="7"/><rect x="911.69" y="790.6" width="1.3" height="8"/>
<rect x="797.5" y="755.75" width="7.8" height="1.3"/><rect x="946.6" y="755.75" width="7.8" height="1.3"/>
<rect x="914.20" y="642" width="1.3" height="7"/><rect x="914.20" y="790.6" width="1.3" height="8"/>
<rect x="797.5" y="758.26" width="7.8" height="1.3"/><rect x="946.6" y="758.26" width="7.8" height="1.3"/>
<rect x="916.71" y="642" width="1.3" height="7"/><rect x="916.71" y="790.6" width="1.3" height="8"/>
<rect x="797.5" y="760.78" width="7.8" height="1.3"/><rect x="946.6" y="760.78" width="7.8" height="1.3"/>
<rect x="919.22" y="642" width="1.3" height="7"/><rect x="919.22" y="790.6" width="1.3" height="8"/>
<rect x="797.5" y="763.29" width="7.8" height="1.3"/><rect x="946.6" y="763.29" width="7.8" height="1.3"/>
<rect x="921.73" y="642" width="1.3" height="7"/><rect x="921.73" y="790.6" width="1.3" height="8"/>
<rect x="797.5" y="765.80" width="7.8" height="1.3"/><rect x="946.6" y="765.80" width="7.8" height="1.3"/>
<rect x="924.24" y="642" width="1.3" height="7"/><rect x="924.24" y="790.6" width="1.3" height="8"/>
<rect x="797.5" y="768.32" width="7.8" height="1.3"/><rect x="946.6" y="768.32" width="7.8" height="1.3"/>
<rect x="926.75" y="642" width="1.3" height="7"/><rect x="926.75" y="790.6" width="1.3" height="8"/>
<rect x="797.5" y="770.83" width="7.8" height="1.3"/><rect x="946.6" y="770.83" width="7.8" height="1.3"/>
<rect x="929.26" y="642" width="1.3" height="7"/><rect x="929.26" y="790.6" width="1.3" height="8"/>
<rect x="797.5" y="773.35" width="7.8" height="1.3"/><rect x="946.6" y="773.35" width="7.8" height="1.3"/>
<rect x="931.77" y="642" width="1.3" height="7"/><rect x="931.77" y="790.6" width="1.3" height="8"/>
<rect x="797.5" y="775.86" width="7.8" height="1.3"/><rect x="946.6" y="775.86" width="7.8" height="1.3"/>
<rect x="934.28" y="642" width="1.3" height="7"/><rect x="934.28" y="790.6" width="1.3" height="8"/>
<rect x="797.5" y="778.37" width="7.8" height="1.3"/><rect x="946.6" y="778.37" width="7.8" height="1.3"/>
<rect x="936.79" y="642" width="1.3" height="7"/><rect x="936.79" y="790.6" width="1.3" height="8"/>
<rect x="797.5" y="780.89" width="7.8" height="1.3"/><rect x="946.6" y="780.89" width="7.8" height="1.3"/>
<rect x="939.30" y="642" width="1.3" height="7"/><rect x="939.30" y="790.6" width="1.3" height="8"/>
<rect x="797.5" y="783.40" width="7.8" height="1.3"/><rect x="946.6" y="783.40" width="7.8" height="1.3"/>
</g>
<circle cx="813.00" cy="787.00" r="1.50" fill="#fff" stroke="#666" stroke-width="0.7"/>
<text x="875.5" y="723.5" font-size="9.5" text-anchor="middle" fill="#2e2e2e" >U1</text>
<rect x="1005.00" y="674.20" width="19.80" height="10.00" fill="#fff" stroke="#777" stroke-width="1.0"/>
<rect x="1007.20" y="676.00" width="6.60" height="6.40" fill="#000"/>
<rect x="1016.00" y="676.00" width="6.60" height="6.40" fill="#000"/>
<text x="1014.9" y="673.0" font-size="7" text-anchor="middle" fill="#666" >SMR21</text>
<rect x="1005.00" y="692.90" width="19.80" height="10.00" fill="#fff" stroke="#777" stroke-width="1.0"/>
<rect x="1007.20" y="694.70" width="6.60" height="6.40" fill="#000"/>
<rect x="1016.00" y="694.70" width="6.60" height="6.40" fill="#000"/>
<text x="1014.9" y="691.6999999999999" font-size="7" text-anchor="middle" fill="#666" >SMR19</text>
<rect x="1005.00" y="712.00" width="19.80" height="10.00" fill="#fff" stroke="#777" stroke-width="1.0"/>
<rect x="1007.20" y="713.80" width="6.60" height="6.40" fill="#000"/>
<rect x="1016.00" y="713.80" width="6.60" height="6.40" fill="#000"/>
<text x="1014.9" y="710.8" font-size="7" text-anchor="middle" fill="#666" >SMR22</text>
<rect x="1005.00" y="730.80" width="19.80" height="10.00" fill="#fff" stroke="#777" stroke-width="1.0"/>
<rect x="1007.20" y="732.60" width="6.60" height="6.40" fill="#000"/>
<rect x="1016.00" y="732.60" width="6.60" height="6.40" fill="#000"/>
<text x="1014.9" y="729.5999999999999" font-size="7" text-anchor="middle" fill="#666" >SMR17</text>
<rect x="1005.00" y="750.20" width="19.80" height="10.00" fill="#fff" stroke="#777" stroke-width="1.0"/>
<rect x="1007.20" y="752.00" width="6.60" height="6.40" fill="#000"/>
<rect x="1016.00" y="752.00" width="6.60" height="6.40" fill="#000"/>
<text x="1014.9" y="749.0" font-size="7" text-anchor="middle" fill="#666" >SMR15</text>
<rect x="1061.25" y="674.20" width="19.80" height="10.00" fill="#fff" stroke="#777" stroke-width="1.0"/>
<rect x="1063.45" y="676.00" width="6.60" height="6.40" fill="#000"/>
<rect x="1072.25" y="676.00" width="6.60" height="6.40" fill="#000"/>
<text x="1071.15" y="673.0" font-size="7" text-anchor="middle" fill="#666" >SMR14</text>
<rect x="1061.25" y="692.90" width="19.80" height="10.00" fill="#fff" stroke="#777" stroke-width="1.0"/>
<rect x="1063.45" y="694.70" width="6.60" height="6.40" fill="#000"/>
<rect x="1072.25" y="694.70" width="6.60" height="6.40" fill="#000"/>
<text x="1071.15" y="691.6999999999999" font-size="7" text-anchor="middle" fill="#666" >SMR20</text>
<rect x="1061.25" y="712.00" width="19.80" height="10.00" fill="#fff" stroke="#777" stroke-width="1.0"/>
<rect x="1063.45" y="713.80" width="6.60" height="6.40" fill="#000"/>
<rect x="1072.25" y="713.80" width="6.60" height="6.40" fill="#000"/>
<text x="1071.15" y="710.8" font-size="7" text-anchor="middle" fill="#666" >SMR18</text>
<rect x="1061.25" y="730.80" width="19.80" height="10.00" fill="#fff" stroke="#777" stroke-width="1.0"/>
<rect x="1063.45" y="732.60" width="6.60" height="6.40" fill="#000"/>
<rect x="1072.25" y="732.60" width="6.60" height="6.40" fill="#000"/>
<text x="1071.15" y="729.5999999999999" font-size="7" text-anchor="middle" fill="#666" >SMR13</text>
<rect x="1061.25" y="750.20" width="19.80" height="10.00" fill="#fff" stroke="#777" stroke-width="1.0"/>
<rect x="1063.45" y="752.00" width="6.60" height="6.40" fill="#000"/>
<rect x="1072.25" y="752.00" width="6.60" height="6.40" fill="#000"/>
<text x="1071.15" y="749.0" font-size="7" text-anchor="middle" fill="#666" >SMR16</text>
<rect x="987.50" y="785.00" width="9.80" height="20.00" fill="#fff" stroke="#888" stroke-width="1.1"/>
<rect x="989.00" y="787.30" width="6.80" height="6.40" fill="#000"/>
<rect x="989.00" y="796.30" width="6.80" height="6.40" fill="#000"/>
<rect x="987.5" y="781.5" width="9.8" height="1.4" fill="#c8c8c8"/>
<rect x="999.85" y="785.00" width="9.80" height="20.00" fill="#fff" stroke="#888" stroke-width="1.1"/>
<rect x="1001.35" y="787.30" width="6.80" height="6.40" fill="#000"/>
<rect x="1001.35" y="796.30" width="6.80" height="6.40" fill="#000"/>
<rect x="999.85" y="781.5" width="9.8" height="1.4" fill="#c8c8c8"/>
<rect x="1012.20" y="785.00" width="9.80" height="20.00" fill="#fff" stroke="#888" stroke-width="1.1"/>
<rect x="1013.70" y="787.30" width="6.80" height="6.40" fill="#000"/>
<rect x="1013.70" y="796.30" width="6.80" height="6.40" fill="#000"/>
<rect x="1012.2" y="781.5" width="9.8" height="1.4" fill="#c8c8c8"/>
<rect x="1024.55" y="785.00" width="9.80" height="20.00" fill="#fff" stroke="#888" stroke-width="1.1"/>
<rect x="1026.05" y="787.30" width="6.80" height="6.40" fill="#000"/>
<rect x="1026.05" y="796.30" width="6.80" height="6.40" fill="#000"/>
<rect x="1024.55" y="781.5" width="9.8" height="1.4" fill="#c8c8c8"/>
<rect x="1036.90" y="785.00" width="9.80" height="20.00" fill="#fff" stroke="#888" stroke-width="1.1"/>
<rect x="1038.40" y="787.30" width="6.80" height="6.40" fill="#000"/>
<rect x="1038.40" y="796.30" width="6.80" height="6.40" fill="#000"/>
<rect x="1036.9" y="781.5" width="9.8" height="1.4" fill="#c8c8c8"/>
<rect x="1049.25" y="785.00" width="9.80" height="20.00" fill="#fff" stroke="#888" stroke-width="1.1"/>
<rect x="1050.75" y="787.30" width="6.80" height="6.40" fill="#000"/>
<rect x="1050.75" y="796.30" width="6.80" height="6.40" fill="#000"/>
<rect x="1049.25" y="781.5" width="9.8" height="1.4" fill="#c8c8c8"/>
<rect x="1061.60" y="785.00" width="9.80" height="20.00" fill="#fff" stroke="#888" stroke-width="1.1"/>
<rect x="1063.10" y="787.30" width="6.80" height="6.40" fill="#000"/>
<rect x="1063.10" y="796.30" width="6.80" height="6.40" fill="#000"/>
<rect x="1061.6" y="781.5" width="9.8" height="1.4" fill="#c8c8c8"/>
<rect x="1073.95" y="785.00" width="9.80" height="20.00" fill="#fff" stroke="#888" stroke-width="1.1"/>
<rect x="1075.45" y="787.30" width="6.80" height="6.40" fill="#000"/>
<rect x="1075.45" y="796.30" width="6.80" height="6.40" fill="#000"/>
<rect x="1073.95" y="781.5" width="9.8" height="1.4" fill="#c8c8c8"/>
<rect x="1086.30" y="785.00" width="9.80" height="20.00" fill="#fff" stroke="#888" stroke-width="1.1"/>
<rect x="1087.80" y="787.30" width="6.80" height="6.40" fill="#000"/>
<rect x="1087.80" y="796.30" width="6.80" height="6.40" fill="#000"/>
<rect x="1086.3" y="781.5" width="9.8" height="1.4" fill="#c8c8c8"/>
<rect x="1098.65" y="785.00" width="9.80" height="20.00" fill="#fff" stroke="#888" stroke-width="1.1"/>
<rect x="1100.15" y="787.30" width="6.80" height="6.40" fill="#000"/>
<rect x="1100.15" y="796.30" width="6.80" height="6.40" fill="#000"/>
<rect x="1098.65" y="781.5" width="9.8" height="1.4" fill="#c8c8c8"/>
<rect x="1136.50" y="691.25" width="24.75" height="97.05" fill="#fff" stroke="#666" stroke-width="0.9"/>
<circle cx="1129.60" cy="695.40" r="4.00" fill="#000" stroke="none" stroke-width="0"/>
<circle cx="1167.50" cy="695.40" r="4.00" fill="#000" stroke="none" stroke-width="0"/>
<circle cx="1129.60" cy="707.97" r="4.00" fill="#000" stroke="none" stroke-width="0"/>
<circle cx="1167.50" cy="707.97" r="4.00" fill="#000" stroke="none" stroke-width="0"/>
<circle cx="1129.60" cy="720.54" r="4.00" fill="#000" stroke="none" stroke-width="0"/>
<circle cx="1167.50" cy="720.54" r="4.00" fill="#000" stroke="none" stroke-width="0"/>
<circle cx="1129.60" cy="733.11" r="4.00" fill="#000" stroke="none" stroke-width="0"/>
<circle cx="1167.50" cy="733.11" r="4.00" fill="#000" stroke="none" stroke-width="0"/>
<circle cx="1129.60" cy="745.68" r="4.00" fill="#000" stroke="none" stroke-width="0"/>
<circle cx="1167.50" cy="745.68" r="4.00" fill="#000" stroke="none" stroke-width="0"/>
<circle cx="1129.60" cy="758.25" r="4.00" fill="#000" stroke="none" stroke-width="0"/>
<circle cx="1167.50" cy="758.25" r="4.00" fill="#000" stroke="none" stroke-width="0"/>
<circle cx="1129.60" cy="770.82" r="4.00" fill="#000" stroke="none" stroke-width="0"/>
<circle cx="1167.50" cy="770.82" r="4.00" fill="#000" stroke="none" stroke-width="0"/>
<circle cx="1129.60" cy="783.39" r="4.00" fill="#000" stroke="none" stroke-width="0"/>
<rect x="1163.50" y="779.39" width="8.00" height="8.00" fill="#000"/>
<rect x="1143.88" y="778.30" width="10.00" height="10.00" fill="#fff" stroke="#666" stroke-width="0.8"/>
<text x="1148.875" y="743.275" font-size="9.5" text-anchor="middle" fill="#2e2e2e" >U8</text>
<line x1="1123.30" y1="670.40" x2="1224.80" y2="670.40" stroke="#555" stroke-width="0.9"/>
<rect x="1147.30" y="663.40" width="53.10" height="14.00" fill="#fff" stroke="#666" stroke-width="0.9"/>
<circle cx="1123.30" cy="670.40" r="6.20" fill="#000" stroke="none" stroke-width="0"/>
<circle cx="1224.80" cy="670.40" r="6.20" fill="#000" stroke="none" stroke-width="0"/>
<text x="1174" y="661.5" font-size="9.5" text-anchor="middle" fill="#2e2e2e" >C2</text>
<line x1="1123.30" y1="814.20" x2="1224.80" y2="814.20" stroke="#555" stroke-width="0.9"/>
<rect x="1147.30" y="807.20" width="53.10" height="14.00" fill="#fff" stroke="#666" stroke-width="0.9"/>
<circle cx="1123.30" cy="814.20" r="6.20" fill="#000" stroke="none" stroke-width="0"/>
<circle cx="1224.80" cy="814.20" r="6.20" fill="#000" stroke="none" stroke-width="0"/>
<text x="1174" y="804.5" font-size="9.5" text-anchor="middle" fill="#2e2e2e" >C1</text>
<line x1="1198.00" y1="698.00" x2="1198.00" y2="773.00" stroke="#555" stroke-width="0.9"/>
<rect x="1190.70" y="716.25" width="14.60" height="38.15" fill="#fff" stroke="#666" stroke-width="0.9"/>
<circle cx="1198.00" cy="698.00" r="6.20" fill="#000" stroke="none" stroke-width="0"/>
<circle cx="1198.00" cy="773.00" r="6.20" fill="#000" stroke="none" stroke-width="0"/>
<text x="1198" y="689.5" font-size="9.5" text-anchor="middle" fill="#2e2e2e" >R1</text>
<path d="M1219.2 688.3 H1313.3 V782.9 H1229 L1219.2 773Z" fill="#fff" stroke="#555" stroke-width="0.9"/>
<rect x="1232.75" y="688.30" width="2.50" height="11.90" fill="#000"/>
<rect x="1232.75" y="771.00" width="2.50" height="11.90" fill="#000"/>
<rect x="1219.20" y="702.50" width="11.80" height="2.50" fill="#000"/>
<rect x="1301.90" y="702.50" width="11.40" height="2.50" fill="#000"/>
<rect x="1239.21" y="688.30" width="2.50" height="11.90" fill="#000"/>
<rect x="1239.21" y="771.00" width="2.50" height="11.90" fill="#000"/>
<rect x="1219.20" y="708.92" width="11.80" height="2.50" fill="#000"/>
<rect x="1301.90" y="708.92" width="11.40" height="2.50" fill="#000"/>
<rect x="1245.67" y="688.30" width="2.50" height="11.90" fill="#000"/>
<rect x="1245.67" y="771.00" width="2.50" height="11.90" fill="#000"/>
<rect x="1219.20" y="715.34" width="11.80" height="2.50" fill="#000"/>
<rect x="1301.90" y="715.34" width="11.40" height="2.50" fill="#000"/>
<rect x="1252.13" y="688.30" width="2.50" height="11.90" fill="#000"/>
<rect x="1252.13" y="771.00" width="2.50" height="11.90" fill="#000"/>
<rect x="1219.20" y="721.76" width="11.80" height="2.50" fill="#000"/>
<rect x="1301.90" y="721.76" width="11.40" height="2.50" fill="#000"/>
<rect x="1258.59" y="688.30" width="2.50" height="11.90" fill="#000"/>
<rect x="1258.59" y="771.00" width="2.50" height="11.90" fill="#000"/>
<rect x="1219.20" y="728.18" width="11.80" height="2.50" fill="#000"/>
<rect x="1301.90" y="728.18" width="11.40" height="2.50" fill="#000"/>
<rect x="1265.05" y="688.30" width="2.50" height="11.90" fill="#000"/>
<rect x="1265.05" y="771.00" width="2.50" height="11.90" fill="#000"/>
<rect x="1219.20" y="734.60" width="11.80" height="2.50" fill="#000"/>
<rect x="1301.90" y="734.60" width="11.40" height="2.50" fill="#000"/>
<rect x="1271.51" y="688.30" width="2.50" height="11.90" fill="#000"/>
<rect x="1271.51" y="771.00" width="2.50" height="11.90" fill="#000"/>
<rect x="1219.20" y="741.02" width="11.80" height="2.50" fill="#000"/>
<rect x="1301.90" y="741.02" width="11.40" height="2.50" fill="#000"/>
<rect x="1277.97" y="688.30" width="2.50" height="11.90" fill="#000"/>
<rect x="1277.97" y="771.00" width="2.50" height="11.90" fill="#000"/>
<rect x="1219.20" y="747.44" width="11.80" height="2.50" fill="#000"/>
<rect x="1301.90" y="747.44" width="11.40" height="2.50" fill="#000"/>
<rect x="1284.43" y="688.30" width="2.50" height="11.90" fill="#000"/>
<rect x="1284.43" y="771.00" width="2.50" height="11.90" fill="#000"/>
<rect x="1219.20" y="753.86" width="11.80" height="2.50" fill="#000"/>
<rect x="1301.90" y="753.86" width="11.40" height="2.50" fill="#000"/>
<rect x="1290.89" y="688.30" width="2.50" height="11.90" fill="#000"/>
<rect x="1290.89" y="771.00" width="2.50" height="11.90" fill="#000"/>
<rect x="1219.20" y="760.28" width="11.80" height="2.50" fill="#000"/>
<rect x="1301.90" y="760.28" width="11.40" height="2.50" fill="#000"/>
<rect x="1297.35" y="688.30" width="2.50" height="11.90" fill="#000"/>
<rect x="1297.35" y="771.00" width="2.50" height="11.90" fill="#000"/>
<rect x="1219.20" y="766.70" width="11.80" height="2.50" fill="#000"/>
<rect x="1301.90" y="766.70" width="11.40" height="2.50" fill="#000"/>
<text x="1266" y="738.5" font-size="9.5" text-anchor="middle" fill="#2e2e2e" >U4</text>
<rect x="1233.80" y="734.50" width="2.80" height="2.80" fill="#fff" stroke="#666" stroke-width="0.6"/>
<line x1="1346.70" y1="685.60" x2="1346.70" y2="760.60" stroke="#555" stroke-width="0.9"/>
<rect x="1339.20" y="704.40" width="15.00" height="38.10" fill="#fff" stroke="#666" stroke-width="0.9"/>
<circle cx="1346.70" cy="685.60" r="6.20" fill="#000" stroke="none" stroke-width="0"/>
<circle cx="1346.70" cy="760.60" r="6.20" fill="#000" stroke="none" stroke-width="0"/>
<text x="1347" y="676.5" font-size="9.5" text-anchor="middle" fill="#2e2e2e" >R3</text>
<line x1="1246.25" y1="809.20" x2="1322.00" y2="809.20" stroke="#555" stroke-width="0.9"/>
<rect x="1265.40" y="802.20" width="38.10" height="14.00" fill="#fff" stroke="#666" stroke-width="0.9"/>
<circle cx="1246.25" cy="809.20" r="6.20" fill="#000" stroke="none" stroke-width="0"/>
<circle cx="1322.00" cy="809.20" r="6.20" fill="#000" stroke="none" stroke-width="0"/>
<text x="1284" y="800.5" font-size="9.5" text-anchor="middle" fill="#2e2e2e" >R2</text>
<circle cx="1341.90" cy="794.60" r="4.40" fill="#fff" stroke="#333" stroke-width="0.9"/>
<circle cx="1341.90" cy="794.60" r="2.90" fill="#000" stroke="none" stroke-width="0"/>
<text x="1341.9" y="787.5" font-size="5" text-anchor="middle" fill="#8a8a8a" >FID1</text>
</g></svg>
<div class="a" style="left:646px;top:312px;width:777px;height:1px;background:#d0d0d0"></div>
<div class="a" style="left:1405px;top:313px;width:16px;height:540px;background:#f0f0f0"></div>
<div class="a" style="left:647px;top:853px;width:774px;height:16px;background:#f0f0f0"></div>
<svg class="a" style="left:1408px;top:318px" width="10" height="7" viewBox="0 0 10 7"><path d="M1 6 L5 1.5 L9 6" fill="none" stroke="#c4c4c4" stroke-width="1.5"/></svg>
<svg class="a" style="left:1408px;top:840px" width="10" height="7" viewBox="0 0 10 7"><path d="M1 1 L5 5.5 L9 1" fill="none" stroke="#c4c4c4" stroke-width="1.5"/></svg>
<svg class="a" style="left:652px;top:856px" width="7" height="10" viewBox="0 0 7 10"><path d="M6 1 L1.5 5 L6 9" fill="none" stroke="#c4c4c4" stroke-width="1.5"/></svg>
<svg class="a" style="left:1392px;top:856px" width="7" height="10" viewBox="0 0 7 10"><path d="M1 1 L5.5 5 L1 9" fill="none" stroke="#c4c4c4" stroke-width="1.5"/></svg>
<div class="a" style="left:1385px;top:830px;width:20px;height:20px;border:1px solid #b8b8b8;background:#ececec"></div>
<svg class="a" style="left:1388px;top:833px" width="14" height="14" viewBox="0 0 14 14"><circle cx="7" cy="7" r="6" fill="#ddd" stroke="#888" stroke-width="0.8"/><circle cx="7" cy="7" r="4.6" fill="#2aa83a"/><path d="M5 5 H8.5 V8.5 M5 5 L9 9" stroke="#fff" stroke-width="1.3" fill="none"/></svg>
<div class="a" style="left:647px;top:869px;width:774px;height:24px;background:#0a6fc6"></div>
<div class="a" style="left:647px;top:893px;width:776px;height:2px;background:#e8e8e8"></div>
<div class="t" style="left:651px;top:875px;font-size:12px;color:#fff">(0, 0)</div>
<svg class="a" style="left:1157px;top:873px" width="15" height="15" viewBox="0 0 15 15"><path d="M8.5 8 V4 A2.8 2.8 0 0 1 14 4 V6" fill="none" stroke="#c8c8c8" stroke-width="1.6"/><rect x="0.5" y="7.5" width="10" height="7" fill="#f0c020" stroke="#333" stroke-width="0.8"/><path d="M2 14 L5 8 M5 14 L8 8 M8 14 L10 10" stroke="#222" stroke-width="1.2"/></svg>
<div class="a" style="left:1179px;top:873px;width:16px;height:16px;border:1.2px dashed #3a3a3a"></div>
<svg class="a" style="left:1178px;top:873px" width="18" height="17" viewBox="0 0 18 17">
<path d="M7.5 8.5 L3 14" stroke="#7a5a20" stroke-width="3.6" stroke-linecap="round"/><path d="M7.5 8.5 L3 14" stroke="#e8c47a" stroke-width="2" stroke-linecap="round"/>
<circle cx="10" cy="5.8" r="4.8" fill="#cfe2f2" stroke="#9a9a8a" stroke-width="1.4"/><circle cx="9" cy="4.8" r="1.7" fill="#fff"/></svg>
<div class="t b" style="left:1202.5px;top:871px;font-size:9.5px;line-height:10px;color:#4e4e4e;letter-spacing:-0.4px">100</div>
<svg class="a" style="left:1203.5px;top:876px" width="18" height="17" viewBox="0 0 18 17">
<path d="M7.5 8.5 L3 14" stroke="#7a5a20" stroke-width="3.6" stroke-linecap="round"/><path d="M7.5 8.5 L3 14" stroke="#e8c47a" stroke-width="2" stroke-linecap="round"/>
<circle cx="10" cy="5.8" r="4.8" fill="#cfe2f2" stroke="#9a9a8a" stroke-width="1.4"/><circle cx="9" cy="4.8" r="1.7" fill="#fff"/></svg>
<div class="t b" style="left:1225px;top:871px;font-size:9.5px;line-height:10px;color:#4e4e4e;letter-spacing:-0.5px">ALL</div>
<svg class="a" style="left:1226px;top:876px" width="18" height="17" viewBox="0 0 18 17">
<path d="M7.5 8.5 L3 14" stroke="#7a5a20" stroke-width="3.6" stroke-linecap="round"/><path d="M7.5 8.5 L3 14" stroke="#e8c47a" stroke-width="2" stroke-linecap="round"/>
<circle cx="10" cy="5.8" r="4.8" fill="#cfe2f2" stroke="#9a9a8a" stroke-width="1.4"/><circle cx="9" cy="4.8" r="1.7" fill="#fff"/></svg>
<div class="a" style="left:1251px;top:874px;width:6px;height:2px;background:#000"></div><div class="a" style="left:1258px;top:874px;width:6px;height:2px;background:#000"></div>
<svg class="a" style="left:1245px;top:876px" width="18" height="17" viewBox="0 0 18 17">
<path d="M7.5 8.5 L3 14" stroke="#7a5a20" stroke-width="3.6" stroke-linecap="round"/><path d="M7.5 8.5 L3 14" stroke="#e8c47a" stroke-width="2" stroke-linecap="round"/>
<circle cx="10" cy="5.8" r="4.8" fill="#cfe2f2" stroke="#9a9a8a" stroke-width="1.4"/><circle cx="9" cy="4.8" r="1.7" fill="#fff"/></svg>
<div class="a" style="left:1279px;top:875px;width:8px;height:2px;background:#555"></div>
<svg class="a" style="left:1266.5px;top:876px" width="18" height="17" viewBox="0 0 18 17">
<path d="M7.5 8.5 L3 14" stroke="#7a5a20" stroke-width="3.6" stroke-linecap="round"/><path d="M7.5 8.5 L3 14" stroke="#e8c47a" stroke-width="2" stroke-linecap="round"/>
<circle cx="10" cy="5.8" r="4.8" fill="#cfe2f2" stroke="#9a9a8a" stroke-width="1.4"/><circle cx="9" cy="4.8" r="1.7" fill="#fff"/></svg>
<div class="a" style="left:1313px;top:870px;width:57px;height:21px;background:#fff;border:1px solid #9ab"></div>
<div class="t" style="left:1319px;top:875.5px;font-size:12px;color:#333">131%</div>
<div class="a" style="left:1354px;top:872px;width:15px;height:18px;background:#ececec;border:1px solid #c0c0c0"></div>
<svg class="a" style="left:1357px;top:874px" width="9" height="14" viewBox="0 0 9 14"><path d="M1 5 L4.5 1.5 L8 5 M1 9 L4.5 12.5 L8 9" fill="none" stroke="#555" stroke-width="1.1"/></svg>
<svg class="a" style="left:1377px;top:876px" width="18" height="17" viewBox="0 0 18 17">
<path d="M8.5 8.5 L13 14" stroke="#7a5a20" stroke-width="3.6" stroke-linecap="round"/><path d="M8.5 8.5 L13 14" stroke="#e8c47a" stroke-width="2" stroke-linecap="round"/>
<circle cx="6" cy="5.8" r="4.8" fill="#cfe2f2" stroke="#9a9a8a" stroke-width="1.4"/><circle cx="5" cy="4.8" r="1.7" fill="#fff"/></svg>
<div class="a" style="left:1386px;top:873px;width:9px;height:2.4px;background:#4a4a4a"></div><div class="a" style="left:1389.3px;top:869.7px;width:2.4px;height:9px;background:#4a4a4a"></div>
<svg class="a" style="left:1400px;top:876px" width="18" height="17" viewBox="0 0 18 17">
<path d="M8.5 8.5 L13 14" stroke="#7a5a20" stroke-width="3.6" stroke-linecap="round"/><path d="M8.5 8.5 L13 14" stroke="#e8c47a" stroke-width="2" stroke-linecap="round"/>
<circle cx="6" cy="5.8" r="4.8" fill="#cfe2f2" stroke="#9a9a8a" stroke-width="1.4"/><circle cx="5" cy="4.8" r="1.7" fill="#fff"/></svg>
<div class="a" style="left:1404px;top:873px;width:7px;height:2.4px;background:#000"></div><div class="a" style="left:1406.3px;top:870.7px;width:2.4px;height:7px;background:#000"></div>
<div class="a" style="left:1411px;top:873px;width:7px;height:2.4px;background:#000"></div><div class="a" style="left:1413.3px;top:870.7px;width:2.4px;height:7px;background:#000"></div>
</body></html>
